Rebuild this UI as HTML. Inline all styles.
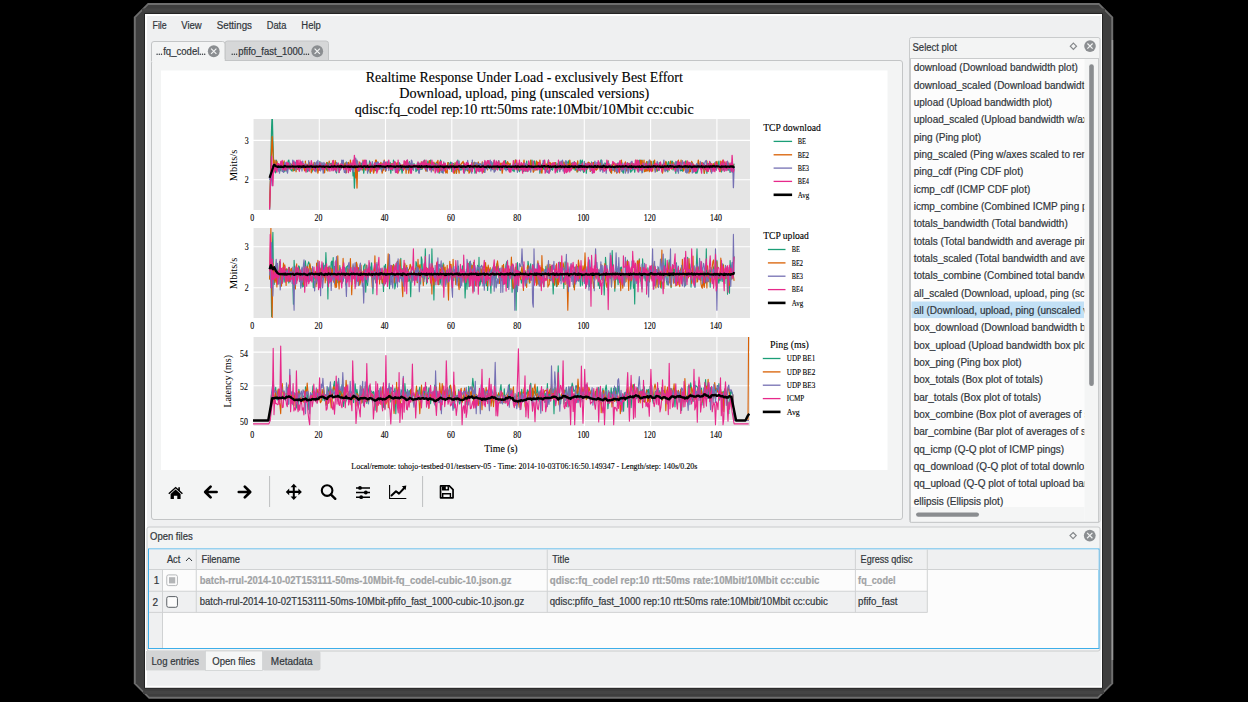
<!DOCTYPE html>
<html><head><meta charset="utf-8"><style>
html,body{margin:0;padding:0;background:#000;width:1248px;height:702px;overflow:hidden}

</style></head><body>
<svg width="1248" height="702" viewBox="0 0 1248 702" style="position:absolute;left:0;top:0" font-family="Liberation Sans">
<rect width="1248" height="702" fill="#000"/>
<path d="M133.8 16.9 L147.8 2.9 H1099.2 L1113.2 16.9 V683.8 L1098.2 698.8 H148.8 L133.8 683.8 Z" fill="#6e6e6e"/>
<rect x="1111.4" y="40" width="1.8" height="620" fill="#969696"/>
<path d="M135.8 17.4 L148.3 4.9 H1098.7 L1111.2 17.4 V683.3 L1097.7 696.8 H149.3 L135.8 683.3 Z" fill="#3e3e3e"/>
<rect x="142" y="8.5" width="963" height="3" fill="#444"/><rect x="143" y="691" width="961" height="3" fill="#444"/>
<rect x="144.3" y="13.3" width="958.4" height="675.2" fill="#1a1a1a"/>
<rect x="145" y="14" width="957" height="673.8" fill="#ffffff"/>
<rect x="147" y="16" width="954" height="669.8" fill="#eff0f1"/>
<text x="152.5" y="29" font-size="10" fill="#31363b" textLength="14.2" lengthAdjust="spacingAndGlyphs" stroke="#31363b" stroke-width="0.2" >File</text>
<text x="181.3" y="29" font-size="10" fill="#31363b" textLength="20.4" lengthAdjust="spacingAndGlyphs" stroke="#31363b" stroke-width="0.2" >View</text>
<text x="216.7" y="29" font-size="10" fill="#31363b" textLength="35.3" lengthAdjust="spacingAndGlyphs" stroke="#31363b" stroke-width="0.2" >Settings</text>
<text x="266.7" y="29" font-size="10" fill="#31363b" textLength="19.6" lengthAdjust="spacingAndGlyphs" stroke="#31363b" stroke-width="0.2" >Data</text>
<text x="301.3" y="29" font-size="10" fill="#31363b" textLength="19.5" lengthAdjust="spacingAndGlyphs" stroke="#31363b" stroke-width="0.2" >Help</text>
<rect x="151.5" y="60.5" width="751" height="459" rx="2.5" fill="#f3f4f4" stroke="#c3c5c6" stroke-width="1"/>
<path d="M225 60.5 V43.5 a2.5 2.5 0 0 1 2.5 -2.5 H326 a2.5 2.5 0 0 1 2.5 2.5 V60.5 Z" fill="#d6d7d8" stroke="#c3c5c6" stroke-width="1"/>
<path d="M151.5 61 V44 a2.5 2.5 0 0 1 2.5 -2.5 H222.5 a2.5 2.5 0 0 1 2.5 2.5 V61" fill="#f3f4f4" stroke="#c3c5c6" stroke-width="1"/>
<rect x="152" y="59" width="72.5" height="3" fill="#f3f4f4"/>
<circle cx="157.10" cy="54.3" r="0.72" fill="#31363b"/>
<circle cx="159.30" cy="54.3" r="0.72" fill="#31363b"/>
<circle cx="161.50" cy="54.3" r="0.72" fill="#31363b"/>
<text x="163.2" y="55" font-size="10" fill="#31363b" textLength="36.2" lengthAdjust="spacingAndGlyphs" stroke="#31363b" stroke-width="0.2" >fq_codel</text>
<circle cx="200.30" cy="54.3" r="0.72" fill="#31363b"/>
<circle cx="202.50" cy="54.3" r="0.72" fill="#31363b"/>
<circle cx="204.70" cy="54.3" r="0.72" fill="#31363b"/>
<circle cx="232.20" cy="54.3" r="0.72" fill="#31363b"/>
<circle cx="234.40" cy="54.3" r="0.72" fill="#31363b"/>
<circle cx="236.60" cy="54.3" r="0.72" fill="#31363b"/>
<text x="238.2" y="55" font-size="10" fill="#31363b" textLength="64.8" lengthAdjust="spacingAndGlyphs" stroke="#31363b" stroke-width="0.2" >pfifo_fast_1000</text>
<circle cx="304.10" cy="54.3" r="0.72" fill="#31363b"/>
<circle cx="306.30" cy="54.3" r="0.72" fill="#31363b"/>
<circle cx="308.50" cy="54.3" r="0.72" fill="#31363b"/>
<circle cx="213.75" cy="51.25" r="5.9" fill="#8b8e91"/>
<path d="M211.095 48.595 L216.405 53.905 M216.405 48.595 L211.095 53.905" stroke="#f3f4f4" stroke-width="1.15"/>
<circle cx="317.25" cy="51.25" r="5.9" fill="#8b8e91"/>
<path d="M314.595 48.595 L319.905 53.905 M319.905 48.595 L314.595 53.905" stroke="#f3f4f4" stroke-width="1.15"/>
<rect x="161" y="70.5" width="726.5" height="399.5" fill="#ffffff"/>
<text x="524.3" y="81.9" font-size="14" fill="#000" font-family="Liberation Serif" textLength="317" lengthAdjust="spacingAndGlyphs" text-anchor="middle" stroke="#000" stroke-width="0.12" >Realtime Response Under Load - exclusively Best Effort</text>
<text x="524.3" y="98" font-size="14" fill="#000" font-family="Liberation Serif" textLength="250" lengthAdjust="spacingAndGlyphs" text-anchor="middle" stroke="#000" stroke-width="0.12" >Download, upload, ping (unscaled versions)</text>
<text x="524.3" y="113.6" font-size="14" fill="#000" font-family="Liberation Serif" textLength="339" lengthAdjust="spacingAndGlyphs" text-anchor="middle" stroke="#000" stroke-width="0.12" >qdisc:fq_codel rep:10 rtt:50ms rate:10Mbit/10Mbit cc:cubic</text>
<rect x="253" y="119" width="497" height="91" fill="#e5e5e5"/>
<line x1="253.0" y1="119" x2="253.0" y2="210" stroke="#fff" stroke-width="1.1"/>
<line x1="319.3" y1="119" x2="319.3" y2="210" stroke="#fff" stroke-width="1.1"/>
<line x1="385.5" y1="119" x2="385.5" y2="210" stroke="#fff" stroke-width="1.1"/>
<line x1="451.8" y1="119" x2="451.8" y2="210" stroke="#fff" stroke-width="1.1"/>
<line x1="518.1" y1="119" x2="518.1" y2="210" stroke="#fff" stroke-width="1.1"/>
<line x1="584.3" y1="119" x2="584.3" y2="210" stroke="#fff" stroke-width="1.1"/>
<line x1="650.6" y1="119" x2="650.6" y2="210" stroke="#fff" stroke-width="1.1"/>
<line x1="716.9" y1="119" x2="716.9" y2="210" stroke="#fff" stroke-width="1.1"/>
<line x1="253" y1="140.4" x2="750" y2="140.4" stroke="#fff" stroke-width="1.1"/>
<line x1="253" y1="179.8" x2="750" y2="179.8" stroke="#fff" stroke-width="1.1"/>
<clipPath id="c1"><rect x="253" y="119" width="497" height="91"/></clipPath>
<g clip-path="url(#c1)">
<polyline points="269.6,209.4 270.2,187.7 270.9,156.2 271.6,128.6 272.2,112.8 272.9,140.4 273.5,160.1 274.2,166.0 274.9,165.5 275.5,172.8 276.2,160.1 276.9,163.5 277.5,169.0 278.2,163.8 278.8,168.1 279.5,166.8 280.2,164.1 280.8,170.6 281.5,164.8 282.2,162.2 282.8,162.4 283.5,167.5 284.1,163.8 284.8,171.7 285.5,167.1 286.1,165.2 286.8,170.8 287.5,166.9 288.1,161.2 288.8,160.1 289.4,164.2 290.1,164.0 290.8,169.6 291.4,170.4 292.1,171.1 292.8,164.9 293.4,164.2 294.1,168.7 294.7,170.5 295.4,165.8 296.1,165.6 296.7,167.0 297.4,162.6 298.1,166.9 298.7,166.8 299.4,170.1 300.0,166.2 300.7,162.4 301.4,166.4 302.0,166.4 302.7,165.2 303.4,165.7 304.0,164.9 304.7,164.9 305.4,164.7 306.0,169.1 306.7,165.7 307.3,171.7 308.0,165.8 308.7,170.6 309.3,166.8 310.0,165.1 310.7,167.9 311.3,166.3 312.0,171.8 312.6,169.3 313.3,164.4 314.0,170.2 314.6,164.6 315.3,171.0 316.0,169.5 316.6,170.1 317.3,166.6 317.9,164.9 318.6,170.0 319.3,167.2 319.9,161.5 320.6,167.6 321.3,169.2 321.9,165.4 322.6,167.3 323.2,168.8 323.9,172.3 324.6,164.0 325.2,168.4 325.9,166.6 326.6,170.0 327.2,162.5 327.9,164.2 328.5,163.5 329.2,166.9 329.9,165.1 330.5,163.8 331.2,163.4 331.9,165.6 332.5,166.8 333.2,167.7 333.8,169.0 334.5,169.6 335.2,165.5 335.8,167.4 336.5,172.9 337.2,167.1 337.8,163.2 338.5,167.5 339.1,172.4 339.8,167.0 340.5,164.1 341.1,166.0 341.8,168.0 342.5,160.8 343.1,160.6 343.8,166.9 344.4,164.0 345.1,165.4 345.8,164.1 346.4,162.0 347.1,164.0 347.8,166.3 348.4,168.7 349.1,169.2 349.7,166.7 350.4,163.0 351.1,165.7 351.7,166.4 352.4,165.8 353.1,175.9 353.7,164.9 354.4,188.1 355.1,172.8 355.7,171.9 356.4,170.2 357.0,161.5 357.7,167.1 358.4,167.4 359.0,171.4 359.7,165.7 360.4,168.6 361.0,163.1 361.7,163.9 362.3,169.0 363.0,165.3 363.7,173.1 364.3,168.7 365.0,162.7 365.7,164.1 366.3,166.0 367.0,166.7 367.6,171.1 368.3,170.9 369.0,165.9 369.6,161.0 370.3,173.1 371.0,164.6 371.6,164.7 372.3,163.6 372.9,169.3 373.6,168.3 374.3,166.5 374.9,169.8 375.6,170.5 376.3,169.4 376.9,166.8 377.6,165.4 378.2,166.7 378.9,166.4 379.6,168.8 380.2,168.9 380.9,163.1 381.6,166.8 382.2,166.9 382.9,163.7 383.5,162.7 384.2,162.6 384.9,165.3 385.5,166.8 386.2,165.7 386.9,166.0 387.5,162.2 388.2,165.7 388.8,164.6 389.5,166.7 390.2,162.3 390.8,173.1 391.5,165.4 392.2,164.2 392.8,170.3 393.5,160.1 394.1,167.1 394.8,167.1 395.5,170.0 396.1,163.8 396.8,165.9 397.5,168.5 398.1,165.9 398.8,164.4 399.4,162.8 400.1,165.9 400.8,169.6 401.4,168.4 402.1,173.1 402.8,168.9 403.4,164.3 404.1,165.1 404.8,166.9 405.4,167.7 406.1,161.6 406.7,165.7 407.4,163.7 408.1,165.4 408.7,168.7 409.4,161.7 410.1,170.5 410.7,170.4 411.4,168.0 412.0,168.9 412.7,168.4 413.4,168.5 414.0,163.5 414.7,166.4 415.4,165.5 416.0,171.6 416.7,169.3 417.3,163.2 418.0,170.4 418.7,162.9 419.3,169.8 420.0,165.7 420.7,169.3 421.3,166.0 422.0,169.4 422.6,167.4 423.3,161.3 424.0,167.8 424.6,160.2 425.3,168.0 426.0,170.3 426.6,166.4 427.3,167.9 427.9,161.1 428.6,163.9 429.3,162.9 429.9,164.6 430.6,160.1 431.3,164.1 431.9,164.9 432.6,169.2 433.2,169.5 433.9,166.0 434.6,163.5 435.2,163.1 435.9,169.6 436.6,164.9 437.2,166.0 437.9,170.1 438.5,165.0 439.2,173.1 439.9,165.8 440.5,160.1 441.2,169.8 441.9,166.5 442.5,172.6 443.2,169.0 443.8,164.2 444.5,169.9 445.2,166.7 445.8,167.7 446.5,167.8 447.2,166.0 447.8,165.1 448.5,162.7 449.1,164.0 449.8,168.4 450.5,162.1 451.1,162.7 451.8,171.5 452.5,164.5 453.1,164.0 453.8,163.6 454.5,164.9 455.1,170.7 455.8,167.4 456.4,173.1 457.1,167.1 457.8,160.2 458.4,164.5 459.1,164.0 459.8,168.2 460.4,169.8 461.1,170.0 461.7,166.2 462.4,169.1 463.1,168.6 463.7,163.0 464.4,171.8 465.1,170.7 465.7,168.2 466.4,166.9 467.0,167.0 467.7,171.0 468.4,166.0 469.0,167.0 469.7,165.5 470.4,170.0 471.0,165.8 471.7,165.9 472.3,168.7 473.0,167.3 473.7,168.4 474.3,162.3 475.0,173.1 475.7,171.2 476.3,172.0 477.0,167.8 477.6,168.7 478.3,167.9 479.0,164.3 479.6,171.7 480.3,169.3 481.0,167.3 481.6,170.4 482.3,165.4 482.9,165.6 483.6,168.8 484.3,172.2 484.9,161.6 485.6,165.1 486.3,165.3 486.9,166.4 487.6,166.6 488.2,164.0 488.9,166.7 489.6,168.6 490.2,164.4 490.9,166.4 491.6,169.0 492.2,169.5 492.9,162.9 493.5,164.6 494.2,160.4 494.9,168.3 495.5,168.9 496.2,165.3 496.9,162.3 497.5,164.7 498.2,165.2 498.8,160.7 499.5,168.9 500.2,170.5 500.8,168.9 501.5,167.6 502.2,165.4 502.8,163.4 503.5,165.3 504.2,161.8 504.8,169.2 505.5,160.6 506.1,169.2 506.8,162.9 507.5,169.6 508.1,165.5 508.8,166.4 509.5,165.0 510.1,164.2 510.8,167.3 511.4,166.8 512.1,165.8 512.8,170.7 513.4,168.9 514.1,171.7 514.8,166.6 515.4,160.1 516.1,164.3 516.7,169.3 517.4,168.8 518.1,163.5 518.7,168.1 519.4,171.7 520.1,169.8 520.7,169.9 521.4,169.8 522.0,164.5 522.7,166.4 523.4,171.3 524.0,168.3 524.7,170.2 525.4,170.4 526.0,171.4 526.7,161.1 527.3,167.6 528.0,164.8 528.7,163.9 529.3,167.8 530.0,164.9 530.7,164.9 531.3,165.9 532.0,160.1 532.6,165.7 533.3,167.3 534.0,164.6 534.6,161.0 535.3,163.5 536.0,168.1 536.6,169.3 537.3,169.5 537.9,168.7 538.6,165.4 539.3,163.9 539.9,173.1 540.6,166.7 541.3,170.1 541.9,164.4 542.6,163.7 543.2,169.1 543.9,168.0 544.6,169.6 545.2,165.4 545.9,171.7 546.6,170.1 547.2,168.8 547.9,162.7 548.5,160.1 549.2,166.5 549.9,170.5 550.5,166.4 551.2,169.3 551.9,165.2 552.5,170.1 553.2,167.8 553.9,166.6 554.5,165.0 555.2,166.8 555.8,162.6 556.5,166.2 557.2,172.3 557.8,163.7 558.5,167.5 559.2,168.7 559.8,161.8 560.5,169.7 561.1,166.4 561.8,168.8 562.5,162.3 563.1,167.7 563.8,165.9 564.5,171.0 565.1,162.1 565.8,170.0 566.4,163.7 567.1,163.1 567.8,162.7 568.4,160.9 569.1,170.3 569.8,165.3 570.4,166.2 571.1,165.3 571.7,163.1 572.4,166.3 573.1,169.2 573.7,166.9 574.4,161.7 575.1,170.3 575.7,166.3 576.4,169.7 577.0,163.1 577.7,171.8 578.4,167.7 579.0,167.0 579.7,166.2 580.4,160.1 581.0,161.7 581.7,169.8 582.3,160.1 583.0,170.4 583.7,172.5 584.3,171.3 585.0,166.0 585.7,164.9 586.3,173.1 587.0,165.2 587.6,167.4 588.3,164.4 589.0,167.8 589.6,163.8 590.3,164.8 591.0,170.3 591.6,162.0 592.3,165.9 592.9,164.3 593.6,162.6 594.3,169.7 594.9,166.9 595.6,169.2 596.3,169.6 596.9,165.8 597.6,165.5 598.2,162.4 598.9,162.2 599.6,166.7 600.2,169.2 600.9,160.1 601.6,160.1 602.2,166.9 602.9,169.5 603.6,167.9 604.2,165.7 604.9,163.0 605.5,163.5 606.2,165.2 606.9,167.4 607.5,166.1 608.2,167.6 608.9,166.4 609.5,166.9 610.2,164.9 610.8,172.5 611.5,167.7 612.2,167.5 612.8,170.2 613.5,167.1 614.2,169.9 614.8,168.7 615.5,167.5 616.1,167.4 616.8,168.4 617.5,163.1 618.1,166.0 618.8,165.6 619.5,165.9 620.1,168.7 620.8,169.4 621.4,164.0 622.1,167.7 622.8,172.2 623.4,173.1 624.1,165.9 624.8,168.9 625.4,166.8 626.1,168.3 626.7,167.9 627.4,167.1 628.1,170.5 628.7,166.7 629.4,163.5 630.1,164.4 630.7,172.1 631.4,170.8 632.0,170.8 632.7,167.4 633.4,163.9 634.0,165.6 634.7,172.1 635.4,166.4 636.0,164.1 636.7,168.0 637.3,160.6 638.0,168.7 638.7,162.9 639.3,160.1 640.0,170.6 640.7,167.6 641.3,164.8 642.0,160.1 642.6,172.2 643.3,164.8 644.0,165.7 644.6,167.9 645.3,169.2 646.0,168.3 646.6,167.6 647.3,170.6 647.9,161.6 648.6,170.1 649.3,167.9 649.9,168.7 650.6,167.9 651.3,166.3 651.9,169.0 652.6,167.3 653.3,161.2 653.9,163.3 654.6,167.5 655.2,163.7 655.9,169.0 656.6,165.9 657.2,171.1 657.9,170.2 658.6,169.3 659.2,162.7 659.9,165.9 660.5,164.9 661.2,166.1 661.9,165.4 662.5,165.3 663.2,164.2 663.9,166.1 664.5,169.5 665.2,169.1 665.8,162.8 666.5,162.2 667.2,164.8 667.8,171.8 668.5,161.6 669.2,165.6 669.8,166.8 670.5,166.5 671.1,167.8 671.8,161.1 672.5,161.3 673.1,170.0 673.8,167.2 674.5,165.6 675.1,162.6 675.8,173.1 676.4,163.7 677.1,161.3 677.8,167.7 678.4,166.8 679.1,162.7 679.8,165.4 680.4,170.8 681.1,170.3 681.7,169.9 682.4,171.1 683.1,166.7 683.7,168.3 684.4,166.5 685.1,164.4 685.7,161.0 686.4,166.0 687.0,172.5 687.7,162.3 688.4,167.0 689.0,163.0 689.7,168.1 690.4,165.7 691.0,167.1 691.7,166.7 692.3,162.6 693.0,168.7 693.7,166.1 694.3,166.0 695.0,167.9 695.7,173.1 696.3,165.6 697.0,173.1 697.6,171.4 698.3,168.1 699.0,165.3 699.6,163.9 700.3,164.0 701.0,164.8 701.6,167.8 702.3,162.8 703.0,167.5 703.6,163.1 704.3,173.1 704.9,169.7 705.6,168.5 706.3,166.7 706.9,173.1 707.6,164.1 708.3,163.5 708.9,164.2 709.6,168.3 710.2,162.1 710.9,168.4 711.6,163.8 712.2,166.8 712.9,166.7 713.6,167.1 714.2,166.7 714.9,163.1 715.5,162.1 716.2,162.1 716.9,163.8 717.5,164.5 718.2,165.2 718.9,161.1 719.5,168.0 720.2,168.6 720.8,166.5 721.5,171.9 722.2,167.4 722.8,166.8 723.5,169.9 724.2,168.5 724.8,164.5 725.5,167.4 726.1,166.4 726.8,163.4 727.5,168.6 728.1,170.3 728.8,166.8 729.5,165.3 730.1,172.4 730.8,164.6 731.4,167.6 732.1,168.0 732.8,169.4 733.4,167.2 734.1,163.6" fill="none" stroke="#1b9e77" stroke-width="1.25" stroke-linejoin="round" />
<polyline points="269.6,207.4 270.2,187.7 270.9,168.0 271.6,148.3 272.2,136.5 272.9,152.2 273.5,164.0 274.2,168.0 274.9,160.1 275.5,166.8 276.2,169.8 276.9,161.2 277.5,168.6 278.2,165.1 278.8,164.2 279.5,171.3 280.2,166.2 280.8,162.9 281.5,167.7 282.2,164.6 282.8,166.7 283.5,163.4 284.1,160.8 284.8,170.1 285.5,167.5 286.1,165.4 286.8,168.6 287.5,169.2 288.1,167.7 288.8,167.5 289.4,168.7 290.1,165.6 290.8,164.1 291.4,164.3 292.1,164.5 292.8,162.8 293.4,170.9 294.1,167.0 294.7,166.0 295.4,164.9 296.1,171.7 296.7,160.7 297.4,169.4 298.1,165.8 298.7,164.3 299.4,163.2 300.0,168.8 300.7,168.3 301.4,165.4 302.0,164.7 302.7,163.7 303.4,166.8 304.0,168.8 304.7,170.8 305.4,161.1 306.0,170.9 306.7,164.4 307.3,165.7 308.0,164.2 308.7,163.6 309.3,162.3 310.0,166.8 310.7,165.3 311.3,172.8 312.0,166.4 312.6,169.5 313.3,167.1 314.0,162.7 314.6,166.3 315.3,163.1 316.0,167.2 316.6,165.3 317.3,167.9 317.9,173.1 318.6,168.8 319.3,167.4 319.9,166.1 320.6,166.6 321.3,167.0 321.9,163.6 322.6,164.6 323.2,167.8 323.9,163.8 324.6,172.8 325.2,167.5 325.9,167.0 326.6,162.5 327.2,168.3 327.9,171.2 328.5,166.0 329.2,161.2 329.9,167.2 330.5,166.9 331.2,167.2 331.9,166.4 332.5,162.5 333.2,160.4 333.8,165.1 334.5,166.9 335.2,160.7 335.8,166.2 336.5,166.4 337.2,167.7 337.8,167.6 338.5,165.8 339.1,167.5 339.8,165.2 340.5,166.3 341.1,164.8 341.8,167.8 342.5,167.2 343.1,165.8 343.8,166.3 344.4,166.2 345.1,162.9 345.8,169.9 346.4,172.7 347.1,164.3 347.8,167.3 348.4,162.3 349.1,166.8 349.7,170.2 350.4,160.1 351.1,165.3 351.7,168.0 352.4,168.9 353.1,164.8 353.7,168.7 354.4,165.3 355.1,162.9 355.7,177.8 356.4,167.7 357.0,188.1 357.7,161.3 358.4,168.0 359.0,168.0 359.7,162.0 360.4,167.7 361.0,167.1 361.7,165.4 362.3,170.0 363.0,160.1 363.7,162.8 364.3,165.9 365.0,168.4 365.7,170.2 366.3,165.4 367.0,164.4 367.6,167.8 368.3,167.2 369.0,164.8 369.6,166.8 370.3,172.4 371.0,164.5 371.6,165.8 372.3,164.3 372.9,169.0 373.6,173.1 374.3,170.5 374.9,165.6 375.6,160.1 376.3,160.1 376.9,165.6 377.6,171.2 378.2,167.6 378.9,165.2 379.6,165.2 380.2,166.3 380.9,162.4 381.6,169.4 382.2,173.1 382.9,169.4 383.5,170.2 384.2,160.1 384.9,167.2 385.5,171.1 386.2,164.6 386.9,163.4 387.5,166.4 388.2,166.0 388.8,163.4 389.5,165.0 390.2,168.8 390.8,164.7 391.5,163.7 392.2,165.5 392.8,163.8 393.5,164.7 394.1,167.3 394.8,167.1 395.5,164.7 396.1,168.3 396.8,163.0 397.5,162.7 398.1,173.0 398.8,166.8 399.4,169.0 400.1,168.6 400.8,166.1 401.4,167.1 402.1,164.8 402.8,165.6 403.4,165.4 404.1,169.1 404.8,167.7 405.4,162.0 406.1,173.1 406.7,161.2 407.4,168.4 408.1,162.9 408.7,173.1 409.4,167.9 410.1,163.9 410.7,166.1 411.4,163.4 412.0,169.4 412.7,168.4 413.4,168.7 414.0,165.0 414.7,165.1 415.4,167.0 416.0,167.4 416.7,167.5 417.3,166.3 418.0,169.6 418.7,166.8 419.3,167.1 420.0,168.3 420.7,168.4 421.3,161.9 422.0,168.5 422.6,165.3 423.3,162.3 424.0,164.3 424.6,166.5 425.3,163.4 426.0,171.1 426.6,170.5 427.3,167.8 427.9,167.3 428.6,166.9 429.3,160.7 429.9,161.3 430.6,166.7 431.3,165.8 431.9,169.5 432.6,165.6 433.2,170.8 433.9,162.2 434.6,168.2 435.2,164.8 435.9,170.7 436.6,162.2 437.2,164.7 437.9,160.4 438.5,166.4 439.2,171.7 439.9,169.1 440.5,170.6 441.2,161.6 441.9,168.6 442.5,169.0 443.2,164.7 443.8,165.8 444.5,165.0 445.2,168.2 445.8,172.9 446.5,170.9 447.2,173.1 447.8,162.6 448.5,163.7 449.1,167.8 449.8,164.6 450.5,164.5 451.1,164.6 451.8,164.9 452.5,163.8 453.1,166.3 453.8,173.1 454.5,173.1 455.1,162.6 455.8,164.7 456.4,173.1 457.1,166.0 457.8,169.4 458.4,168.3 459.1,173.1 459.8,164.2 460.4,166.9 461.1,164.0 461.7,163.2 462.4,162.5 463.1,161.4 463.7,165.7 464.4,165.9 465.1,168.6 465.7,164.9 466.4,167.3 467.0,170.3 467.7,162.8 468.4,164.3 469.0,173.1 469.7,172.5 470.4,167.3 471.0,170.8 471.7,162.7 472.3,166.0 473.0,164.8 473.7,163.6 474.3,162.3 475.0,167.4 475.7,164.6 476.3,165.8 477.0,164.0 477.6,164.8 478.3,162.0 479.0,164.8 479.6,168.1 480.3,166.2 481.0,170.1 481.6,165.5 482.3,161.8 482.9,168.5 483.6,171.8 484.3,166.8 484.9,168.1 485.6,166.5 486.3,168.4 486.9,166.3 487.6,169.8 488.2,161.6 488.9,167.3 489.6,164.9 490.2,164.1 490.9,167.0 491.6,165.1 492.2,167.3 492.9,168.0 493.5,167.3 494.2,165.0 494.9,170.6 495.5,169.4 496.2,169.1 496.9,168.3 497.5,162.9 498.2,166.6 498.8,167.5 499.5,166.1 500.2,163.2 500.8,168.9 501.5,163.3 502.2,173.1 502.8,169.3 503.5,161.9 504.2,161.6 504.8,165.9 505.5,167.9 506.1,163.9 506.8,167.8 507.5,161.6 508.1,162.7 508.8,164.0 509.5,169.2 510.1,163.4 510.8,167.3 511.4,167.2 512.1,167.8 512.8,166.8 513.4,164.9 514.1,163.8 514.8,163.8 515.4,160.1 516.1,167.5 516.7,162.8 517.4,168.5 518.1,167.0 518.7,170.1 519.4,162.6 520.1,165.6 520.7,166.0 521.4,166.8 522.0,163.5 522.7,168.0 523.4,165.1 524.0,160.1 524.7,166.8 525.4,168.3 526.0,169.6 526.7,163.8 527.3,166.1 528.0,168.7 528.7,169.0 529.3,166.3 530.0,169.5 530.7,160.1 531.3,167.0 532.0,166.9 532.6,166.6 533.3,172.1 534.0,170.9 534.6,167.5 535.3,166.4 536.0,170.3 536.6,161.0 537.3,164.9 537.9,162.2 538.6,162.6 539.3,167.1 539.9,160.1 540.6,165.9 541.3,172.3 541.9,173.1 542.6,166.3 543.2,163.6 543.9,166.1 544.6,160.8 545.2,167.3 545.9,164.5 546.6,164.0 547.2,169.6 547.9,165.4 548.5,165.2 549.2,162.9 549.9,162.5 550.5,163.2 551.2,168.7 551.9,164.0 552.5,163.0 553.2,166.2 553.9,164.0 554.5,163.9 555.2,162.6 555.8,166.1 556.5,164.8 557.2,165.7 557.8,166.1 558.5,168.3 559.2,167.4 559.8,169.9 560.5,167.0 561.1,164.2 561.8,164.4 562.5,164.0 563.1,166.7 563.8,162.0 564.5,167.8 565.1,164.0 565.8,165.1 566.4,168.7 567.1,168.6 567.8,164.0 568.4,166.3 569.1,165.5 569.8,160.1 570.4,164.6 571.1,166.0 571.7,164.1 572.4,168.3 573.1,166.9 573.7,165.0 574.4,168.9 575.1,166.5 575.7,166.9 576.4,166.0 577.0,171.9 577.7,160.8 578.4,166.6 579.0,164.6 579.7,169.6 580.4,170.5 581.0,166.3 581.7,167.4 582.3,164.3 583.0,169.3 583.7,169.5 584.3,165.3 585.0,164.2 585.7,163.5 586.3,166.5 587.0,165.5 587.6,168.9 588.3,162.2 589.0,162.8 589.6,162.9 590.3,171.4 591.0,163.6 591.6,168.7 592.3,164.8 592.9,165.0 593.6,162.5 594.3,167.0 594.9,167.5 595.6,169.5 596.3,170.1 596.9,164.6 597.6,169.2 598.2,164.3 598.9,167.6 599.6,168.2 600.2,163.4 600.9,163.7 601.6,169.5 602.2,166.9 602.9,166.4 603.6,164.3 604.2,168.7 604.9,167.7 605.5,166.8 606.2,164.2 606.9,163.6 607.5,168.1 608.2,160.9 608.9,165.1 609.5,168.9 610.2,171.3 610.8,168.0 611.5,173.1 612.2,165.9 612.8,164.7 613.5,162.4 614.2,164.9 614.8,171.8 615.5,167.3 616.1,164.2 616.8,173.1 617.5,169.0 618.1,164.5 618.8,166.3 619.5,172.8 620.1,168.0 620.8,166.4 621.4,160.1 622.1,167.8 622.8,169.3 623.4,165.7 624.1,165.4 624.8,164.7 625.4,161.9 626.1,166.6 626.7,170.8 627.4,166.3 628.1,166.4 628.7,163.4 629.4,163.8 630.1,168.7 630.7,164.0 631.4,163.3 632.0,167.0 632.7,163.5 633.4,165.9 634.0,165.9 634.7,166.9 635.4,163.9 636.0,160.1 636.7,165.7 637.3,170.1 638.0,167.2 638.7,168.3 639.3,165.4 640.0,166.9 640.7,160.1 641.3,164.1 642.0,160.6 642.6,168.6 643.3,167.1 644.0,160.1 644.6,171.7 645.3,166.0 646.0,171.3 646.6,161.6 647.3,170.9 647.9,167.4 648.6,167.0 649.3,171.7 649.9,160.1 650.6,167.0 651.3,161.3 651.9,168.6 652.6,171.1 653.3,165.8 653.9,165.8 654.6,160.1 655.2,169.8 655.9,171.4 656.6,168.7 657.2,165.5 657.9,164.7 658.6,168.8 659.2,167.6 659.9,164.7 660.5,163.0 661.2,168.3 661.9,166.1 662.5,173.1 663.2,169.5 663.9,165.1 664.5,166.5 665.2,167.1 665.8,161.4 666.5,167.4 667.2,169.9 667.8,165.8 668.5,165.8 669.2,170.1 669.8,163.3 670.5,161.1 671.1,168.3 671.8,169.2 672.5,166.7 673.1,162.6 673.8,168.3 674.5,168.8 675.1,168.3 675.8,165.7 676.4,165.8 677.1,167.0 677.8,162.7 678.4,160.1 679.1,168.3 679.8,163.2 680.4,165.6 681.1,160.1 681.7,169.2 682.4,167.6 683.1,166.1 683.7,171.0 684.4,167.1 685.1,164.2 685.7,171.0 686.4,166.1 687.0,160.8 687.7,168.4 688.4,169.3 689.0,173.1 689.7,166.8 690.4,171.6 691.0,164.7 691.7,161.3 692.3,164.7 693.0,169.0 693.7,164.4 694.3,168.0 695.0,170.0 695.7,168.1 696.3,165.7 697.0,167.6 697.6,164.8 698.3,160.1 699.0,164.5 699.6,164.1 700.3,168.6 701.0,162.3 701.6,165.4 702.3,163.3 703.0,168.9 703.6,165.8 704.3,173.1 704.9,167.6 705.6,169.2 706.3,169.7 706.9,161.0 707.6,171.3 708.3,167.0 708.9,167.0 709.6,164.8 710.2,163.3 710.9,171.6 711.6,168.2 712.2,168.7 712.9,164.3 713.6,163.6 714.2,167.8 714.9,168.2 715.5,169.7 716.2,165.4 716.9,161.3 717.5,165.3 718.2,168.8 718.9,169.2 719.5,168.8 720.2,171.7 720.8,161.1 721.5,166.3 722.2,167.6 722.8,160.1 723.5,165.9 724.2,161.9 724.8,165.7 725.5,163.1 726.1,166.3 726.8,167.7 727.5,165.3 728.1,164.3 728.8,163.1 729.5,165.9 730.1,167.4 730.8,167.7 731.4,165.6 732.1,168.1 732.8,167.6 733.4,164.9 734.1,164.7" fill="none" stroke="#d95f02" stroke-width="1.25" stroke-linejoin="round" />
<polyline points="269.6,179.8 270.2,175.9 270.9,171.9 271.6,179.8 272.2,185.7 272.9,175.9 273.5,168.0 274.2,163.9 274.9,167.2 275.5,165.3 276.2,169.7 276.9,167.3 277.5,169.2 278.2,171.1 278.8,165.2 279.5,173.1 280.2,166.8 280.8,164.1 281.5,165.3 282.2,171.5 282.8,165.8 283.5,172.4 284.1,169.4 284.8,162.1 285.5,166.1 286.1,162.9 286.8,170.0 287.5,173.1 288.1,169.0 288.8,162.5 289.4,163.7 290.1,163.2 290.8,167.1 291.4,166.9 292.1,167.2 292.8,160.1 293.4,166.3 294.1,161.0 294.7,167.1 295.4,162.2 296.1,170.0 296.7,168.2 297.4,165.4 298.1,168.4 298.7,167.9 299.4,167.1 300.0,168.3 300.7,161.7 301.4,163.0 302.0,171.0 302.7,161.1 303.4,166.7 304.0,166.6 304.7,167.1 305.4,163.8 306.0,164.3 306.7,168.2 307.3,166.4 308.0,170.7 308.7,160.7 309.3,169.2 310.0,169.3 310.7,168.8 311.3,166.1 312.0,164.2 312.6,167.6 313.3,166.4 314.0,167.6 314.6,162.4 315.3,165.8 316.0,171.9 316.6,161.9 317.3,165.4 317.9,160.4 318.6,168.4 319.3,168.1 319.9,167.1 320.6,170.9 321.3,167.7 321.9,162.5 322.6,164.3 323.2,173.1 323.9,162.4 324.6,165.4 325.2,163.9 325.9,166.4 326.6,165.9 327.2,166.3 327.9,166.3 328.5,169.8 329.2,163.2 329.9,165.8 330.5,165.3 331.2,165.4 331.9,167.4 332.5,166.7 333.2,170.7 333.8,165.7 334.5,165.6 335.2,167.2 335.8,171.9 336.5,162.3 337.2,167.0 337.8,166.5 338.5,167.5 339.1,168.4 339.8,167.8 340.5,170.0 341.1,168.3 341.8,160.1 342.5,162.8 343.1,160.2 343.8,168.4 344.4,172.4 345.1,170.8 345.8,173.1 346.4,163.1 347.1,162.6 347.8,166.1 348.4,165.3 349.1,165.3 349.7,166.8 350.4,164.2 351.1,169.7 351.7,167.9 352.4,166.9 353.1,171.9 353.7,169.7 354.4,165.1 355.1,165.4 355.7,158.1 356.4,163.6 357.0,160.1 357.7,164.1 358.4,166.7 359.0,164.6 359.7,170.6 360.4,167.2 361.0,169.8 361.7,168.1 362.3,162.8 363.0,161.4 363.7,166.4 364.3,167.9 365.0,164.0 365.7,165.0 366.3,160.4 367.0,164.5 367.6,173.1 368.3,166.3 369.0,167.5 369.6,169.0 370.3,166.1 371.0,166.3 371.6,167.6 372.3,161.7 372.9,165.3 373.6,165.2 374.3,166.0 374.9,162.6 375.6,170.0 376.3,162.7 376.9,167.2 377.6,161.8 378.2,162.0 378.9,164.9 379.6,167.9 380.2,165.6 380.9,165.4 381.6,171.1 382.2,167.5 382.9,168.7 383.5,162.2 384.2,161.1 384.9,168.8 385.5,168.1 386.2,170.6 386.9,165.7 387.5,163.9 388.2,160.8 388.8,170.5 389.5,163.6 390.2,167.0 390.8,168.8 391.5,167.6 392.2,168.9 392.8,165.1 393.5,166.5 394.1,162.8 394.8,168.2 395.5,172.4 396.1,169.6 396.8,165.4 397.5,171.1 398.1,168.9 398.8,164.8 399.4,170.8 400.1,163.9 400.8,165.4 401.4,168.3 402.1,166.7 402.8,168.1 403.4,167.8 404.1,167.5 404.8,166.5 405.4,166.8 406.1,168.9 406.7,169.6 407.4,160.1 408.1,170.0 408.7,167.0 409.4,162.8 410.1,163.4 410.7,168.8 411.4,160.2 412.0,161.0 412.7,167.5 413.4,170.4 414.0,164.5 414.7,167.1 415.4,167.4 416.0,169.1 416.7,168.4 417.3,166.0 418.0,163.7 418.7,173.0 419.3,173.1 420.0,163.5 420.7,169.2 421.3,164.4 422.0,166.2 422.6,162.6 423.3,163.7 424.0,167.4 424.6,167.0 425.3,165.5 426.0,164.2 426.6,168.5 427.3,171.3 427.9,166.2 428.6,166.7 429.3,167.0 429.9,169.7 430.6,164.6 431.3,172.0 431.9,168.0 432.6,162.5 433.2,170.0 433.9,165.2 434.6,165.1 435.2,165.2 435.9,171.8 436.6,163.3 437.2,166.1 437.9,165.0 438.5,165.6 439.2,166.3 439.9,162.7 440.5,162.0 441.2,172.4 441.9,169.0 442.5,167.0 443.2,173.1 443.8,161.9 444.5,168.9 445.2,164.7 445.8,165.8 446.5,167.2 447.2,169.7 447.8,167.6 448.5,166.2 449.1,164.0 449.8,167.1 450.5,167.7 451.1,167.3 451.8,162.4 452.5,165.6 453.1,168.6 453.8,170.5 454.5,167.8 455.1,169.4 455.8,167.8 456.4,162.2 457.1,164.3 457.8,165.8 458.4,165.2 459.1,161.1 459.8,170.1 460.4,165.1 461.1,167.1 461.7,166.0 462.4,166.3 463.1,167.5 463.7,164.8 464.4,173.1 465.1,165.6 465.7,164.4 466.4,169.5 467.0,169.6 467.7,160.5 468.4,169.3 469.0,167.7 469.7,168.9 470.4,168.4 471.0,168.6 471.7,173.1 472.3,160.1 473.0,168.8 473.7,165.3 474.3,166.7 475.0,162.3 475.7,164.3 476.3,163.0 477.0,162.8 477.6,163.9 478.3,166.4 479.0,163.6 479.6,171.5 480.3,163.7 481.0,164.3 481.6,165.6 482.3,170.7 482.9,162.3 483.6,168.6 484.3,164.5 484.9,172.3 485.6,167.1 486.3,168.5 486.9,168.9 487.6,168.6 488.2,160.9 488.9,166.6 489.6,165.4 490.2,160.1 490.9,171.0 491.6,161.7 492.2,167.7 492.9,168.5 493.5,167.8 494.2,172.2 494.9,171.3 495.5,170.1 496.2,168.3 496.9,164.3 497.5,163.1 498.2,167.7 498.8,165.4 499.5,165.2 500.2,167.2 500.8,165.8 501.5,168.4 502.2,164.8 502.8,167.2 503.5,166.4 504.2,165.7 504.8,166.1 505.5,168.8 506.1,170.8 506.8,166.7 507.5,168.3 508.1,168.2 508.8,166.9 509.5,168.8 510.1,165.1 510.8,165.3 511.4,169.4 512.1,165.4 512.8,169.5 513.4,164.3 514.1,164.6 514.8,166.6 515.4,163.8 516.1,163.3 516.7,165.2 517.4,172.3 518.1,166.1 518.7,165.9 519.4,164.0 520.1,169.6 520.7,164.3 521.4,165.5 522.0,165.3 522.7,170.4 523.4,169.3 524.0,163.0 524.7,164.0 525.4,166.8 526.0,163.2 526.7,165.7 527.3,167.9 528.0,171.5 528.7,163.4 529.3,167.0 530.0,165.8 530.7,172.2 531.3,168.3 532.0,165.7 532.6,167.4 533.3,168.9 534.0,170.1 534.6,165.9 535.3,167.7 536.0,167.7 536.6,167.5 537.3,168.6 537.9,167.6 538.6,168.5 539.3,166.5 539.9,170.9 540.6,170.0 541.3,166.5 541.9,167.1 542.6,166.1 543.2,160.3 543.9,164.3 544.6,163.1 545.2,165.3 545.9,167.0 546.6,169.1 547.2,172.4 547.9,171.0 548.5,173.1 549.2,170.1 549.9,171.6 550.5,169.6 551.2,166.7 551.9,167.9 552.5,163.9 553.2,163.8 553.9,163.4 554.5,163.9 555.2,165.8 555.8,168.2 556.5,165.2 557.2,167.4 557.8,167.2 558.5,165.3 559.2,170.0 559.8,171.7 560.5,165.6 561.1,161.1 561.8,163.1 562.5,160.1 563.1,171.0 563.8,168.6 564.5,173.1 565.1,169.3 565.8,160.7 566.4,161.6 567.1,169.8 567.8,167.6 568.4,169.2 569.1,170.8 569.8,167.4 570.4,167.6 571.1,166.3 571.7,165.8 572.4,164.4 573.1,162.3 573.7,166.9 574.4,167.3 575.1,166.6 575.7,165.2 576.4,167.0 577.0,169.7 577.7,168.2 578.4,164.3 579.0,169.8 579.7,164.1 580.4,171.0 581.0,164.7 581.7,164.8 582.3,167.3 583.0,166.7 583.7,167.3 584.3,161.4 585.0,168.0 585.7,168.9 586.3,165.4 587.0,163.1 587.6,165.6 588.3,167.1 589.0,163.4 589.6,169.0 590.3,169.0 591.0,170.5 591.6,162.8 592.3,173.1 592.9,170.6 593.6,165.8 594.3,165.3 594.9,161.2 595.6,165.3 596.3,168.1 596.9,162.3 597.6,163.3 598.2,163.0 598.9,163.3 599.6,165.0 600.2,171.1 600.9,169.9 601.6,160.5 602.2,166.5 602.9,172.3 603.6,166.4 604.2,163.6 604.9,165.4 605.5,166.6 606.2,173.1 606.9,166.4 607.5,167.0 608.2,161.4 608.9,166.6 609.5,166.8 610.2,168.0 610.8,167.0 611.5,165.8 612.2,168.2 612.8,169.4 613.5,170.5 614.2,166.3 614.8,167.7 615.5,167.6 616.1,171.4 616.8,169.1 617.5,172.5 618.1,163.7 618.8,163.0 619.5,165.4 620.1,167.0 620.8,165.2 621.4,171.3 622.1,170.8 622.8,163.0 623.4,169.9 624.1,166.8 624.8,168.7 625.4,173.1 626.1,168.7 626.7,164.1 627.4,162.6 628.1,173.1 628.7,171.5 629.4,168.5 630.1,163.5 630.7,162.8 631.4,161.7 632.0,161.4 632.7,168.0 633.4,169.7 634.0,163.8 634.7,167.4 635.4,166.5 636.0,167.8 636.7,167.9 637.3,163.8 638.0,169.8 638.7,172.1 639.3,168.8 640.0,166.3 640.7,167.6 641.3,167.1 642.0,172.9 642.6,169.4 643.3,163.3 644.0,167.2 644.6,168.8 645.3,163.2 646.0,168.4 646.6,164.3 647.3,166.0 647.9,165.4 648.6,163.5 649.3,160.1 649.9,162.7 650.6,169.4 651.3,170.2 651.9,167.7 652.6,167.3 653.3,164.5 653.9,166.6 654.6,166.1 655.2,172.1 655.9,166.9 656.6,165.1 657.2,161.4 657.9,164.3 658.6,166.4 659.2,170.4 659.9,166.8 660.5,166.7 661.2,167.2 661.9,166.3 662.5,165.2 663.2,165.3 663.9,160.1 664.5,169.8 665.2,171.7 665.8,165.5 666.5,170.6 667.2,167.4 667.8,167.0 668.5,169.3 669.2,164.3 669.8,164.7 670.5,166.3 671.1,164.9 671.8,164.0 672.5,167.7 673.1,164.9 673.8,166.3 674.5,166.8 675.1,168.2 675.8,161.3 676.4,165.8 677.1,171.2 677.8,165.2 678.4,173.1 679.1,165.9 679.8,164.4 680.4,162.3 681.1,166.1 681.7,169.0 682.4,160.7 683.1,163.5 683.7,162.7 684.4,167.6 685.1,164.8 685.7,172.3 686.4,165.3 687.0,173.1 687.7,170.0 688.4,171.4 689.0,163.2 689.7,163.9 690.4,168.7 691.0,162.9 691.7,166.6 692.3,173.0 693.0,168.0 693.7,172.2 694.3,166.6 695.0,165.7 695.7,169.1 696.3,164.3 697.0,163.5 697.6,169.6 698.3,165.0 699.0,167.1 699.6,167.7 700.3,161.5 701.0,169.0 701.6,167.9 702.3,167.0 703.0,165.0 703.6,164.4 704.3,169.8 704.9,162.5 705.6,161.0 706.3,160.5 706.9,166.3 707.6,168.4 708.3,170.2 708.9,165.7 709.6,167.0 710.2,167.0 710.9,168.7 711.6,173.1 712.2,167.7 712.9,167.3 713.6,167.9 714.2,171.2 714.9,167.6 715.5,167.2 716.2,170.3 716.9,164.7 717.5,166.9 718.2,166.3 718.9,165.5 719.5,167.6 720.2,167.0 720.8,165.1 721.5,164.4 722.2,163.9 722.8,167.3 723.5,164.3 724.2,163.2 724.8,171.2 725.5,168.0 726.1,166.8 726.8,166.7 727.5,161.1 728.1,163.0 728.8,167.2 729.5,167.1 730.1,171.1 730.8,169.8 731.4,162.5 732.1,172.2 732.8,164.7 733.4,187.7 734.1,167.7" fill="none" stroke="#7570b3" stroke-width="1.25" stroke-linejoin="round" />
<polyline points="269.6,209.4 270.2,191.6 270.9,171.9 271.6,156.2 272.2,171.9 272.9,185.7 273.5,168.0 274.2,172.0 274.9,169.0 275.5,164.5 276.2,170.6 276.9,172.2 277.5,163.0 278.2,167.7 278.8,163.7 279.5,165.1 280.2,167.3 280.8,161.3 281.5,167.5 282.2,160.3 282.8,169.5 283.5,169.8 284.1,168.8 284.8,165.9 285.5,170.2 286.1,168.8 286.8,162.1 287.5,166.0 288.1,163.0 288.8,165.4 289.4,168.5 290.1,169.0 290.8,166.0 291.4,166.4 292.1,168.2 292.8,168.4 293.4,162.0 294.1,163.3 294.7,165.6 295.4,167.7 296.1,167.9 296.7,160.3 297.4,168.5 298.1,160.1 298.7,168.7 299.4,171.3 300.0,160.2 300.7,166.9 301.4,161.8 302.0,165.2 302.7,167.3 303.4,163.6 304.0,167.5 304.7,165.2 305.4,167.0 306.0,172.1 306.7,165.3 307.3,168.3 308.0,167.0 308.7,165.3 309.3,171.1 310.0,164.9 310.7,164.8 311.3,160.6 312.0,164.0 312.6,165.5 313.3,168.6 314.0,166.7 314.6,171.0 315.3,165.3 316.0,167.2 316.6,167.8 317.3,166.6 317.9,165.2 318.6,165.8 319.3,170.3 319.9,162.5 320.6,166.6 321.3,165.6 321.9,166.6 322.6,169.6 323.2,165.8 323.9,167.9 324.6,169.3 325.2,166.3 325.9,164.3 326.6,164.8 327.2,166.1 327.9,168.6 328.5,167.7 329.2,167.1 329.9,171.1 330.5,164.2 331.2,166.4 331.9,170.7 332.5,162.0 333.2,160.6 333.8,170.7 334.5,167.2 335.2,169.3 335.8,164.3 336.5,171.0 337.2,165.2 337.8,165.5 338.5,163.2 339.1,172.6 339.8,169.1 340.5,167.3 341.1,163.7 341.8,166.4 342.5,164.4 343.1,165.3 343.8,169.5 344.4,167.1 345.1,167.9 345.8,167.7 346.4,169.6 347.1,164.3 347.8,165.8 348.4,172.7 349.1,164.4 349.7,168.5 350.4,171.3 351.1,162.9 351.7,166.8 352.4,165.6 353.1,160.1 353.7,166.8 354.4,155.4 355.1,164.4 355.7,164.0 356.4,166.7 357.0,167.0 357.7,169.7 358.4,170.6 359.0,167.2 359.7,162.8 360.4,168.8 361.0,168.6 361.7,166.4 362.3,168.5 363.0,162.6 363.7,165.3 364.3,160.1 365.0,166.0 365.7,160.1 366.3,168.5 367.0,166.0 367.6,170.0 368.3,167.9 369.0,167.7 369.6,164.7 370.3,162.4 371.0,167.5 371.6,171.2 372.3,166.6 372.9,167.2 373.6,168.2 374.3,163.9 374.9,163.1 375.6,168.8 376.3,168.8 376.9,173.1 377.6,168.5 378.2,163.9 378.9,169.4 379.6,163.7 380.2,164.4 380.9,164.6 381.6,164.5 382.2,166.8 382.9,163.3 383.5,163.2 384.2,165.4 384.9,166.6 385.5,162.4 386.2,161.8 386.9,168.5 387.5,163.9 388.2,166.3 388.8,160.1 389.5,167.5 390.2,168.4 390.8,169.3 391.5,163.6 392.2,169.8 392.8,164.4 393.5,168.1 394.1,162.2 394.8,161.5 395.5,162.9 396.1,172.6 396.8,171.0 397.5,173.1 398.1,160.1 398.8,168.3 399.4,167.7 400.1,166.3 400.8,164.6 401.4,167.5 402.1,166.3 402.8,166.5 403.4,170.5 404.1,160.8 404.8,161.0 405.4,166.4 406.1,166.9 406.7,160.5 407.4,160.1 408.1,166.3 408.7,164.5 409.4,167.7 410.1,165.4 410.7,173.1 411.4,173.1 412.0,165.0 412.7,167.0 413.4,165.2 414.0,166.2 414.7,164.5 415.4,165.6 416.0,166.9 416.7,165.1 417.3,168.5 418.0,161.9 418.7,169.4 419.3,167.6 420.0,163.5 420.7,167.5 421.3,163.3 422.0,161.8 422.6,163.9 423.3,167.7 424.0,160.3 424.6,164.9 425.3,169.4 426.0,160.1 426.6,165.7 427.3,164.4 427.9,163.5 428.6,167.9 429.3,163.5 429.9,170.2 430.6,169.4 431.3,167.5 431.9,160.1 432.6,164.4 433.2,162.6 433.9,167.6 434.6,164.6 435.2,172.9 435.9,167.1 436.6,164.9 437.2,168.1 437.9,172.5 438.5,171.4 439.2,164.3 439.9,162.0 440.5,167.4 441.2,161.2 441.9,170.4 442.5,164.3 443.2,165.3 443.8,163.0 444.5,171.0 445.2,163.1 445.8,165.9 446.5,169.0 447.2,167.8 447.8,167.0 448.5,165.4 449.1,169.0 449.8,169.1 450.5,166.1 451.1,166.5 451.8,164.8 452.5,163.5 453.1,172.3 453.8,166.7 454.5,165.7 455.1,166.3 455.8,169.8 456.4,164.2 457.1,161.0 457.8,167.0 458.4,169.0 459.1,164.0 459.8,166.4 460.4,166.1 461.1,165.8 461.7,168.0 462.4,166.6 463.1,168.8 463.7,172.8 464.4,163.2 465.1,165.6 465.7,166.8 466.4,162.3 467.0,167.0 467.7,163.0 468.4,163.9 469.0,167.5 469.7,170.5 470.4,165.0 471.0,165.8 471.7,163.3 472.3,171.5 473.0,166.9 473.7,165.8 474.3,165.5 475.0,166.2 475.7,165.6 476.3,173.1 477.0,167.6 477.6,168.7 478.3,171.5 479.0,166.2 479.6,167.8 480.3,170.2 481.0,171.0 481.6,165.6 482.3,173.1 482.9,166.9 483.6,170.1 484.3,166.1 484.9,160.5 485.6,163.3 486.3,166.8 486.9,161.8 487.6,160.6 488.2,163.4 488.9,160.7 489.6,165.9 490.2,164.5 490.9,166.8 491.6,167.7 492.2,166.5 492.9,169.0 493.5,166.8 494.2,160.1 494.9,164.3 495.5,167.1 496.2,161.0 496.9,161.9 497.5,169.9 498.2,168.7 498.8,161.0 499.5,166.2 500.2,165.9 500.8,168.2 501.5,170.0 502.2,162.9 502.8,169.1 503.5,164.8 504.2,160.6 504.8,164.8 505.5,167.2 506.1,164.5 506.8,164.7 507.5,168.0 508.1,165.7 508.8,170.4 509.5,172.1 510.1,168.3 510.8,172.1 511.4,168.6 512.1,166.9 512.8,166.0 513.4,160.6 514.1,169.5 514.8,168.0 515.4,168.0 516.1,169.8 516.7,160.1 517.4,169.1 518.1,167.3 518.7,167.2 519.4,160.1 520.1,167.6 520.7,169.1 521.4,162.6 522.0,168.7 522.7,173.1 523.4,163.0 524.0,163.6 524.7,171.2 525.4,170.6 526.0,166.7 526.7,169.7 527.3,171.5 528.0,170.5 528.7,160.9 529.3,163.2 530.0,170.1 530.7,167.2 531.3,166.4 532.0,167.8 532.6,166.8 533.3,161.1 534.0,168.8 534.6,169.2 535.3,166.9 536.0,168.9 536.6,168.2 537.3,168.2 537.9,170.0 538.6,162.9 539.3,168.9 539.9,162.5 540.6,169.5 541.3,169.7 541.9,166.0 542.6,167.6 543.2,164.0 543.9,164.6 544.6,160.1 545.2,173.1 545.9,170.2 546.6,166.9 547.2,167.5 547.9,167.0 548.5,160.1 549.2,173.1 549.9,164.6 550.5,167.5 551.2,166.8 551.9,163.3 552.5,167.0 553.2,164.2 553.9,162.6 554.5,162.9 555.2,172.8 555.8,168.9 556.5,171.0 557.2,169.3 557.8,167.4 558.5,160.1 559.2,168.9 559.8,167.8 560.5,167.4 561.1,162.0 561.8,168.6 562.5,165.4 563.1,164.2 563.8,165.0 564.5,173.1 565.1,171.1 565.8,164.7 566.4,172.6 567.1,167.6 567.8,171.8 568.4,165.6 569.1,167.1 569.8,172.0 570.4,167.8 571.1,170.4 571.7,168.8 572.4,162.9 573.1,166.1 573.7,165.9 574.4,162.0 575.1,166.6 575.7,162.7 576.4,165.7 577.0,166.1 577.7,168.2 578.4,169.7 579.0,170.3 579.7,170.0 580.4,165.3 581.0,165.7 581.7,169.7 582.3,163.0 583.0,169.0 583.7,168.2 584.3,171.4 585.0,169.7 585.7,164.2 586.3,165.6 587.0,169.0 587.6,163.0 588.3,167.2 589.0,166.7 589.6,163.6 590.3,165.5 591.0,168.0 591.6,170.4 592.3,162.8 592.9,173.1 593.6,169.0 594.3,172.6 594.9,168.8 595.6,164.2 596.3,168.0 596.9,168.3 597.6,167.1 598.2,160.7 598.9,162.5 599.6,166.2 600.2,169.0 600.9,168.2 601.6,165.9 602.2,167.7 602.9,167.3 603.6,170.3 604.2,171.3 604.9,170.5 605.5,166.2 606.2,169.9 606.9,160.1 607.5,165.1 608.2,164.8 608.9,163.7 609.5,170.2 610.2,170.6 610.8,167.6 611.5,164.9 612.2,165.0 612.8,161.5 613.5,162.3 614.2,163.4 614.8,163.1 615.5,165.8 616.1,163.9 616.8,167.5 617.5,167.9 618.1,163.6 618.8,171.8 619.5,162.1 620.1,160.6 620.8,168.0 621.4,164.1 622.1,165.9 622.8,169.5 623.4,165.2 624.1,164.7 624.8,163.2 625.4,167.4 626.1,165.9 626.7,168.3 627.4,163.1 628.1,166.7 628.7,163.6 629.4,168.5 630.1,166.0 630.7,169.2 631.4,168.7 632.0,162.8 632.7,166.9 633.4,166.6 634.0,164.0 634.7,168.9 635.4,160.2 636.0,168.8 636.7,167.6 637.3,160.1 638.0,171.8 638.7,160.7 639.3,165.1 640.0,164.7 640.7,169.7 641.3,165.8 642.0,170.4 642.6,163.2 643.3,167.2 644.0,168.5 644.6,167.9 645.3,166.9 646.0,163.3 646.6,165.2 647.3,168.9 647.9,169.2 648.6,169.7 649.3,163.9 649.9,164.9 650.6,170.0 651.3,171.6 651.9,166.7 652.6,168.3 653.3,164.8 653.9,166.9 654.6,165.3 655.2,163.9 655.9,163.2 656.6,167.2 657.2,164.2 657.9,168.3 658.6,170.4 659.2,165.8 659.9,162.7 660.5,162.0 661.2,166.7 661.9,172.0 662.5,165.5 663.2,167.2 663.9,164.6 664.5,163.2 665.2,168.0 665.8,168.8 666.5,167.8 667.2,168.7 667.8,169.7 668.5,165.9 669.2,168.9 669.8,167.5 670.5,167.7 671.1,168.6 671.8,164.7 672.5,168.1 673.1,166.9 673.8,164.1 674.5,167.1 675.1,171.2 675.8,168.1 676.4,168.2 677.1,164.7 677.8,161.4 678.4,166.0 679.1,167.1 679.8,162.1 680.4,168.9 681.1,165.7 681.7,165.2 682.4,166.8 683.1,167.3 683.7,166.1 684.4,161.9 685.1,164.9 685.7,168.6 686.4,165.8 687.0,163.7 687.7,161.1 688.4,164.2 689.0,166.1 689.7,162.3 690.4,163.9 691.0,166.2 691.7,168.8 692.3,166.4 693.0,163.7 693.7,170.0 694.3,171.7 695.0,165.1 695.7,171.5 696.3,170.8 697.0,167.4 697.6,167.5 698.3,166.5 699.0,166.2 699.6,165.1 700.3,167.1 701.0,169.3 701.6,173.1 702.3,162.9 703.0,164.3 703.6,164.8 704.3,166.8 704.9,169.5 705.6,165.3 706.3,167.0 706.9,171.1 707.6,163.6 708.3,171.3 708.9,168.2 709.6,161.3 710.2,169.4 710.9,166.3 711.6,163.5 712.2,166.8 712.9,171.3 713.6,168.4 714.2,167.0 714.9,171.6 715.5,162.4 716.2,165.9 716.9,164.6 717.5,166.0 718.2,165.7 718.9,168.0 719.5,171.5 720.2,164.8 720.8,166.8 721.5,162.0 722.2,170.5 722.8,166.4 723.5,160.1 724.2,171.1 724.8,170.6 725.5,166.2 726.1,161.6 726.8,170.7 727.5,166.7 728.1,167.5 728.8,168.7 729.5,167.7 730.1,163.1 730.8,166.5 731.4,171.1 732.1,155.4 732.8,166.7 733.4,171.9 734.1,169.1" fill="none" stroke="#e7298a" stroke-width="1.25" stroke-linejoin="round" />
<polyline points="269.6,177.8 270.2,175.9 270.9,173.9 271.6,171.9 272.2,170.0 272.9,168.0 273.5,165.6 274.2,164.8 274.9,165.2 275.5,166.0 276.2,166.4 276.9,166.5 277.5,166.9 278.2,167.0 278.8,166.4 279.5,166.7 280.2,167.0 280.8,166.5 281.5,167.0 282.2,166.8 282.8,166.8 283.5,167.1 284.1,166.5 284.8,165.8 285.5,166.5 286.1,166.5 286.8,166.7 287.5,166.6 288.1,166.6 288.8,166.5 289.4,166.7 290.1,166.6 290.8,166.7 291.4,166.5 292.1,166.4 292.8,166.4 293.4,166.7 294.1,166.7 294.7,166.5 295.4,166.7 296.1,166.7 296.7,166.5 297.4,166.5 298.1,166.3 298.7,166.9 299.4,166.3 300.0,166.7 300.7,166.5 301.4,166.9 302.0,166.6 302.7,166.8 303.4,166.2 304.0,166.8 304.7,166.3 305.4,166.8 306.0,166.9 306.7,166.5 307.3,166.4 308.0,166.6 308.7,166.5 309.3,166.6 310.0,166.6 310.7,166.3 311.3,166.6 312.0,166.4 312.6,166.9 313.3,166.7 314.0,166.4 314.6,166.7 315.3,167.1 316.0,166.4 316.6,166.5 317.3,166.7 317.9,166.6 318.6,166.7 319.3,166.5 319.9,166.3 320.6,166.5 321.3,166.6 321.9,166.7 322.6,166.6 323.2,166.7 323.9,166.4 324.6,166.9 325.2,166.7 325.9,166.5 326.6,166.5 327.2,166.5 327.9,166.7 328.5,166.6 329.2,166.9 329.9,167.0 330.5,166.9 331.2,166.5 331.9,166.3 332.5,166.7 333.2,166.7 333.8,166.7 334.5,166.2 335.2,166.5 335.8,166.6 336.5,166.7 337.2,166.5 337.8,166.3 338.5,166.5 339.1,166.8 339.8,166.3 340.5,166.6 341.1,166.2 341.8,166.8 342.5,166.6 343.1,166.5 343.8,167.0 344.4,166.6 345.1,166.4 345.8,166.6 346.4,166.5 347.1,166.5 347.8,166.8 348.4,166.4 349.1,166.8 349.7,166.7 350.4,166.8 351.1,166.4 351.7,166.7 352.4,166.7 353.1,167.1 353.7,166.7 354.4,166.4 355.1,167.1 355.7,166.5 356.4,166.6 357.0,167.0 357.7,166.7 358.4,166.4 359.0,166.6 359.7,166.5 360.4,166.3 361.0,166.7 361.7,166.4 362.3,166.9 363.0,166.8 363.7,166.3 364.3,166.3 365.0,166.4 365.7,166.9 366.3,166.6 367.0,166.8 367.6,166.1 368.3,166.9 369.0,166.9 369.6,166.7 370.3,166.5 371.0,166.7 371.6,166.7 372.3,166.5 372.9,166.6 373.6,167.0 374.3,166.9 374.9,166.2 375.6,166.6 376.3,166.2 376.9,166.2 377.6,166.3 378.2,166.6 378.9,166.2 379.6,166.7 380.2,166.1 380.9,166.4 381.6,166.4 382.2,166.7 382.9,166.7 383.5,166.6 384.2,166.7 384.9,166.8 385.5,166.8 386.2,166.5 386.9,166.3 387.5,166.1 388.2,166.4 388.8,166.6 389.5,166.4 390.2,166.2 390.8,166.5 391.5,166.3 392.2,166.5 392.8,166.5 393.5,166.7 394.1,166.4 394.8,166.8 395.5,166.8 396.1,166.5 396.8,166.3 397.5,166.4 398.1,166.4 398.8,166.6 399.4,166.6 400.1,166.3 400.8,166.1 401.4,167.2 402.1,166.3 402.8,166.5 403.4,166.6 404.1,166.7 404.8,166.7 405.4,166.9 406.1,166.5 406.7,166.8 407.4,166.6 408.1,166.9 408.7,166.3 409.4,166.4 410.1,166.8 410.7,166.5 411.4,166.7 412.0,166.8 412.7,166.6 413.4,166.4 414.0,166.2 414.7,166.5 415.4,166.3 416.0,166.4 416.7,166.4 417.3,166.3 418.0,166.9 418.7,166.7 419.3,166.2 420.0,166.9 420.7,166.8 421.3,166.1 422.0,166.8 422.6,166.6 423.3,166.5 424.0,166.7 424.6,166.4 425.3,166.4 426.0,166.7 426.6,166.2 427.3,166.8 427.9,166.7 428.6,166.6 429.3,166.5 429.9,166.8 430.6,166.5 431.3,167.1 431.9,166.7 432.6,166.8 433.2,166.8 433.9,166.6 434.6,166.5 435.2,166.8 435.9,166.6 436.6,167.0 437.2,166.7 437.9,166.4 438.5,166.8 439.2,166.7 439.9,166.6 440.5,166.4 441.2,166.5 441.9,166.6 442.5,166.8 443.2,166.6 443.8,167.3 444.5,166.5 445.2,166.8 445.8,166.5 446.5,166.6 447.2,166.3 447.8,166.8 448.5,167.1 449.1,166.6 449.8,166.7 450.5,166.6 451.1,166.3 451.8,166.8 452.5,166.5 453.1,166.4 453.8,166.4 454.5,167.1 455.1,166.6 455.8,166.8 456.4,166.7 457.1,166.8 457.8,166.7 458.4,166.4 459.1,166.2 459.8,166.5 460.4,166.9 461.1,166.3 461.7,166.9 462.4,166.7 463.1,166.3 463.7,166.7 464.4,166.4 465.1,166.7 465.7,166.9 466.4,166.6 467.0,166.7 467.7,166.2 468.4,166.2 469.0,166.2 469.7,166.8 470.4,166.2 471.0,166.5 471.7,166.5 472.3,166.6 473.0,166.7 473.7,166.6 474.3,166.4 475.0,166.2 475.7,166.5 476.3,166.6 477.0,166.7 477.6,166.7 478.3,166.2 479.0,166.4 479.6,166.6 480.3,167.0 481.0,167.0 481.6,166.5 482.3,166.5 482.9,166.3 483.6,166.6 484.3,166.8 484.9,167.0 485.6,166.8 486.3,167.1 486.9,166.5 487.6,166.5 488.2,166.3 488.9,167.0 489.6,166.9 490.2,166.5 490.9,166.5 491.6,167.1 492.2,166.8 492.9,166.6 493.5,166.7 494.2,166.5 494.9,166.6 495.5,166.7 496.2,166.5 496.9,166.6 497.5,166.3 498.2,167.0 498.8,166.7 499.5,166.8 500.2,166.7 500.8,166.5 501.5,166.5 502.2,167.1 502.8,166.3 503.5,166.5 504.2,166.5 504.8,166.6 505.5,166.4 506.1,166.5 506.8,167.0 507.5,166.8 508.1,166.7 508.8,166.7 509.5,166.7 510.1,166.5 510.8,166.9 511.4,166.8 512.1,166.8 512.8,166.6 513.4,166.5 514.1,166.8 514.8,166.5 515.4,166.7 516.1,166.3 516.7,167.1 517.4,166.6 518.1,166.3 518.7,166.7 519.4,166.9 520.1,166.8 520.7,166.5 521.4,166.7 522.0,166.4 522.7,166.6 523.4,166.7 524.0,166.7 524.7,166.5 525.4,166.4 526.0,166.8 526.7,166.9 527.3,166.9 528.0,166.5 528.7,166.2 529.3,166.7 530.0,166.4 530.7,166.7 531.3,166.4 532.0,167.0 532.6,166.5 533.3,166.9 534.0,166.8 534.6,166.5 535.3,166.7 536.0,166.6 536.6,166.5 537.3,166.6 537.9,166.3 538.6,166.4 539.3,166.8 539.9,166.6 540.6,166.7 541.3,166.7 541.9,166.2 542.6,166.8 543.2,166.3 543.9,166.2 544.6,166.0 545.2,166.6 545.9,166.5 546.6,166.5 547.2,166.7 547.9,166.2 548.5,166.1 549.2,167.1 549.9,166.7 550.5,166.3 551.2,166.8 551.9,166.8 552.5,166.6 553.2,166.6 553.9,166.6 554.5,166.6 555.2,166.2 555.8,167.2 556.5,166.7 557.2,166.9 557.8,166.6 558.5,166.7 559.2,166.5 559.8,166.6 560.5,166.1 561.1,166.9 561.8,166.7 562.5,166.4 563.1,166.7 563.8,166.6 564.5,167.0 565.1,166.4 565.8,166.6 566.4,166.5 567.1,166.8 567.8,166.7 568.4,166.8 569.1,166.2 569.8,167.0 570.4,166.5 571.1,166.5 571.7,166.3 572.4,166.5 573.1,166.9 573.7,166.5 574.4,167.0 575.1,166.4 575.7,166.6 576.4,166.8 577.0,166.7 577.7,166.5 578.4,167.0 579.0,166.2 579.7,166.8 580.4,166.2 581.0,166.6 581.7,166.2 582.3,166.9 583.0,166.4 583.7,166.6 584.3,166.8 585.0,166.4 585.7,166.7 586.3,166.8 587.0,166.7 587.6,166.8 588.3,166.7 589.0,166.6 589.6,166.4 590.3,166.6 591.0,166.8 591.6,166.4 592.3,166.7 592.9,166.8 593.6,166.9 594.3,166.2 594.9,166.6 595.6,166.2 596.3,166.9 596.9,166.9 597.6,166.2 598.2,166.7 598.9,166.7 599.6,166.7 600.2,166.9 600.9,166.4 601.6,166.9 602.2,166.4 602.9,166.9 603.6,166.0 604.2,166.4 604.9,166.3 605.5,167.0 606.2,166.5 606.9,166.8 607.5,166.8 608.2,166.8 608.9,166.4 609.5,166.6 610.2,166.7 610.8,166.8 611.5,166.8 612.2,166.7 612.8,166.7 613.5,166.9 614.2,166.8 614.8,167.2 615.5,166.6 616.1,166.5 616.8,166.7 617.5,166.3 618.1,166.8 618.8,166.6 619.5,166.3 620.1,166.6 620.8,166.8 621.4,166.5 622.1,166.7 622.8,166.3 623.4,166.4 624.1,166.7 624.8,166.5 625.4,166.2 626.1,166.3 626.7,166.4 627.4,166.7 628.1,166.8 628.7,166.8 629.4,166.4 630.1,166.9 630.7,166.5 631.4,166.2 632.0,167.0 632.7,166.5 633.4,166.9 634.0,166.6 634.7,166.5 635.4,166.8 636.0,166.9 636.7,166.7 637.3,166.6 638.0,166.7 638.7,166.8 639.3,166.4 640.0,166.9 640.7,167.0 641.3,166.6 642.0,166.1 642.6,166.7 643.3,166.6 644.0,166.9 644.6,166.8 645.3,166.9 646.0,166.5 646.6,166.8 647.3,166.8 647.9,166.4 648.6,167.0 649.3,166.4 649.9,166.7 650.6,166.8 651.3,166.6 651.9,166.7 652.6,166.5 653.3,166.7 653.9,166.2 654.6,166.4 655.2,166.3 655.9,166.9 656.6,166.7 657.2,166.3 657.9,166.5 658.6,166.6 659.2,166.6 659.9,166.4 660.5,167.1 661.2,166.8 661.9,166.9 662.5,166.3 663.2,166.9 663.9,166.7 664.5,166.3 665.2,166.7 665.8,166.5 666.5,166.6 667.2,166.4 667.8,166.1 668.5,166.9 669.2,166.6 669.8,166.2 670.5,166.0 671.1,166.7 671.8,166.3 672.5,166.4 673.1,166.5 673.8,166.9 674.5,167.0 675.1,166.6 675.8,166.6 676.4,166.6 677.1,166.9 677.8,166.3 678.4,166.7 679.1,166.0 679.8,166.7 680.4,166.5 681.1,166.4 681.7,166.7 682.4,166.8 683.1,166.7 683.7,166.6 684.4,166.7 685.1,166.1 685.7,166.7 686.4,166.4 687.0,166.4 687.7,166.6 688.4,166.9 689.0,166.5 689.7,166.4 690.4,166.6 691.0,166.6 691.7,167.1 692.3,166.9 693.0,166.6 693.7,166.6 694.3,166.4 695.0,166.7 695.7,166.6 696.3,166.8 697.0,166.5 697.6,166.4 698.3,166.6 699.0,166.4 699.6,166.7 700.3,166.7 701.0,166.7 701.6,166.1 702.3,167.0 703.0,166.6 703.6,166.7 704.3,166.6 704.9,167.0 705.6,166.4 706.3,166.4 706.9,166.7 707.6,166.7 708.3,166.6 708.9,166.4 709.6,167.0 710.2,166.3 710.9,166.7 711.6,166.4 712.2,166.8 712.9,166.1 713.6,166.5 714.2,166.2 714.9,166.7 715.5,166.7 716.2,166.3 716.9,166.4 717.5,166.5 718.2,166.3 718.9,166.5 719.5,166.7 720.2,167.0 720.8,167.1 721.5,166.4 722.2,166.5 722.8,166.8 723.5,166.5 724.2,166.6 724.8,166.6 725.5,166.4 726.1,167.0 726.8,166.5 727.5,166.5 728.1,166.6 728.8,166.5 729.5,166.9 730.1,166.6 730.8,166.4 731.4,166.4 732.1,166.8 732.8,166.4 733.4,166.5 734.1,168.0" fill="none" stroke="#000" stroke-width="2.2" stroke-linejoin="round" />
</g>
<rect x="253" y="228" width="497" height="90" fill="#e5e5e5"/>
<line x1="253.0" y1="228" x2="253.0" y2="318" stroke="#fff" stroke-width="1.1"/>
<line x1="319.3" y1="228" x2="319.3" y2="318" stroke="#fff" stroke-width="1.1"/>
<line x1="385.5" y1="228" x2="385.5" y2="318" stroke="#fff" stroke-width="1.1"/>
<line x1="451.8" y1="228" x2="451.8" y2="318" stroke="#fff" stroke-width="1.1"/>
<line x1="518.1" y1="228" x2="518.1" y2="318" stroke="#fff" stroke-width="1.1"/>
<line x1="584.3" y1="228" x2="584.3" y2="318" stroke="#fff" stroke-width="1.1"/>
<line x1="650.6" y1="228" x2="650.6" y2="318" stroke="#fff" stroke-width="1.1"/>
<line x1="716.9" y1="228" x2="716.9" y2="318" stroke="#fff" stroke-width="1.1"/>
<line x1="253" y1="246.7" x2="750" y2="246.7" stroke="#fff" stroke-width="1.1"/>
<line x1="253" y1="287.8" x2="750" y2="287.8" stroke="#fff" stroke-width="1.1"/>
<clipPath id="c2"><rect x="253" y="228" width="497" height="90"/></clipPath>
<g clip-path="url(#c2)">
<polyline points="269.6,275.4 270.2,279.5 270.9,263.1 271.6,316.5 272.2,250.8 272.9,232.3 273.5,279.5 274.2,284.4 274.9,270.6 275.5,265.3 276.2,268.6 276.9,268.4 277.5,279.6 278.2,271.8 278.8,283.6 279.5,261.4 280.2,263.0 280.8,281.2 281.5,276.7 282.2,282.6 282.8,272.3 283.5,277.0 284.1,282.2 284.8,277.2 285.5,269.4 286.1,275.9 286.8,268.9 287.5,275.1 288.1,273.2 288.8,282.9 289.4,267.4 290.1,282.0 290.8,276.5 291.4,269.9 292.1,270.4 292.8,281.4 293.4,304.2 294.1,260.3 294.7,271.5 295.4,288.2 296.1,267.0 296.7,272.7 297.4,269.6 298.1,271.0 298.7,265.7 299.4,266.7 300.0,274.3 300.7,282.6 301.4,274.5 302.0,268.4 302.7,287.0 303.4,272.8 304.0,286.6 304.7,265.9 305.4,260.7 306.0,267.6 306.7,276.8 307.3,268.2 308.0,264.3 308.7,261.9 309.3,263.7 310.0,266.0 310.7,280.7 311.3,274.5 312.0,270.4 312.6,273.4 313.3,287.6 314.0,275.0 314.6,278.8 315.3,272.3 316.0,271.3 316.6,283.9 317.3,279.1 317.9,272.7 318.6,281.2 319.3,274.1 319.9,279.8 320.6,278.8 321.3,267.6 321.9,274.8 322.6,277.8 323.2,263.0 323.9,276.1 324.6,274.1 325.2,273.8 325.9,252.5 326.6,269.4 327.2,267.8 327.9,299.0 328.5,267.9 329.2,265.9 329.9,282.2 330.5,270.8 331.2,262.2 331.9,261.0 332.5,272.1 333.2,257.5 333.8,278.6 334.5,266.4 335.2,270.0 335.8,281.2 336.5,266.6 337.2,282.8 337.8,273.3 338.5,274.4 339.1,282.2 339.8,265.5 340.5,276.9 341.1,282.5 341.8,271.9 342.5,273.8 343.1,281.4 343.8,277.6 344.4,267.4 345.1,267.9 345.8,284.9 346.4,266.8 347.1,266.8 347.8,265.6 348.4,277.0 349.1,279.1 349.7,274.3 350.4,275.9 351.1,275.4 351.7,277.9 352.4,275.7 353.1,277.1 353.7,273.4 354.4,272.5 355.1,275.5 355.7,277.5 356.4,262.3 357.0,267.1 357.7,270.2 358.4,279.8 359.0,269.2 359.7,274.8 360.4,269.4 361.0,272.0 361.7,279.6 362.3,273.5 363.0,280.8 363.7,266.0 364.3,265.5 365.0,263.9 365.7,292.1 366.3,280.3 367.0,279.5 367.6,285.4 368.3,272.9 369.0,269.2 369.6,266.2 370.3,267.4 371.0,273.7 371.6,262.9 372.3,272.1 372.9,293.8 373.6,276.2 374.3,279.3 374.9,271.6 375.6,277.1 376.3,276.4 376.9,264.4 377.6,279.5 378.2,270.6 378.9,272.5 379.6,269.7 380.2,275.1 380.9,274.3 381.6,278.5 382.2,283.7 382.9,279.7 383.5,291.4 384.2,265.7 384.9,276.2 385.5,264.4 386.2,275.4 386.9,280.9 387.5,273.1 388.2,273.0 388.8,265.0 389.5,288.8 390.2,277.4 390.8,271.6 391.5,281.9 392.2,273.6 392.8,276.5 393.5,264.3 394.1,265.5 394.8,289.0 395.5,285.3 396.1,280.0 396.8,274.9 397.5,275.5 398.1,278.0 398.8,270.1 399.4,268.2 400.1,273.7 400.8,258.2 401.4,274.1 402.1,280.2 402.8,268.5 403.4,268.4 404.1,280.9 404.8,264.0 405.4,274.7 406.1,268.5 406.7,274.3 407.4,275.6 408.1,269.3 408.7,281.2 409.4,276.1 410.1,282.8 410.7,296.8 411.4,275.9 412.0,276.6 412.7,278.0 413.4,269.7 414.0,272.4 414.7,275.9 415.4,277.6 416.0,261.6 416.7,263.7 417.3,282.2 418.0,265.7 418.7,270.5 419.3,272.1 420.0,271.2 420.7,283.9 421.3,256.8 422.0,259.7 422.6,273.9 423.3,274.1 424.0,273.2 424.6,279.0 425.3,248.8 426.0,274.5 426.6,283.9 427.3,277.8 427.9,278.9 428.6,278.6 429.3,276.8 429.9,269.9 430.6,277.4 431.3,285.9 431.9,248.8 432.6,278.6 433.2,268.5 433.9,300.0 434.6,270.6 435.2,280.4 435.9,273.8 436.6,277.1 437.2,274.9 437.9,271.1 438.5,277.2 439.2,268.6 439.9,284.4 440.5,282.0 441.2,271.4 441.9,270.7 442.5,266.9 443.2,263.0 443.8,271.2 444.5,269.0 445.2,272.6 445.8,273.3 446.5,275.0 447.2,273.5 447.8,278.2 448.5,275.4 449.1,268.7 449.8,270.8 450.5,266.2 451.1,277.6 451.8,276.8 452.5,271.2 453.1,280.3 453.8,280.6 454.5,269.9 455.1,276.4 455.8,268.2 456.4,273.7 457.1,277.4 457.8,281.7 458.4,266.0 459.1,275.0 459.8,280.7 460.4,285.0 461.1,283.3 461.7,277.4 462.4,265.9 463.1,281.0 463.7,273.8 464.4,273.1 465.1,298.0 465.7,283.7 466.4,269.0 467.0,289.2 467.7,266.9 468.4,274.7 469.0,286.7 469.7,261.7 470.4,275.8 471.0,263.7 471.7,273.4 472.3,280.2 473.0,267.0 473.7,262.2 474.3,265.9 475.0,283.3 475.7,270.5 476.3,283.2 477.0,279.1 477.6,265.4 478.3,285.0 479.0,257.3 479.6,285.9 480.3,284.1 481.0,269.6 481.6,281.7 482.3,276.0 482.9,281.6 483.6,269.8 484.3,273.4 484.9,275.6 485.6,280.7 486.3,285.6 486.9,275.1 487.6,290.5 488.2,279.6 488.9,270.5 489.6,270.1 490.2,277.9 490.9,293.3 491.6,271.1 492.2,268.7 492.9,274.6 493.5,265.9 494.2,274.3 494.9,286.9 495.5,276.6 496.2,278.4 496.9,263.8 497.5,267.3 498.2,274.1 498.8,270.9 499.5,268.7 500.2,280.0 500.8,276.2 501.5,275.6 502.2,277.9 502.8,277.3 503.5,273.3 504.2,284.1 504.8,283.1 505.5,269.4 506.1,264.1 506.8,261.6 507.5,287.5 508.1,272.3 508.8,280.9 509.5,278.8 510.1,276.6 510.8,272.2 511.4,271.0 512.1,292.2 512.8,279.3 513.4,267.3 514.1,274.1 514.8,274.3 515.4,282.0 516.1,310.3 516.7,267.9 517.4,262.6 518.1,282.9 518.7,271.4 519.4,277.1 520.1,271.0 520.7,276.8 521.4,283.1 522.0,279.7 522.7,279.8 523.4,264.8 524.0,280.5 524.7,271.2 525.4,281.2 526.0,279.9 526.7,273.6 527.3,279.2 528.0,261.2 528.7,265.8 529.3,283.2 530.0,271.5 530.7,263.7 531.3,279.6 532.0,274.8 532.6,264.7 533.3,281.1 534.0,264.1 534.6,275.8 535.3,273.9 536.0,282.6 536.6,275.7 537.3,278.3 537.9,262.7 538.6,270.6 539.3,274.4 539.9,275.3 540.6,270.3 541.3,286.6 541.9,282.4 542.6,281.8 543.2,280.9 543.9,286.9 544.6,271.6 545.2,275.2 545.9,266.3 546.6,276.1 547.2,277.9 547.9,272.1 548.5,272.2 549.2,277.3 549.9,271.2 550.5,266.3 551.2,278.5 551.9,266.1 552.5,276.6 553.2,294.0 553.9,275.6 554.5,278.0 555.2,273.1 555.8,283.2 556.5,286.6 557.2,275.6 557.8,277.0 558.5,283.2 559.2,262.4 559.8,272.4 560.5,280.4 561.1,271.6 561.8,271.4 562.5,280.0 563.1,277.0 563.8,288.4 564.5,273.7 565.1,261.9 565.8,267.1 566.4,267.9 567.1,279.4 567.8,271.4 568.4,269.0 569.1,273.2 569.8,276.7 570.4,277.5 571.1,268.6 571.7,270.8 572.4,278.6 573.1,276.1 573.7,287.1 574.4,283.6 575.1,271.2 575.7,278.5 576.4,281.4 577.0,273.3 577.7,266.3 578.4,281.2 579.0,277.6 579.7,277.1 580.4,286.1 581.0,268.0 581.7,273.4 582.3,285.3 583.0,269.9 583.7,271.2 584.3,276.6 585.0,280.6 585.7,278.4 586.3,286.9 587.0,278.0 587.6,278.5 588.3,281.7 589.0,277.6 589.6,286.4 590.3,267.3 591.0,276.4 591.6,283.6 592.3,269.9 592.9,271.4 593.6,278.8 594.3,277.4 594.9,275.8 595.6,272.0 596.3,270.8 596.9,268.8 597.6,269.3 598.2,285.7 598.9,274.5 599.6,288.5 600.2,268.5 600.9,272.5 601.6,268.6 602.2,275.1 602.9,275.4 603.6,279.2 604.2,294.9 604.9,276.8 605.5,257.2 606.2,266.3 606.9,276.9 607.5,273.0 608.2,290.3 608.9,279.4 609.5,275.3 610.2,272.9 610.8,278.8 611.5,272.1 612.2,250.6 612.8,269.4 613.5,273.3 614.2,276.4 614.8,291.3 615.5,279.0 616.1,279.7 616.8,266.3 617.5,277.8 618.1,284.7 618.8,269.2 619.5,270.1 620.1,267.3 620.8,275.9 621.4,267.1 622.1,276.1 622.8,282.2 623.4,276.4 624.1,273.3 624.8,282.7 625.4,276.4 626.1,273.3 626.7,278.0 627.4,260.0 628.1,275.3 628.7,280.7 629.4,272.7 630.1,271.0 630.7,289.1 631.4,279.7 632.0,269.3 632.7,271.8 633.4,288.2 634.0,273.3 634.7,304.0 635.4,268.8 636.0,269.5 636.7,275.6 637.3,274.3 638.0,282.8 638.7,274.7 639.3,258.7 640.0,274.9 640.7,281.2 641.3,271.1 642.0,289.0 642.6,258.8 643.3,270.4 644.0,271.0 644.6,277.2 645.3,281.0 646.0,273.8 646.6,274.4 647.3,285.5 647.9,267.7 648.6,277.1 649.3,282.2 649.9,268.1 650.6,269.4 651.3,278.6 651.9,279.1 652.6,266.9 653.3,277.3 653.9,273.1 654.6,265.0 655.2,283.0 655.9,285.0 656.6,280.4 657.2,278.5 657.9,274.3 658.6,267.6 659.2,277.4 659.9,279.3 660.5,272.9 661.2,288.2 661.9,274.6 662.5,269.4 663.2,266.7 663.9,279.3 664.5,275.1 665.2,258.8 665.8,273.3 666.5,280.8 667.2,284.9 667.8,277.4 668.5,271.7 669.2,259.7 669.8,264.8 670.5,279.5 671.1,287.6 671.8,269.7 672.5,274.0 673.1,275.9 673.8,265.3 674.5,278.4 675.1,269.3 675.8,277.9 676.4,262.8 677.1,274.2 677.8,274.0 678.4,270.0 679.1,274.7 679.8,271.3 680.4,275.8 681.1,269.8 681.7,273.7 682.4,277.9 683.1,270.2 683.7,270.8 684.4,281.6 685.1,276.2 685.7,285.8 686.4,273.4 687.0,268.3 687.7,257.2 688.4,272.1 689.0,266.8 689.7,263.8 690.4,269.0 691.0,287.1 691.7,277.3 692.3,271.7 693.0,272.0 693.7,273.2 694.3,280.4 695.0,287.1 695.7,271.5 696.3,266.0 697.0,248.8 697.6,270.2 698.3,277.8 699.0,275.1 699.6,278.1 700.3,268.3 701.0,280.5 701.6,273.1 702.3,267.8 703.0,274.2 703.6,282.6 704.3,271.4 704.9,275.3 705.6,283.0 706.3,248.8 706.9,276.1 707.6,269.8 708.3,277.5 708.9,273.4 709.6,269.9 710.2,287.3 710.9,267.3 711.6,274.0 712.2,281.0 712.9,273.2 713.6,266.9 714.2,278.9 714.9,278.0 715.5,264.7 716.2,263.3 716.9,260.4 717.5,273.8 718.2,280.7 718.9,283.3 719.5,276.4 720.2,281.0 720.8,271.1 721.5,265.4 722.2,281.5 722.8,263.9 723.5,280.4 724.2,278.9 724.8,283.7 725.5,269.1 726.1,274.7 726.8,273.9 727.5,294.2 728.1,278.2 728.8,272.0 729.5,293.2 730.1,260.5 730.8,271.9 731.4,266.5 732.1,276.2 732.8,267.7 733.4,265.2 734.1,256.2" fill="none" stroke="#1b9e77" stroke-width="1.1" stroke-linejoin="round" />
<polyline points="269.6,279.5 270.2,254.9 270.9,228.2 271.6,287.8 272.2,318.5 272.9,263.1 273.5,275.4 274.2,266.6 274.9,282.5 275.5,280.6 276.2,274.9 276.9,287.0 277.5,265.0 278.2,275.3 278.8,276.6 279.5,271.3 280.2,283.6 280.8,275.1 281.5,286.1 282.2,275.4 282.8,273.4 283.5,263.1 284.1,274.2 284.8,264.8 285.5,274.3 286.1,285.4 286.8,268.9 287.5,273.7 288.1,278.2 288.8,267.7 289.4,281.5 290.1,276.9 290.8,269.3 291.4,268.3 292.1,278.8 292.8,272.1 293.4,273.7 294.1,269.9 294.7,275.8 295.4,289.0 296.1,268.7 296.7,263.7 297.4,280.1 298.1,275.7 298.7,268.5 299.4,275.8 300.0,281.8 300.7,274.4 301.4,275.6 302.0,280.3 302.7,275.3 303.4,283.9 304.0,285.1 304.7,282.1 305.4,275.5 306.0,274.2 306.7,278.4 307.3,266.7 308.0,270.1 308.7,273.9 309.3,266.3 310.0,263.8 310.7,269.3 311.3,278.1 312.0,268.2 312.6,275.1 313.3,271.2 314.0,274.9 314.6,272.2 315.3,271.7 316.0,286.8 316.6,263.1 317.3,273.7 317.9,260.2 318.6,273.6 319.3,279.7 319.9,268.3 320.6,273.4 321.3,267.9 321.9,277.1 322.6,277.2 323.2,278.8 323.9,276.5 324.6,271.1 325.2,282.9 325.9,272.8 326.6,266.5 327.2,280.8 327.9,267.6 328.5,279.6 329.2,276.8 329.9,273.2 330.5,269.4 331.2,268.1 331.9,278.9 332.5,269.5 333.2,278.5 333.8,282.3 334.5,281.0 335.2,287.8 335.8,274.0 336.5,287.1 337.2,273.0 337.8,255.8 338.5,280.8 339.1,288.9 339.8,271.8 340.5,281.6 341.1,274.6 341.8,274.4 342.5,272.8 343.1,258.4 343.8,272.1 344.4,272.5 345.1,274.9 345.8,279.3 346.4,278.6 347.1,281.6 347.8,268.2 348.4,275.2 349.1,269.5 349.7,271.8 350.4,258.5 351.1,274.7 351.7,294.8 352.4,278.2 353.1,265.9 353.7,275.3 354.4,273.6 355.1,283.4 355.7,270.0 356.4,262.2 357.0,264.4 357.7,281.3 358.4,267.6 359.0,270.5 359.7,285.2 360.4,282.4 361.0,265.0 361.7,275.9 362.3,282.2 363.0,271.2 363.7,271.4 364.3,275.9 365.0,270.3 365.7,276.3 366.3,265.1 367.0,268.3 367.6,274.2 368.3,271.2 369.0,267.5 369.6,274.5 370.3,270.1 371.0,274.6 371.6,276.1 372.3,287.2 372.9,282.6 373.6,281.0 374.3,273.6 374.9,255.7 375.6,280.7 376.3,277.2 376.9,283.1 377.6,276.9 378.2,275.8 378.9,269.4 379.6,283.9 380.2,270.7 380.9,272.5 381.6,276.3 382.2,283.0 382.9,281.7 383.5,275.7 384.2,270.3 384.9,275.0 385.5,279.6 386.2,272.3 386.9,281.6 387.5,268.8 388.2,253.7 388.8,278.3 389.5,267.0 390.2,281.0 390.8,273.6 391.5,270.5 392.2,265.7 392.8,273.9 393.5,264.7 394.1,283.0 394.8,275.6 395.5,274.2 396.1,273.5 396.8,275.0 397.5,261.1 398.1,276.8 398.8,267.0 399.4,269.6 400.1,259.6 400.8,275.6 401.4,269.0 402.1,287.2 402.8,296.6 403.4,271.1 404.1,266.6 404.8,263.1 405.4,281.3 406.1,275.2 406.7,265.2 407.4,281.7 408.1,279.4 408.7,269.6 409.4,268.9 410.1,264.3 410.7,265.8 411.4,272.2 412.0,281.1 412.7,278.2 413.4,273.7 414.0,271.0 414.7,273.3 415.4,268.0 416.0,278.9 416.7,276.6 417.3,282.7 418.0,259.4 418.7,274.7 419.3,266.7 420.0,264.6 420.7,271.0 421.3,274.8 422.0,277.0 422.6,275.3 423.3,285.7 424.0,277.2 424.6,268.1 425.3,271.4 426.0,267.6 426.6,267.8 427.3,268.5 427.9,272.6 428.6,272.1 429.3,267.0 429.9,276.0 430.6,283.0 431.3,267.6 431.9,293.9 432.6,265.9 433.2,278.1 433.9,285.2 434.6,274.7 435.2,278.0 435.9,280.3 436.6,262.7 437.2,271.6 437.9,281.8 438.5,284.8 439.2,277.2 439.9,269.5 440.5,271.6 441.2,265.4 441.9,271.3 442.5,270.2 443.2,286.9 443.8,264.5 444.5,277.4 445.2,267.0 445.8,284.4 446.5,279.9 447.2,265.2 447.8,282.2 448.5,300.1 449.1,276.3 449.8,261.3 450.5,270.8 451.1,264.4 451.8,273.7 452.5,285.4 453.1,259.2 453.8,277.5 454.5,273.1 455.1,273.7 455.8,284.6 456.4,268.5 457.1,276.2 457.8,270.3 458.4,284.0 459.1,289.6 459.8,279.1 460.4,275.1 461.1,280.4 461.7,278.3 462.4,276.3 463.1,270.2 463.7,273.9 464.4,275.0 465.1,279.6 465.7,282.2 466.4,280.3 467.0,271.3 467.7,277.3 468.4,263.6 469.0,268.2 469.7,283.5 470.4,270.8 471.0,265.2 471.7,278.5 472.3,265.3 473.0,291.2 473.7,262.8 474.3,270.1 475.0,275.6 475.7,285.7 476.3,274.8 477.0,279.3 477.6,271.4 478.3,280.2 479.0,270.6 479.6,277.4 480.3,269.9 481.0,268.2 481.6,272.7 482.3,270.5 482.9,266.2 483.6,280.7 484.3,269.7 484.9,272.2 485.6,262.6 486.3,275.2 486.9,267.0 487.6,285.9 488.2,265.1 488.9,270.9 489.6,271.2 490.2,267.6 490.9,282.8 491.6,275.5 492.2,273.3 492.9,276.1 493.5,277.6 494.2,267.2 494.9,273.7 495.5,275.6 496.2,273.6 496.9,264.6 497.5,260.8 498.2,266.3 498.8,270.4 499.5,283.4 500.2,277.9 500.8,280.5 501.5,280.6 502.2,265.5 502.8,278.2 503.5,264.3 504.2,273.2 504.8,274.9 505.5,275.4 506.1,284.0 506.8,276.8 507.5,268.0 508.1,269.1 508.8,272.8 509.5,269.1 510.1,272.8 510.8,271.1 511.4,257.0 512.1,272.9 512.8,286.1 513.4,288.8 514.1,279.1 514.8,272.4 515.4,267.0 516.1,274.1 516.7,273.0 517.4,273.8 518.1,280.8 518.7,274.2 519.4,271.6 520.1,276.7 520.7,279.8 521.4,270.2 522.0,266.2 522.7,273.4 523.4,290.4 524.0,279.5 524.7,276.9 525.4,270.9 526.0,277.3 526.7,287.4 527.3,267.2 528.0,265.2 528.7,273.5 529.3,281.8 530.0,282.7 530.7,269.6 531.3,279.6 532.0,274.4 532.6,275.5 533.3,273.2 534.0,271.9 534.6,281.5 535.3,278.8 536.0,273.0 536.6,285.4 537.3,283.8 537.9,260.8 538.6,284.1 539.3,267.0 539.9,285.7 540.6,267.5 541.3,286.8 541.9,255.6 542.6,273.1 543.2,268.8 543.9,279.6 544.6,272.5 545.2,272.7 545.9,273.2 546.6,278.3 547.2,264.9 547.9,287.1 548.5,285.2 549.2,284.7 549.9,264.4 550.5,280.6 551.2,279.5 551.9,279.5 552.5,276.6 553.2,276.2 553.9,277.8 554.5,285.1 555.2,271.5 555.8,274.4 556.5,263.8 557.2,286.3 557.8,274.9 558.5,284.5 559.2,273.8 559.8,270.2 560.5,262.6 561.1,271.6 561.8,268.7 562.5,270.1 563.1,262.9 563.8,266.3 564.5,273.9 565.1,284.5 565.8,262.8 566.4,273.7 567.1,279.9 567.8,310.3 568.4,286.8 569.1,272.5 569.8,275.5 570.4,272.1 571.1,265.7 571.7,278.6 572.4,272.3 573.1,278.1 573.7,280.4 574.4,290.0 575.1,279.8 575.7,266.7 576.4,278.0 577.0,272.2 577.7,273.5 578.4,260.0 579.0,263.9 579.7,278.8 580.4,277.3 581.0,266.2 581.7,272.5 582.3,273.4 583.0,265.9 583.7,270.1 584.3,273.0 585.0,252.7 585.7,271.2 586.3,283.5 587.0,271.7 587.6,272.1 588.3,262.1 589.0,271.7 589.6,278.5 590.3,271.4 591.0,282.7 591.6,276.6 592.3,271.5 592.9,280.1 593.6,288.3 594.3,281.5 594.9,279.9 595.6,270.2 596.3,277.5 596.9,274.8 597.6,269.5 598.2,273.8 598.9,278.8 599.6,270.4 600.2,272.7 600.9,264.2 601.6,270.3 602.2,276.7 602.9,280.6 603.6,273.0 604.2,269.4 604.9,263.6 605.5,278.4 606.2,283.8 606.9,287.5 607.5,281.7 608.2,276.0 608.9,276.6 609.5,276.9 610.2,275.1 610.8,272.4 611.5,286.6 612.2,274.5 612.8,276.0 613.5,276.1 614.2,277.9 614.8,288.1 615.5,271.6 616.1,278.3 616.8,275.8 617.5,272.8 618.1,274.7 618.8,272.1 619.5,272.0 620.1,281.5 620.8,290.6 621.4,269.2 622.1,280.4 622.8,288.3 623.4,282.7 624.1,273.8 624.8,275.5 625.4,273.1 626.1,281.6 626.7,272.7 627.4,261.1 628.1,278.9 628.7,290.5 629.4,270.6 630.1,272.1 630.7,270.4 631.4,280.7 632.0,272.2 632.7,268.9 633.4,278.4 634.0,274.7 634.7,271.5 635.4,269.8 636.0,276.7 636.7,273.7 637.3,261.1 638.0,260.9 638.7,282.4 639.3,259.8 640.0,277.7 640.7,267.6 641.3,283.7 642.0,276.4 642.6,279.6 643.3,269.4 644.0,273.7 644.6,272.1 645.3,272.4 646.0,273.7 646.6,268.7 647.3,274.3 647.9,275.8 648.6,279.6 649.3,281.5 649.9,278.9 650.6,272.6 651.3,268.1 651.9,276.1 652.6,261.3 653.3,266.5 653.9,274.9 654.6,272.8 655.2,275.4 655.9,288.0 656.6,269.5 657.2,273.7 657.9,286.9 658.6,269.1 659.2,279.1 659.9,276.9 660.5,287.2 661.2,275.5 661.9,250.0 662.5,278.2 663.2,275.3 663.9,288.5 664.5,271.6 665.2,275.7 665.8,275.6 666.5,270.7 667.2,268.1 667.8,275.9 668.5,269.0 669.2,262.6 669.8,283.0 670.5,274.7 671.1,286.7 671.8,273.0 672.5,265.8 673.1,276.4 673.8,283.4 674.5,279.2 675.1,272.6 675.8,285.9 676.4,285.3 677.1,272.2 677.8,284.9 678.4,274.9 679.1,282.9 679.8,286.6 680.4,269.8 681.1,267.6 681.7,280.9 682.4,259.3 683.1,274.3 683.7,271.6 684.4,274.0 685.1,282.9 685.7,268.0 686.4,274.2 687.0,271.6 687.7,274.1 688.4,277.9 689.0,258.6 689.7,272.0 690.4,276.7 691.0,270.4 691.7,283.5 692.3,272.5 693.0,256.0 693.7,279.8 694.3,271.6 695.0,283.3 695.7,274.8 696.3,267.2 697.0,282.1 697.6,281.6 698.3,266.8 699.0,273.1 699.6,270.3 700.3,271.3 701.0,284.1 701.6,287.0 702.3,288.3 703.0,271.5 703.6,285.0 704.3,287.5 704.9,279.0 705.6,276.1 706.3,275.5 706.9,287.9 707.6,265.8 708.3,281.7 708.9,274.1 709.6,275.4 710.2,282.1 710.9,272.3 711.6,272.7 712.2,267.1 712.9,261.5 713.6,259.9 714.2,268.3 714.9,270.2 715.5,277.5 716.2,285.6 716.9,261.5 717.5,279.0 718.2,276.8 718.9,278.3 719.5,272.0 720.2,277.8 720.8,258.1 721.5,268.7 722.2,278.5 722.8,272.3 723.5,264.9 724.2,283.3 724.8,273.3 725.5,278.6 726.1,274.4 726.8,278.3 727.5,273.5 728.1,271.6 728.8,270.4 729.5,285.3 730.1,269.8 730.8,274.6 731.4,279.3 732.1,275.2 732.8,263.3 733.4,275.8 734.1,280.9" fill="none" stroke="#d95f02" stroke-width="1.1" stroke-linejoin="round" />
<polyline points="269.6,275.4 270.2,267.2 270.9,287.8 271.6,242.6 272.2,271.3 272.9,296.0 273.5,275.4 274.2,278.1 274.9,273.8 275.5,269.1 276.2,259.2 276.9,274.7 277.5,263.3 278.2,284.1 278.8,273.2 279.5,272.3 280.2,290.0 280.8,281.4 281.5,279.5 282.2,270.9 282.8,277.9 283.5,277.4 284.1,279.2 284.8,271.2 285.5,274.8 286.1,270.9 286.8,276.0 287.5,269.6 288.1,279.3 288.8,274.5 289.4,274.2 290.1,271.6 290.8,274.5 291.4,271.8 292.1,283.5 292.8,267.1 293.4,289.0 294.1,310.3 294.7,267.9 295.4,284.9 296.1,274.8 296.7,272.8 297.4,268.1 298.1,274.5 298.7,272.9 299.4,281.4 300.0,271.0 300.7,288.3 301.4,285.3 302.0,267.0 302.7,282.1 303.4,264.8 304.0,259.9 304.7,270.0 305.4,277.3 306.0,277.0 306.7,282.1 307.3,268.5 308.0,281.4 308.7,272.3 309.3,281.2 310.0,269.8 310.7,276.5 311.3,274.4 312.0,278.6 312.6,266.5 313.3,276.4 314.0,274.7 314.6,290.9 315.3,281.4 316.0,282.3 316.6,274.1 317.3,280.8 317.9,262.0 318.6,272.7 319.3,272.0 319.9,276.1 320.6,295.8 321.3,264.9 321.9,274.6 322.6,288.0 323.2,281.4 323.9,274.0 324.6,265.2 325.2,271.5 325.9,271.3 326.6,271.6 327.2,280.1 327.9,278.5 328.5,273.8 329.2,283.3 329.9,273.6 330.5,269.2 331.2,290.4 331.9,275.5 332.5,275.8 333.2,280.8 333.8,261.7 334.5,283.6 335.2,273.1 335.8,269.2 336.5,256.6 337.2,276.5 337.8,271.4 338.5,274.8 339.1,270.4 339.8,280.2 340.5,279.4 341.1,275.1 341.8,269.5 342.5,283.1 343.1,276.3 343.8,278.4 344.4,271.9 345.1,268.2 345.8,284.5 346.4,296.5 347.1,276.5 347.8,281.2 348.4,264.1 349.1,262.2 349.7,268.8 350.4,270.5 351.1,281.8 351.7,280.9 352.4,271.1 353.1,263.7 353.7,276.6 354.4,272.1 355.1,262.8 355.7,286.6 356.4,281.2 357.0,272.2 357.7,268.9 358.4,285.8 359.0,277.5 359.7,265.7 360.4,263.1 361.0,270.6 361.7,277.0 362.3,286.3 363.0,283.1 363.7,303.1 364.3,283.7 365.0,270.4 365.7,272.5 366.3,271.0 367.0,265.4 367.6,282.5 368.3,278.0 369.0,273.6 369.6,262.8 370.3,272.5 371.0,275.5 371.6,272.4 372.3,280.9 372.9,288.4 373.6,271.2 374.3,277.6 374.9,271.4 375.6,282.9 376.3,280.9 376.9,262.6 377.6,273.1 378.2,267.9 378.9,279.3 379.6,274.1 380.2,269.7 380.9,268.2 381.6,274.9 382.2,272.5 382.9,275.2 383.5,275.6 384.2,275.0 384.9,271.4 385.5,284.0 386.2,274.9 386.9,281.8 387.5,274.6 388.2,276.5 388.8,273.5 389.5,254.6 390.2,275.9 390.8,284.6 391.5,265.2 392.2,284.5 392.8,288.2 393.5,272.6 394.1,270.9 394.8,275.7 395.5,277.4 396.1,283.1 396.8,262.1 397.5,287.1 398.1,258.8 398.8,268.3 399.4,282.3 400.1,276.8 400.8,278.2 401.4,271.7 402.1,281.1 402.8,277.5 403.4,286.2 404.1,266.8 404.8,277.2 405.4,280.4 406.1,274.9 406.7,268.6 407.4,267.6 408.1,279.9 408.7,273.8 409.4,272.5 410.1,271.9 410.7,276.9 411.4,270.0 412.0,282.5 412.7,273.8 413.4,280.4 414.0,274.2 414.7,278.7 415.4,269.8 416.0,277.4 416.7,266.2 417.3,281.1 418.0,267.3 418.7,272.6 419.3,291.8 420.0,281.5 420.7,268.4 421.3,273.1 422.0,271.1 422.6,277.2 423.3,272.1 424.0,281.5 424.6,262.4 425.3,263.3 426.0,271.2 426.6,268.6 427.3,282.1 427.9,270.0 428.6,271.8 429.3,254.5 429.9,269.1 430.6,268.1 431.3,270.2 431.9,271.3 432.6,275.0 433.2,274.0 433.9,276.1 434.6,278.2 435.2,265.4 435.9,284.8 436.6,273.1 437.2,267.9 437.9,257.9 438.5,276.3 439.2,264.3 439.9,264.9 440.5,267.2 441.2,260.8 441.9,285.3 442.5,266.8 443.2,274.3 443.8,270.5 444.5,274.5 445.2,279.4 445.8,286.5 446.5,270.6 447.2,275.2 447.8,282.8 448.5,274.4 449.1,281.3 449.8,279.7 450.5,272.4 451.1,268.2 451.8,287.3 452.5,297.3 453.1,269.6 453.8,266.3 454.5,276.1 455.1,271.7 455.8,267.4 456.4,282.0 457.1,285.4 457.8,260.6 458.4,277.6 459.1,274.3 459.8,273.8 460.4,287.7 461.1,269.1 461.7,285.8 462.4,271.7 463.1,270.7 463.7,271.2 464.4,272.1 465.1,271.7 465.7,279.7 466.4,280.0 467.0,259.3 467.7,263.1 468.4,264.7 469.0,268.4 469.7,285.3 470.4,261.0 471.0,275.7 471.7,274.4 472.3,268.8 473.0,278.9 473.7,265.0 474.3,291.2 475.0,265.6 475.7,270.6 476.3,280.2 477.0,268.3 477.6,266.0 478.3,268.6 479.0,267.6 479.6,276.0 480.3,266.8 481.0,266.8 481.6,265.2 482.3,268.3 482.9,286.0 483.6,270.6 484.3,290.2 484.9,279.8 485.6,275.3 486.3,273.3 486.9,276.6 487.6,272.3 488.2,271.0 488.9,273.4 489.6,274.1 490.2,272.2 490.9,269.9 491.6,281.3 492.2,285.3 492.9,267.4 493.5,274.0 494.2,291.2 494.9,267.1 495.5,266.9 496.2,287.9 496.9,283.4 497.5,278.7 498.2,283.6 498.8,279.5 499.5,275.5 500.2,268.1 500.8,292.5 501.5,274.4 502.2,267.3 502.8,292.2 503.5,272.7 504.2,275.4 504.8,279.0 505.5,269.5 506.1,265.5 506.8,267.1 507.5,260.3 508.1,279.9 508.8,289.4 509.5,278.6 510.1,273.6 510.8,266.5 511.4,270.9 512.1,279.0 512.8,265.0 513.4,265.0 514.1,273.0 514.8,310.3 515.4,271.8 516.1,270.6 516.7,274.4 517.4,291.6 518.1,280.9 518.7,271.5 519.4,263.5 520.1,266.2 520.7,266.7 521.4,262.2 522.0,248.8 522.7,265.0 523.4,267.2 524.0,272.7 524.7,280.7 525.4,285.9 526.0,271.2 526.7,283.1 527.3,275.0 528.0,269.1 528.7,279.3 529.3,267.8 530.0,266.1 530.7,280.5 531.3,270.0 532.0,269.0 532.6,303.0 533.3,307.2 534.0,248.8 534.6,273.3 535.3,272.0 536.0,271.2 536.6,273.3 537.3,263.7 537.9,278.6 538.6,282.1 539.3,286.2 539.9,279.5 540.6,281.9 541.3,285.8 541.9,273.3 542.6,271.6 543.2,280.9 543.9,273.5 544.6,269.6 545.2,271.3 545.9,272.5 546.6,269.0 547.2,278.5 547.9,267.5 548.5,260.5 549.2,278.4 549.9,278.3 550.5,279.0 551.2,280.9 551.9,272.2 552.5,265.1 553.2,269.6 553.9,261.4 554.5,270.4 555.2,273.0 555.8,278.0 556.5,270.8 557.2,278.1 557.8,277.4 558.5,275.5 559.2,262.1 559.8,267.4 560.5,273.4 561.1,283.7 561.8,270.1 562.5,275.5 563.1,267.4 563.8,269.7 564.5,269.8 565.1,280.3 565.8,266.8 566.4,254.4 567.1,283.6 567.8,270.4 568.4,291.5 569.1,266.7 569.8,271.9 570.4,273.0 571.1,263.2 571.7,281.4 572.4,270.2 573.1,284.7 573.7,271.6 574.4,267.1 575.1,276.7 575.7,284.2 576.4,280.2 577.0,271.3 577.7,267.2 578.4,278.6 579.0,280.1 579.7,280.8 580.4,278.6 581.0,269.5 581.7,273.0 582.3,271.8 583.0,273.6 583.7,273.0 584.3,283.6 585.0,281.9 585.7,271.9 586.3,271.5 587.0,266.7 587.6,274.9 588.3,280.5 589.0,290.3 589.6,259.9 590.3,266.5 591.0,275.5 591.6,270.6 592.3,270.3 592.9,270.3 593.6,269.9 594.3,290.8 594.9,265.9 595.6,248.8 596.3,267.8 596.9,262.3 597.6,270.5 598.2,277.3 598.9,269.5 599.6,273.6 600.2,274.2 600.9,261.9 601.6,279.5 602.2,265.2 602.9,277.1 603.6,285.4 604.2,266.1 604.9,272.3 605.5,271.5 606.2,271.1 606.9,265.2 607.5,270.2 608.2,274.5 608.9,273.3 609.5,269.4 610.2,253.1 610.8,269.8 611.5,286.9 612.2,273.4 612.8,272.7 613.5,267.6 614.2,280.2 614.8,274.0 615.5,269.4 616.1,252.7 616.8,271.2 617.5,268.2 618.1,276.3 618.8,257.5 619.5,274.1 620.1,274.2 620.8,271.5 621.4,281.7 622.1,279.7 622.8,275.2 623.4,278.4 624.1,286.3 624.8,282.1 625.4,257.3 626.1,271.0 626.7,278.0 627.4,271.8 628.1,268.1 628.7,272.9 629.4,272.5 630.1,274.6 630.7,278.5 631.4,273.8 632.0,261.1 632.7,276.0 633.4,273.7 634.0,283.9 634.7,277.8 635.4,271.1 636.0,275.8 636.7,283.4 637.3,266.7 638.0,276.6 638.7,274.2 639.3,277.8 640.0,271.0 640.7,275.6 641.3,286.2 642.0,264.0 642.6,273.4 643.3,272.4 644.0,278.4 644.6,263.3 645.3,274.3 646.0,272.3 646.6,287.5 647.3,276.8 647.9,274.0 648.6,297.0 649.3,268.9 649.9,275.1 650.6,266.6 651.3,274.6 651.9,274.9 652.6,248.8 653.3,285.4 653.9,289.1 654.6,261.2 655.2,285.9 655.9,278.1 656.6,269.9 657.2,278.6 657.9,266.3 658.6,287.6 659.2,273.1 659.9,269.8 660.5,259.0 661.2,263.9 661.9,279.1 662.5,266.4 663.2,254.0 663.9,282.5 664.5,277.7 665.2,266.9 665.8,276.2 666.5,280.8 667.2,278.5 667.8,282.9 668.5,285.1 669.2,271.7 669.8,271.1 670.5,248.8 671.1,285.0 671.8,282.1 672.5,271.5 673.1,273.4 673.8,275.6 674.5,282.6 675.1,276.6 675.8,284.2 676.4,263.9 677.1,269.7 677.8,281.3 678.4,266.0 679.1,275.3 679.8,270.6 680.4,273.4 681.1,277.3 681.7,265.3 682.4,286.0 683.1,276.9 683.7,276.9 684.4,286.9 685.1,285.0 685.7,273.8 686.4,272.9 687.0,281.5 687.7,270.8 688.4,271.4 689.0,269.3 689.7,276.3 690.4,275.3 691.0,270.4 691.7,278.5 692.3,280.3 693.0,282.9 693.7,271.1 694.3,265.9 695.0,287.2 695.7,276.3 696.3,269.4 697.0,264.1 697.6,272.4 698.3,279.7 699.0,269.2 699.6,258.2 700.3,271.3 701.0,269.0 701.6,261.9 702.3,283.8 703.0,268.1 703.6,263.4 704.3,266.7 704.9,272.1 705.6,275.8 706.3,277.1 706.9,282.2 707.6,276.8 708.3,281.4 708.9,274.0 709.6,274.9 710.2,277.4 710.9,276.2 711.6,273.0 712.2,281.8 712.9,269.2 713.6,272.2 714.2,269.5 714.9,275.7 715.5,248.8 716.2,272.5 716.9,310.3 717.5,276.0 718.2,275.6 718.9,276.9 719.5,275.9 720.2,278.4 720.8,278.8 721.5,280.1 722.2,264.2 722.8,277.9 723.5,280.6 724.2,280.0 724.8,272.4 725.5,265.2 726.1,278.2 726.8,272.3 727.5,273.8 728.1,267.6 728.8,283.2 729.5,274.0 730.1,274.9 730.8,286.4 731.4,266.7 732.1,262.3 732.8,278.9 733.4,234.4 734.1,273.2" fill="none" stroke="#7570b3" stroke-width="1.1" stroke-linejoin="round" />
<polyline points="269.6,271.3 270.2,234.4 270.9,263.1 271.6,287.8 272.2,259.0 272.9,279.5 273.5,279.7 274.2,271.7 274.9,279.2 275.5,272.4 276.2,277.3 276.9,272.0 277.5,284.2 278.2,270.9 278.8,277.8 279.5,269.5 280.2,259.5 280.8,275.0 281.5,268.2 282.2,283.5 282.8,267.6 283.5,270.7 284.1,276.0 284.8,266.3 285.5,282.3 286.1,276.0 286.8,272.1 287.5,281.2 288.1,281.1 288.8,267.3 289.4,276.7 290.1,281.5 290.8,277.6 291.4,278.3 292.1,279.6 292.8,271.9 293.4,281.7 294.1,284.6 294.7,274.0 295.4,274.9 296.1,265.8 296.7,283.5 297.4,278.4 298.1,267.3 298.7,272.0 299.4,278.4 300.0,280.2 300.7,269.7 301.4,274.8 302.0,280.3 302.7,277.6 303.4,277.3 304.0,268.0 304.7,292.3 305.4,278.6 306.0,266.2 306.7,286.3 307.3,276.6 308.0,268.9 308.7,283.8 309.3,281.3 310.0,280.8 310.7,273.6 311.3,279.3 312.0,282.1 312.6,274.2 313.3,273.3 314.0,267.0 314.6,277.5 315.3,275.9 316.0,278.8 316.6,266.7 317.3,266.5 317.9,280.4 318.6,289.6 319.3,261.4 319.9,287.7 320.6,286.9 321.3,278.6 321.9,261.7 322.6,267.1 323.2,276.6 323.9,270.0 324.6,276.0 325.2,267.1 325.9,277.9 326.6,263.8 327.2,270.8 327.9,278.8 328.5,286.8 329.2,266.9 329.9,271.2 330.5,281.6 331.2,281.2 331.9,278.3 332.5,277.3 333.2,276.2 333.8,275.1 334.5,275.0 335.2,278.9 335.8,260.8 336.5,276.9 337.2,279.5 337.8,271.2 338.5,281.0 339.1,271.9 339.8,274.0 340.5,267.8 341.1,281.6 341.8,288.0 342.5,266.8 343.1,276.2 343.8,262.9 344.4,269.9 345.1,278.1 345.8,272.5 346.4,283.0 347.1,281.6 347.8,274.8 348.4,274.0 349.1,286.7 349.7,269.5 350.4,271.2 351.1,267.5 351.7,284.8 352.4,270.7 353.1,279.0 353.7,278.0 354.4,267.5 355.1,288.8 355.7,270.7 356.4,268.5 357.0,266.8 357.7,280.9 358.4,281.1 359.0,272.1 359.7,270.7 360.4,279.4 361.0,271.7 361.7,280.3 362.3,276.2 363.0,282.5 363.7,272.7 364.3,269.6 365.0,276.3 365.7,272.9 366.3,279.6 367.0,268.8 367.6,269.9 368.3,277.3 369.0,260.5 369.6,273.9 370.3,275.2 371.0,276.1 371.6,270.6 372.3,272.1 372.9,277.4 373.6,269.8 374.3,265.9 374.9,263.0 375.6,269.1 376.3,274.8 376.9,294.8 377.6,268.9 378.2,264.0 378.9,257.4 379.6,274.5 380.2,279.7 380.9,279.0 381.6,270.1 382.2,268.0 382.9,277.4 383.5,280.5 384.2,285.6 384.9,267.8 385.5,283.3 386.2,269.1 386.9,274.3 387.5,286.5 388.2,281.1 388.8,266.7 389.5,273.4 390.2,275.0 390.8,265.2 391.5,273.8 392.2,272.8 392.8,272.8 393.5,273.0 394.1,266.2 394.8,277.2 395.5,266.1 396.1,263.2 396.8,277.0 397.5,270.3 398.1,281.4 398.8,273.0 399.4,265.2 400.1,267.2 400.8,276.3 401.4,269.7 402.1,270.2 402.8,272.8 403.4,272.5 404.1,260.3 404.8,291.3 405.4,277.6 406.1,267.6 406.7,293.7 407.4,271.3 408.1,271.6 408.7,275.2 409.4,273.5 410.1,278.7 410.7,273.7 411.4,268.5 412.0,266.8 412.7,270.1 413.4,248.8 414.0,276.3 414.7,285.2 415.4,275.0 416.0,280.2 416.7,278.4 417.3,276.1 418.0,273.3 418.7,272.8 419.3,273.7 420.0,281.4 420.7,276.9 421.3,269.2 422.0,274.5 422.6,271.1 423.3,273.4 424.0,263.7 424.6,275.4 425.3,256.4 426.0,276.1 426.6,268.2 427.3,282.3 427.9,268.7 428.6,270.4 429.3,276.1 429.9,263.7 430.6,272.4 431.3,283.9 431.9,263.4 432.6,272.8 433.2,268.0 433.9,277.8 434.6,278.5 435.2,281.6 435.9,280.7 436.6,268.6 437.2,261.5 437.9,284.5 438.5,273.5 439.2,273.3 439.9,278.7 440.5,271.7 441.2,279.0 441.9,267.2 442.5,275.7 443.2,272.7 443.8,297.3 444.5,277.3 445.2,274.1 445.8,278.6 446.5,275.9 447.2,271.2 447.8,268.7 448.5,281.5 449.1,276.7 449.8,265.0 450.5,266.9 451.1,274.9 451.8,283.3 452.5,287.6 453.1,272.0 453.8,273.3 454.5,276.8 455.1,276.8 455.8,260.6 456.4,268.8 457.1,274.6 457.8,276.1 458.4,277.0 459.1,272.4 459.8,276.4 460.4,264.4 461.1,277.6 461.7,269.5 462.4,272.9 463.1,282.2 463.7,255.0 464.4,272.6 465.1,277.6 465.7,282.7 466.4,273.9 467.0,278.6 467.7,263.0 468.4,270.9 469.0,278.5 469.7,286.4 470.4,269.0 471.0,285.7 471.7,271.1 472.3,273.6 473.0,293.0 473.7,276.2 474.3,260.1 475.0,280.5 475.7,272.3 476.3,286.1 477.0,275.1 477.6,271.0 478.3,294.2 479.0,272.7 479.6,281.0 480.3,277.5 481.0,276.1 481.6,275.6 482.3,283.1 482.9,270.2 483.6,267.1 484.3,260.4 484.9,273.5 485.6,283.1 486.3,273.1 486.9,280.0 487.6,280.6 488.2,269.0 488.9,278.5 489.6,277.7 490.2,285.7 490.9,274.3 491.6,275.7 492.2,272.2 492.9,272.8 493.5,266.0 494.2,259.8 494.9,270.3 495.5,267.1 496.2,272.7 496.9,270.7 497.5,271.0 498.2,266.4 498.8,277.2 499.5,271.7 500.2,271.8 500.8,274.5 501.5,278.0 502.2,268.3 502.8,276.4 503.5,284.4 504.2,268.9 504.8,283.6 505.5,268.4 506.1,291.1 506.8,273.7 507.5,261.4 508.1,275.1 508.8,265.7 509.5,276.4 510.1,278.9 510.8,275.6 511.4,267.1 512.1,264.8 512.8,263.9 513.4,267.5 514.1,273.8 514.8,287.5 515.4,278.9 516.1,263.3 516.7,284.8 517.4,270.4 518.1,270.8 518.7,285.4 519.4,271.5 520.1,276.6 520.7,272.5 521.4,274.6 522.0,275.4 522.7,280.3 523.4,287.8 524.0,261.7 524.7,279.9 525.4,275.8 526.0,276.6 526.7,276.0 527.3,279.2 528.0,270.1 528.7,274.0 529.3,277.3 530.0,278.1 530.7,270.4 531.3,280.3 532.0,270.2 532.6,264.7 533.3,266.5 534.0,269.9 534.6,285.3 535.3,268.7 536.0,271.8 536.6,269.0 537.3,271.5 537.9,276.8 538.6,263.5 539.3,279.1 539.9,265.5 540.6,271.1 541.3,290.6 541.9,276.7 542.6,276.8 543.2,282.9 543.9,286.8 544.6,273.2 545.2,280.8 545.9,278.4 546.6,280.3 547.2,275.4 547.9,270.3 548.5,268.1 549.2,270.2 549.9,276.3 550.5,274.9 551.2,269.7 551.9,265.1 552.5,274.4 553.2,282.7 553.9,275.5 554.5,269.4 555.2,277.0 555.8,265.5 556.5,277.1 557.2,273.7 557.8,271.2 558.5,262.6 559.2,282.0 559.8,270.0 560.5,268.3 561.1,274.6 561.8,255.9 562.5,278.3 563.1,281.9 563.8,282.5 564.5,278.6 565.1,281.3 565.8,270.3 566.4,273.7 567.1,283.9 567.8,262.8 568.4,272.1 569.1,285.4 569.8,286.8 570.4,273.4 571.1,264.3 571.7,276.0 572.4,267.1 573.1,262.4 573.7,268.7 574.4,276.1 575.1,283.0 575.7,278.4 576.4,264.5 577.0,273.6 577.7,280.8 578.4,276.7 579.0,275.2 579.7,265.9 580.4,277.9 581.0,260.6 581.7,272.2 582.3,271.3 583.0,281.6 583.7,270.9 584.3,271.9 585.0,268.7 585.7,288.5 586.3,272.3 587.0,284.6 587.6,280.9 588.3,257.4 589.0,277.1 589.6,279.3 590.3,267.6 591.0,306.2 591.6,255.4 592.3,273.4 592.9,268.9 593.6,275.8 594.3,265.8 594.9,273.6 595.6,254.6 596.3,279.0 596.9,270.7 597.6,268.8 598.2,282.0 598.9,277.7 599.6,279.5 600.2,285.9 600.9,280.0 601.6,294.4 602.2,283.3 602.9,282.2 603.6,272.2 604.2,275.2 604.9,266.8 605.5,265.6 606.2,273.0 606.9,281.0 607.5,269.1 608.2,309.6 608.9,276.5 609.5,273.9 610.2,278.0 610.8,255.2 611.5,265.3 612.2,277.3 612.8,267.3 613.5,264.9 614.2,280.0 614.8,272.8 615.5,278.6 616.1,278.2 616.8,273.2 617.5,272.8 618.1,279.3 618.8,273.7 619.5,282.6 620.1,275.0 620.8,272.8 621.4,277.1 622.1,284.7 622.8,279.3 623.4,255.7 624.1,267.1 624.8,267.2 625.4,266.7 626.1,261.6 626.7,276.9 627.4,265.8 628.1,279.6 628.7,261.6 629.4,267.0 630.1,281.0 630.7,269.0 631.4,266.9 632.0,279.6 632.7,251.4 633.4,267.8 634.0,260.9 634.7,277.8 635.4,263.0 636.0,281.0 636.7,279.7 637.3,264.4 638.0,291.7 638.7,279.2 639.3,263.1 640.0,270.3 640.7,272.5 641.3,275.8 642.0,292.0 642.6,273.8 643.3,267.2 644.0,274.2 644.6,268.8 645.3,274.6 646.0,264.2 646.6,294.3 647.3,270.5 647.9,280.4 648.6,272.5 649.3,269.3 649.9,265.8 650.6,269.1 651.3,265.5 651.9,281.0 652.6,273.0 653.3,289.3 653.9,271.6 654.6,285.6 655.2,266.5 655.9,272.6 656.6,276.0 657.2,278.6 657.9,272.8 658.6,278.3 659.2,284.1 659.9,271.3 660.5,280.2 661.2,270.8 661.9,280.9 662.5,282.7 663.2,293.6 663.9,269.9 664.5,265.7 665.2,276.0 665.8,274.5 666.5,274.3 667.2,260.4 667.8,269.5 668.5,270.0 669.2,274.5 669.8,273.7 670.5,266.8 671.1,273.9 671.8,273.7 672.5,264.5 673.1,267.2 673.8,268.4 674.5,260.2 675.1,253.9 675.8,281.9 676.4,285.4 677.1,274.5 677.8,272.3 678.4,267.1 679.1,284.4 679.8,283.4 680.4,275.6 681.1,276.1 681.7,284.0 682.4,275.4 683.1,269.2 683.7,275.9 684.4,257.8 685.1,269.1 685.7,251.3 686.4,270.7 687.0,284.4 687.7,259.1 688.4,276.3 689.0,276.5 689.7,269.2 690.4,276.7 691.0,279.1 691.7,248.8 692.3,267.3 693.0,267.3 693.7,284.2 694.3,286.0 695.0,271.4 695.7,276.8 696.3,277.8 697.0,267.1 697.6,271.4 698.3,278.1 699.0,270.2 699.6,279.8 700.3,278.1 701.0,261.3 701.6,276.2 702.3,270.6 703.0,276.3 703.6,276.7 704.3,282.3 704.9,282.5 705.6,265.5 706.3,258.8 706.9,269.5 707.6,270.2 708.3,278.2 708.9,274.7 709.6,263.6 710.2,255.8 710.9,269.2 711.6,271.3 712.2,283.8 712.9,273.1 713.6,288.1 714.2,280.4 714.9,276.1 715.5,254.2 716.2,290.9 716.9,286.9 717.5,268.5 718.2,267.3 718.9,268.4 719.5,275.8 720.2,278.9 720.8,274.5 721.5,260.4 722.2,277.6 722.8,266.4 723.5,279.0 724.2,290.8 724.8,269.3 725.5,267.8 726.1,275.4 726.8,266.8 727.5,265.7 728.1,292.3 728.8,271.2 729.5,265.0 730.1,269.2 730.8,272.3 731.4,268.1 732.1,276.0 732.8,278.3 733.4,272.1 734.1,256.8" fill="none" stroke="#e7298a" stroke-width="1.1" stroke-linejoin="round" />
<polyline points="269.6,269.3 270.2,267.2 270.9,265.2 271.6,266.4 272.2,268.5 272.9,269.3 273.5,268.0 274.2,267.2 274.9,268.5 275.5,270.1 276.2,271.3 276.9,272.2 277.5,273.0 278.2,273.4 278.8,273.8 279.5,274.2 280.2,274.0 280.8,274.3 281.5,274.1 282.2,273.9 282.8,274.4 283.5,274.1 284.1,273.8 284.8,274.6 285.5,273.8 286.1,274.2 286.8,274.6 287.5,274.1 288.1,274.0 288.8,274.2 289.4,274.1 290.1,274.0 290.8,274.1 291.4,274.1 292.1,273.9 292.8,273.9 293.4,274.2 294.1,274.8 294.7,274.6 295.4,274.3 296.1,273.8 296.7,274.0 297.4,273.6 298.1,274.0 298.7,274.0 299.4,274.3 300.0,273.8 300.7,274.6 301.4,274.1 302.0,274.2 302.7,274.3 303.4,273.9 304.0,273.9 304.7,274.0 305.4,274.3 306.0,274.6 306.7,274.6 307.3,275.0 308.0,274.6 308.7,274.1 309.3,273.7 310.0,274.5 310.7,273.8 311.3,273.5 312.0,273.8 312.6,273.6 313.3,274.2 314.0,274.3 314.6,274.1 315.3,273.8 316.0,274.0 316.6,274.1 317.3,273.9 317.9,274.4 318.6,273.9 319.3,274.8 319.9,273.7 320.6,273.7 321.3,273.4 321.9,274.4 322.6,274.3 323.2,274.5 323.9,274.6 324.6,274.9 325.2,273.9 325.9,274.2 326.6,274.2 327.2,274.7 327.9,274.1 328.5,273.5 329.2,274.1 329.9,273.9 330.5,274.5 331.2,273.8 331.9,274.2 332.5,274.1 333.2,274.0 333.8,274.2 334.5,273.9 335.2,274.2 335.8,274.3 336.5,274.5 337.2,274.5 337.8,273.9 338.5,273.8 339.1,274.2 339.8,274.2 340.5,274.3 341.1,274.1 341.8,273.7 342.5,274.1 343.1,274.3 343.8,273.8 344.4,273.9 345.1,274.7 345.8,274.3 346.4,273.7 347.1,274.0 347.8,274.2 348.4,274.0 349.1,274.5 349.7,274.5 350.4,274.2 351.1,274.1 351.7,273.6 352.4,274.2 353.1,274.0 353.7,273.6 354.4,274.3 355.1,274.2 355.7,274.1 356.4,274.0 357.0,274.1 357.7,273.9 358.4,274.5 359.0,274.6 359.7,274.2 360.4,274.7 361.0,273.6 361.7,274.4 362.3,274.3 363.0,274.0 363.7,274.0 364.3,274.0 365.0,274.2 365.7,274.6 366.3,274.2 367.0,274.4 367.6,274.7 368.3,274.3 369.0,273.8 369.6,274.5 370.3,274.4 371.0,274.4 371.6,273.9 372.3,274.8 372.9,274.0 373.6,274.1 374.3,274.2 374.9,274.5 375.6,274.3 376.3,273.5 376.9,274.1 377.6,274.3 378.2,273.9 378.9,274.6 379.6,273.8 380.2,274.2 380.9,273.3 381.6,273.4 382.2,274.0 382.9,274.0 383.5,274.3 384.2,274.0 384.9,273.9 385.5,274.6 386.2,274.7 386.9,274.0 387.5,274.4 388.2,274.1 388.8,274.1 389.5,274.1 390.2,274.3 390.8,274.0 391.5,273.7 392.2,273.6 392.8,274.3 393.5,274.1 394.1,274.2 394.8,274.7 395.5,274.7 396.1,274.2 396.8,274.0 397.5,273.9 398.1,274.4 398.8,274.0 399.4,274.2 400.1,274.3 400.8,273.9 401.4,274.7 402.1,275.0 402.8,273.6 403.4,274.2 404.1,273.9 404.8,274.2 405.4,274.4 406.1,274.6 406.7,274.8 407.4,274.1 408.1,274.5 408.7,274.2 409.4,274.1 410.1,274.2 410.7,274.2 411.4,273.7 412.0,274.1 412.7,274.1 413.4,274.2 414.0,273.7 414.7,273.8 415.4,274.4 416.0,274.1 416.7,274.2 417.3,274.3 418.0,274.5 418.7,273.6 419.3,274.0 420.0,274.9 420.7,273.8 421.3,273.6 422.0,274.1 422.6,274.2 423.3,274.1 424.0,273.9 424.6,274.4 425.3,274.1 426.0,274.7 426.6,273.8 427.3,274.6 427.9,274.3 428.6,274.1 429.3,273.9 429.9,274.4 430.6,274.4 431.3,273.7 431.9,274.4 432.6,274.5 433.2,274.4 433.9,274.0 434.6,274.0 435.2,273.9 435.9,274.1 436.6,274.3 437.2,274.0 437.9,273.9 438.5,274.6 439.2,274.4 439.9,274.2 440.5,273.7 441.2,274.3 441.9,274.2 442.5,274.2 443.2,274.1 443.8,274.0 444.5,274.5 445.2,275.1 445.8,273.9 446.5,274.9 447.2,274.1 447.8,274.1 448.5,274.0 449.1,274.5 449.8,274.1 450.5,274.0 451.1,274.0 451.8,273.8 452.5,274.5 453.1,274.4 453.8,274.3 454.5,274.2 455.1,273.9 455.8,273.9 456.4,274.2 457.1,273.6 457.8,274.0 458.4,274.6 459.1,273.8 459.8,274.6 460.4,274.6 461.1,274.3 461.7,274.3 462.4,274.2 463.1,274.2 463.7,274.5 464.4,274.4 465.1,274.0 465.7,274.1 466.4,274.3 467.0,274.5 467.7,274.2 468.4,274.5 469.0,274.6 469.7,273.9 470.4,274.0 471.0,274.3 471.7,273.7 472.3,274.2 473.0,274.0 473.7,274.0 474.3,274.1 475.0,274.1 475.7,273.7 476.3,273.9 477.0,274.8 477.6,274.0 478.3,274.9 479.0,274.5 479.6,274.0 480.3,274.5 481.0,273.8 481.6,274.3 482.3,274.0 482.9,274.1 483.6,273.9 484.3,273.7 484.9,274.7 485.6,274.2 486.3,274.1 486.9,273.8 487.6,274.0 488.2,274.3 488.9,274.6 489.6,274.7 490.2,274.5 490.9,274.1 491.6,274.1 492.2,273.7 492.9,274.1 493.5,273.9 494.2,274.6 494.9,274.1 495.5,274.3 496.2,274.4 496.9,273.8 497.5,274.2 498.2,274.2 498.8,274.2 499.5,274.6 500.2,274.7 500.8,273.6 501.5,274.2 502.2,274.2 502.8,274.1 503.5,274.3 504.2,274.3 504.8,274.5 505.5,274.1 506.1,274.2 506.8,273.8 507.5,273.7 508.1,274.5 508.8,274.0 509.5,274.3 510.1,273.5 510.8,274.1 511.4,273.9 512.1,274.3 512.8,273.8 513.4,274.4 514.1,274.6 514.8,275.0 515.4,274.2 516.1,274.3 516.7,274.1 517.4,274.5 518.1,274.2 518.7,274.2 519.4,274.5 520.1,273.6 520.7,273.5 521.4,274.1 522.0,274.0 522.7,274.0 523.4,273.9 524.0,274.4 524.7,274.1 525.4,273.6 526.0,274.2 526.7,274.3 527.3,274.5 528.0,274.3 528.7,274.9 529.3,274.2 530.0,273.8 530.7,274.1 531.3,274.1 532.0,274.2 532.6,274.2 533.3,274.5 534.0,274.8 534.6,273.6 535.3,274.0 536.0,274.9 536.6,273.6 537.3,274.3 537.9,273.8 538.6,274.2 539.3,274.4 539.9,273.9 540.6,274.3 541.3,275.0 541.9,274.0 542.6,274.2 543.2,274.2 543.9,274.3 544.6,274.0 545.2,273.7 545.9,273.8 546.6,274.1 547.2,274.1 547.9,274.4 548.5,273.6 549.2,274.8 549.9,274.5 550.5,274.2 551.2,274.1 551.9,274.1 552.5,274.3 553.2,273.5 553.9,273.8 554.5,274.8 555.2,274.5 555.8,274.6 556.5,273.7 557.2,274.3 557.8,274.7 558.5,274.3 559.2,274.6 559.8,274.2 560.5,273.9 561.1,274.5 561.8,274.1 562.5,274.1 563.1,274.4 563.8,274.0 564.5,274.4 565.1,273.9 565.8,274.2 566.4,274.3 567.1,273.7 567.8,273.8 568.4,274.3 569.1,275.2 569.8,274.1 570.4,274.3 571.1,274.0 571.7,274.2 572.4,274.3 573.1,274.3 573.7,273.7 574.4,273.7 575.1,273.7 575.7,274.6 576.4,274.3 577.0,274.1 577.7,274.8 578.4,273.8 579.0,274.6 579.7,273.9 580.4,274.4 581.0,274.1 581.7,274.8 582.3,275.0 583.0,274.5 583.7,274.7 584.3,274.6 585.0,274.4 585.7,274.1 586.3,273.9 587.0,274.5 587.6,274.7 588.3,274.3 589.0,274.6 589.6,274.6 590.3,274.4 591.0,273.9 591.6,274.1 592.3,274.9 592.9,273.6 593.6,274.7 594.3,274.2 594.9,274.5 595.6,273.9 596.3,274.1 596.9,273.8 597.6,274.2 598.2,274.3 598.9,273.8 599.6,274.9 600.2,274.7 600.9,274.7 601.6,274.3 602.2,274.4 602.9,274.5 603.6,274.0 604.2,274.1 604.9,274.4 605.5,274.7 606.2,273.5 606.9,274.1 607.5,274.4 608.2,274.2 608.9,274.1 609.5,274.4 610.2,274.0 610.8,274.2 611.5,274.4 612.2,273.8 612.8,274.4 613.5,273.8 614.2,274.2 614.8,274.3 615.5,273.8 616.1,274.3 616.8,274.0 617.5,273.7 618.1,274.3 618.8,274.4 619.5,273.9 620.1,273.9 620.8,274.9 621.4,274.0 622.1,273.8 622.8,274.4 623.4,273.9 624.1,274.3 624.8,274.4 625.4,274.3 626.1,273.9 626.7,274.3 627.4,274.4 628.1,274.2 628.7,273.9 629.4,274.9 630.1,273.8 630.7,273.7 631.4,274.5 632.0,274.2 632.7,274.0 633.4,274.2 634.0,273.6 634.7,274.1 635.4,274.4 636.0,274.3 636.7,274.1 637.3,274.4 638.0,274.4 638.7,274.4 639.3,273.6 640.0,274.0 640.7,274.6 641.3,274.0 642.0,275.1 642.6,274.2 643.3,274.0 644.0,274.1 644.6,274.0 645.3,274.1 646.0,274.4 646.6,274.3 647.3,274.3 647.9,274.7 648.6,274.2 649.3,274.5 649.9,274.0 650.6,273.4 651.3,273.5 651.9,273.3 652.6,274.3 653.3,274.3 653.9,273.9 654.6,274.5 655.2,274.0 655.9,274.4 656.6,274.1 657.2,274.3 657.9,273.6 658.6,273.8 659.2,273.9 659.9,274.6 660.5,273.8 661.2,274.3 661.9,274.6 662.5,274.1 663.2,273.8 663.9,274.7 664.5,273.9 665.2,274.2 665.8,274.2 666.5,274.0 667.2,274.3 667.8,274.4 668.5,273.8 669.2,275.0 669.8,273.8 670.5,274.6 671.1,273.7 671.8,274.5 672.5,273.7 673.1,274.7 673.8,273.5 674.5,274.1 675.1,274.2 675.8,274.3 676.4,273.8 677.1,274.2 677.8,273.9 678.4,274.1 679.1,274.5 679.8,273.6 680.4,274.2 681.1,274.0 681.7,274.1 682.4,274.1 683.1,273.6 683.7,274.0 684.4,274.2 685.1,274.1 685.7,274.2 686.4,274.5 687.0,273.8 687.7,274.5 688.4,273.7 689.0,274.1 689.7,273.9 690.4,274.1 691.0,274.2 691.7,273.4 692.3,274.3 693.0,274.5 693.7,274.0 694.3,273.7 695.0,274.6 695.7,274.3 696.3,273.9 697.0,273.8 697.6,274.0 698.3,274.3 699.0,274.1 699.6,274.4 700.3,274.0 701.0,274.1 701.6,274.0 702.3,274.2 703.0,273.9 703.6,274.1 704.3,274.4 704.9,273.7 705.6,274.1 706.3,274.2 706.9,274.2 707.6,273.7 708.3,274.1 708.9,274.0 709.6,274.4 710.2,274.3 710.9,274.3 711.6,274.4 712.2,274.5 712.9,274.3 713.6,274.6 714.2,274.0 714.9,273.9 715.5,274.5 716.2,274.0 716.9,274.4 717.5,274.1 718.2,274.0 718.9,274.7 719.5,275.0 720.2,274.0 720.8,274.0 721.5,274.2 722.2,274.4 722.8,274.4 723.5,275.0 724.2,273.7 724.8,274.9 725.5,274.1 726.1,274.3 726.8,274.1 727.5,274.6 728.1,274.5 728.8,274.1 729.5,274.6 730.1,274.2 730.8,274.7 731.4,274.2 732.1,274.1 732.8,274.2 733.4,274.0 734.1,272.2" fill="none" stroke="#000" stroke-width="2.3" stroke-linejoin="round" />
</g>
<rect x="253" y="337" width="497" height="89" fill="#e5e5e5"/>
<line x1="253.0" y1="337" x2="253.0" y2="426" stroke="#fff" stroke-width="1.1"/>
<line x1="319.3" y1="337" x2="319.3" y2="426" stroke="#fff" stroke-width="1.1"/>
<line x1="385.5" y1="337" x2="385.5" y2="426" stroke="#fff" stroke-width="1.1"/>
<line x1="451.8" y1="337" x2="451.8" y2="426" stroke="#fff" stroke-width="1.1"/>
<line x1="518.1" y1="337" x2="518.1" y2="426" stroke="#fff" stroke-width="1.1"/>
<line x1="584.3" y1="337" x2="584.3" y2="426" stroke="#fff" stroke-width="1.1"/>
<line x1="650.6" y1="337" x2="650.6" y2="426" stroke="#fff" stroke-width="1.1"/>
<line x1="716.9" y1="337" x2="716.9" y2="426" stroke="#fff" stroke-width="1.1"/>
<line x1="253" y1="352.1" x2="750" y2="352.1" stroke="#fff" stroke-width="1.1"/>
<line x1="253" y1="385.8" x2="750" y2="385.8" stroke="#fff" stroke-width="1.1"/>
<line x1="253" y1="420.5" x2="750" y2="420.5" stroke="#fff" stroke-width="1.1"/>
<clipPath id="c3"><rect x="253" y="337" width="497" height="89"/></clipPath>
<g clip-path="url(#c3)">
<polyline points="253.0,420.5 268.9,420.5 269.6,420.5 271.6,393.5 272.4,396.8 273.2,390.0 274.0,399.2 274.9,399.0 275.7,387.4 276.5,399.2 277.4,400.0 278.2,390.0 279.0,394.0 279.8,394.8 280.7,397.6 281.5,393.7 282.3,397.3 283.2,396.9 284.0,390.7 284.8,398.3 285.6,397.8 286.5,398.1 287.3,387.4 288.1,404.5 288.9,391.3 289.8,388.2 290.6,391.1 291.4,395.4 292.3,397.7 293.1,404.9 293.9,395.2 294.7,397.2 295.6,393.7 296.4,408.0 297.2,393.7 298.1,409.6 298.9,389.2 299.7,396.0 300.5,402.8 301.4,402.3 302.2,398.1 303.0,396.1 303.9,396.1 304.7,401.2 305.5,386.9 306.3,389.6 307.2,400.3 308.0,393.8 308.8,409.6 309.7,401.4 310.5,394.1 311.3,396.0 312.1,394.8 313.0,385.9 313.8,400.6 314.6,397.2 315.5,398.3 316.3,394.6 317.1,402.7 317.9,391.4 318.8,395.8 319.6,397.3 320.4,396.2 321.3,395.3 322.1,394.3 322.9,400.5 323.7,390.5 324.6,400.7 325.4,394.9 326.2,405.5 327.1,395.4 327.9,387.3 328.7,391.6 329.5,390.9 330.4,385.8 331.2,391.1 332.0,390.7 332.9,394.1 333.7,385.1 334.5,381.4 335.3,396.2 336.2,390.8 337.0,381.7 337.8,401.0 338.6,386.3 339.5,395.8 340.3,391.8 341.1,399.6 342.0,384.7 342.8,391.1 343.6,406.5 344.4,388.9 345.3,403.8 346.1,400.5 346.9,399.4 347.8,398.1 348.6,392.5 349.4,396.1 350.2,390.4 351.1,393.5 351.9,391.8 352.7,396.2 353.6,402.6 354.4,393.0 355.2,383.8 356.0,397.1 356.9,389.4 357.7,394.0 358.5,397.1 359.4,396.2 360.2,395.1 361.0,400.7 361.8,389.6 362.7,402.3 363.5,398.4 364.3,391.6 365.2,395.9 366.0,396.5 366.8,403.4 367.6,397.8 368.5,390.4 369.3,385.4 370.1,388.4 371.0,391.5 371.8,391.7 372.6,393.2 373.4,391.6 374.3,396.3 375.1,410.3 375.9,391.8 376.8,402.0 377.6,391.2 378.4,390.5 379.2,403.3 380.1,388.2 380.9,399.7 381.7,396.8 382.6,398.7 383.4,407.4 384.2,398.4 385.0,408.7 385.9,393.4 386.7,394.6 387.5,393.4 388.3,395.1 389.2,392.3 390.0,387.5 390.8,402.0 391.7,394.8 392.5,391.1 393.3,391.4 394.1,391.9 395.0,388.0 395.8,413.7 396.6,394.5 397.5,391.0 398.3,389.9 399.1,394.0 399.9,394.2 400.8,396.2 401.6,390.5 402.4,389.3 403.3,395.7 404.1,397.2 404.9,383.5 405.7,393.4 406.6,392.1 407.4,395.9 408.2,397.0 409.1,390.4 409.9,392.0 410.7,398.6 411.5,388.5 412.4,397.6 413.2,394.0 414.0,394.8 414.9,399.4 415.7,397.8 416.5,392.5 417.3,390.3 418.2,395.2 419.0,390.5 419.8,387.1 420.7,396.1 421.5,393.8 422.3,398.4 423.1,394.5 424.0,388.1 424.8,396.6 425.6,386.7 426.5,386.9 427.3,395.2 428.1,395.3 428.9,387.9 429.8,393.0 430.6,403.6 431.4,395.3 432.3,396.9 433.1,399.7 433.9,391.7 434.7,385.0 435.6,396.4 436.4,397.4 437.2,393.0 438.0,397.9 438.9,397.4 439.7,398.4 440.5,392.6 441.4,392.1 442.2,398.2 443.0,395.2 443.8,390.1 444.7,393.8 445.5,389.6 446.3,398.5 447.2,390.3 448.0,401.8 448.8,392.8 449.6,385.7 450.5,388.9 451.3,398.8 452.1,399.9 453.0,391.8 453.8,408.8 454.6,404.5 455.4,391.8 456.3,400.3 457.1,395.6 457.9,397.0 458.8,389.6 459.6,404.0 460.4,401.6 461.2,396.4 462.1,398.6 462.9,399.1 463.7,396.0 464.6,397.2 465.4,392.8 466.2,396.7 467.0,404.7 467.9,398.7 468.7,386.3 469.5,392.3 470.4,397.3 471.2,394.9 472.0,388.4 472.8,378.3 473.7,386.8 474.5,389.6 475.3,396.3 476.2,398.5 477.0,403.2 477.8,397.2 478.6,400.9 479.5,403.6 480.3,397.2 481.1,396.8 482.0,402.7 482.8,401.5 483.6,388.6 484.4,391.5 485.3,401.9 486.1,401.4 486.9,397.6 487.7,393.5 488.6,396.9 489.4,398.9 490.2,393.4 491.1,397.2 491.9,399.9 492.7,399.7 493.5,403.3 494.4,395.1 495.2,390.2 496.0,397.5 496.9,396.6 497.7,394.8 498.5,397.2 499.3,399.5 500.2,389.2 501.0,384.6 501.8,395.7 502.7,397.0 503.5,400.6 504.3,388.7 505.1,403.1 506.0,399.7 506.8,398.8 507.6,402.1 508.5,394.3 509.3,384.2 510.1,397.0 510.9,397.1 511.8,398.3 512.6,391.8 513.4,396.8 514.3,396.7 515.1,399.6 515.9,396.7 516.7,396.2 517.6,396.6 518.4,392.2 519.2,400.1 520.1,404.7 520.9,401.9 521.7,389.4 522.5,396.6 523.4,396.7 524.2,400.8 525.0,394.8 525.9,392.7 526.7,394.2 527.5,389.7 528.3,395.2 529.2,390.6 530.0,386.9 530.8,383.2 531.7,400.2 532.5,391.0 533.3,397.7 534.1,390.9 535.0,392.9 535.8,395.2 536.6,391.9 537.4,386.7 538.3,400.9 539.1,392.6 539.9,399.9 540.8,390.9 541.6,398.1 542.4,393.0 543.2,399.4 544.1,391.6 544.9,402.5 545.7,393.3 546.6,395.8 547.4,383.6 548.2,399.1 549.0,392.5 549.9,396.6 550.7,388.2 551.5,392.5 552.4,390.0 553.2,389.0 554.0,413.7 554.8,387.3 555.7,390.8 556.5,399.9 557.3,391.4 558.2,365.8 559.0,389.0 559.8,397.9 560.6,403.9 561.5,394.8 562.3,395.4 563.1,387.6 564.0,404.0 564.8,390.2 565.6,392.2 566.4,387.5 567.3,394.0 568.1,407.0 568.9,387.2 569.8,394.2 570.6,396.7 571.4,388.2 572.2,383.1 573.1,387.2 573.9,391.6 574.7,390.4 575.6,389.5 576.4,385.7 577.2,387.2 578.0,402.3 578.9,391.4 579.7,400.7 580.5,396.5 581.4,399.7 582.2,393.3 583.0,390.1 583.8,390.0 584.7,388.7 585.5,392.3 586.3,398.9 587.1,392.2 588.0,394.2 588.8,395.1 589.6,395.5 590.5,393.6 591.3,390.0 592.1,398.8 592.9,400.0 593.8,400.6 594.6,403.7 595.4,391.3 596.3,397.5 597.1,389.2 597.9,398.5 598.7,387.3 599.6,393.0 600.4,395.7 601.2,402.4 602.1,395.0 602.9,388.5 603.7,401.9 604.5,399.7 605.4,389.1 606.2,385.1 607.0,392.6 607.9,408.8 608.7,400.9 609.5,397.6 610.3,398.7 611.2,387.8 612.0,398.3 612.8,403.5 613.7,388.3 614.5,389.7 615.3,387.6 616.1,397.3 617.0,388.1 617.8,394.1 618.6,386.1 619.5,393.4 620.3,400.2 621.1,396.3 621.9,396.9 622.8,397.6 623.6,411.3 624.4,392.7 625.3,397.2 626.1,394.6 626.9,389.7 627.7,407.3 628.6,394.0 629.4,393.5 630.2,392.1 631.1,407.8 631.9,398.8 632.7,398.7 633.5,384.5 634.4,392.2 635.2,395.7 636.0,395.4 636.8,398.7 637.7,387.6 638.5,393.7 639.3,401.3 640.2,396.8 641.0,389.9 641.8,396.9 642.6,389.4 643.5,401.4 644.3,386.7 645.1,397.7 646.0,395.5 646.8,389.5 647.6,392.5 648.4,389.3 649.3,401.3 650.1,386.2 650.9,391.4 651.8,392.6 652.6,400.2 653.4,403.5 654.2,398.4 655.1,391.9 655.9,391.0 656.7,395.6 657.6,397.5 658.4,394.0 659.2,390.5 660.0,395.9 660.9,395.5 661.7,390.8 662.5,391.6 663.4,390.8 664.2,390.6 665.0,394.2 665.8,401.8 666.7,396.4 667.5,397.8 668.3,393.9 669.2,399.7 670.0,393.9 670.8,392.6 671.6,398.5 672.5,394.2 673.3,388.2 674.1,394.7 675.0,406.9 675.8,391.3 676.6,398.7 677.4,397.1 678.3,390.7 679.1,402.1 679.9,396.0 680.8,396.4 681.6,410.5 682.4,395.8 683.2,394.2 684.1,402.0 684.9,391.3 685.7,397.0 686.5,397.1 687.4,402.0 688.2,386.4 689.0,385.6 689.9,391.8 690.7,382.8 691.5,388.3 692.3,400.4 693.2,401.3 694.0,387.6 694.8,394.9 695.7,385.4 696.5,386.5 697.3,386.7 698.1,392.7 699.0,387.4 699.8,386.7 700.6,398.5 701.5,388.0 702.3,398.0 703.1,405.3 703.9,388.0 704.8,387.2 705.6,379.5 706.4,395.7 707.3,389.8 708.1,384.3 708.9,398.1 709.7,395.5 710.6,387.6 711.4,398.5 712.2,393.4 713.1,393.0 713.9,393.5 714.7,394.7 715.5,388.5 716.4,391.1 717.2,388.4 718.0,392.5 718.9,383.5 719.7,400.1 720.5,394.0 721.3,395.2 722.2,391.7 723.0,394.9 723.8,391.2 724.7,395.9 725.5,388.4 726.3,396.9 727.1,397.4 728.0,408.5 728.8,413.7 729.6,390.0 730.5,395.0 731.3,391.2 732.8,394.9 734.1,420.5 746.7,420.5 748.0,420.5 748.7,420.5" fill="none" stroke="#1b9e77" stroke-width="1.1" stroke-linejoin="round" />
<polyline points="253.0,420.5 268.9,420.5 269.6,420.5 271.6,392.7 272.4,396.0 273.2,393.6 274.0,403.5 274.9,398.5 275.7,390.6 276.5,398.5 277.4,394.7 278.2,389.0 279.0,403.3 279.8,403.6 280.7,413.7 281.5,394.2 282.3,383.5 283.2,396.1 284.0,392.8 284.8,394.2 285.6,394.0 286.5,394.0 287.3,393.0 288.1,392.9 288.9,384.8 289.8,394.2 290.6,393.8 291.4,395.5 292.3,392.0 293.1,399.7 293.9,406.3 294.7,393.3 295.6,400.2 296.4,395.2 297.2,399.7 298.1,396.0 298.9,391.0 299.7,397.3 300.5,398.2 301.4,404.0 302.2,393.3 303.0,401.4 303.9,402.2 304.7,398.1 305.5,389.7 306.3,394.3 307.2,383.1 308.0,392.9 308.8,399.2 309.7,403.0 310.5,395.6 311.3,400.5 312.1,400.6 313.0,391.0 313.8,391.8 314.6,392.1 315.5,398.5 316.3,393.9 317.1,394.2 317.9,389.2 318.8,399.6 319.6,398.3 320.4,402.8 321.3,401.4 322.1,389.4 322.9,396.7 323.7,387.0 324.6,398.1 325.4,398.1 326.2,404.4 327.1,396.5 327.9,391.0 328.7,403.2 329.5,390.1 330.4,399.3 331.2,407.9 332.0,403.6 332.9,388.8 333.7,386.4 334.5,388.3 335.3,390.7 336.2,390.0 337.0,388.7 337.8,393.6 338.6,394.1 339.5,390.0 340.3,390.4 341.1,393.0 342.0,398.0 342.8,394.5 343.6,393.2 344.4,391.1 345.3,394.5 346.1,380.2 346.9,392.9 347.8,395.1 348.6,398.8 349.4,391.7 350.2,391.7 351.1,404.6 351.9,395.0 352.7,397.8 353.6,398.8 354.4,399.2 355.2,395.8 356.0,406.2 356.9,393.4 357.7,395.0 358.5,395.7 359.4,401.9 360.2,391.1 361.0,386.6 361.8,403.3 362.7,394.4 363.5,393.9 364.3,402.5 365.2,386.4 366.0,398.4 366.8,399.9 367.6,401.0 368.5,402.5 369.3,398.4 370.1,398.7 371.0,393.0 371.8,393.7 372.6,394.8 373.4,399.0 374.3,394.8 375.1,398.6 375.9,397.3 376.8,411.3 377.6,399.2 378.4,393.3 379.2,398.8 380.1,393.1 380.9,404.5 381.7,393.8 382.6,386.8 383.4,399.7 384.2,394.6 385.0,398.8 385.9,404.3 386.7,402.0 387.5,390.1 388.3,407.8 389.2,393.2 390.0,400.0 390.8,394.3 391.7,391.8 392.5,394.5 393.3,404.0 394.1,413.4 395.0,397.7 395.8,403.7 396.6,382.3 397.5,403.5 398.3,387.4 399.1,394.8 399.9,408.1 400.8,401.0 401.6,398.3 402.4,394.1 403.3,390.3 404.1,398.4 404.9,394.8 405.7,392.7 406.6,398.5 407.4,397.2 408.2,397.8 409.1,397.3 409.9,395.9 410.7,389.6 411.5,393.7 412.4,399.0 413.2,402.0 414.0,400.0 414.9,398.3 415.7,394.1 416.5,386.1 417.3,396.5 418.2,394.5 419.0,399.3 419.8,413.7 420.7,398.0 421.5,385.0 422.3,395.9 423.1,398.2 424.0,395.2 424.8,393.6 425.6,394.4 426.5,393.8 427.3,403.8 428.1,393.3 428.9,408.5 429.8,393.5 430.6,394.3 431.4,398.5 432.3,393.0 433.1,395.2 433.9,398.4 434.7,398.1 435.6,406.0 436.4,387.1 437.2,398.0 438.0,397.5 438.9,398.5 439.7,383.0 440.5,392.4 441.4,394.1 442.2,383.5 443.0,391.9 443.8,395.3 444.7,391.6 445.5,398.4 446.3,394.7 447.2,387.5 448.0,390.3 448.8,395.6 449.6,397.7 450.5,385.1 451.3,389.0 452.1,402.9 453.0,397.9 453.8,398.5 454.6,385.1 455.4,394.4 456.3,397.6 457.1,401.0 457.9,400.8 458.8,394.8 459.6,398.5 460.4,391.2 461.2,388.2 462.1,402.6 462.9,400.0 463.7,393.4 464.6,388.0 465.4,394.1 466.2,392.4 467.0,401.3 467.9,392.1 468.7,398.1 469.5,390.6 470.4,392.4 471.2,397.0 472.0,387.0 472.8,389.6 473.7,402.8 474.5,395.1 475.3,394.1 476.2,394.6 477.0,395.1 477.8,398.8 478.6,405.5 479.5,393.3 480.3,395.2 481.1,393.2 482.0,409.8 482.8,390.6 483.6,393.6 484.4,399.8 485.3,395.4 486.1,387.2 486.9,394.5 487.7,394.0 488.6,392.2 489.4,397.6 490.2,393.3 491.1,406.2 491.9,397.8 492.7,397.3 493.5,406.8 494.4,394.1 495.2,396.2 496.0,392.2 496.9,400.3 497.7,404.0 498.5,392.7 499.3,398.1 500.2,403.0 501.0,395.6 501.8,393.4 502.7,392.9 503.5,402.5 504.3,398.6 505.1,395.2 506.0,397.5 506.8,397.7 507.6,395.8 508.5,392.0 509.3,393.2 510.1,396.2 510.9,388.5 511.8,396.1 512.6,392.6 513.4,386.8 514.3,403.4 515.1,396.3 515.9,405.5 516.7,394.9 517.6,404.1 518.4,401.7 519.2,407.4 520.1,391.7 520.9,397.0 521.7,402.1 522.5,392.8 523.4,393.6 524.2,387.5 525.0,406.0 525.9,410.0 526.7,400.6 527.5,396.3 528.3,391.7 529.2,397.6 530.0,393.5 530.8,397.8 531.7,400.4 532.5,388.0 533.3,399.3 534.1,388.5 535.0,384.0 535.8,393.6 536.6,397.8 537.4,393.8 538.3,398.6 539.1,392.9 539.9,398.3 540.8,392.8 541.6,398.6 542.4,403.1 543.2,394.3 544.1,392.9 544.9,390.5 545.7,390.3 546.6,391.8 547.4,389.7 548.2,393.7 549.0,393.1 549.9,389.3 550.7,397.2 551.5,383.5 552.4,398.5 553.2,391.5 554.0,398.9 554.8,394.8 555.7,387.9 556.5,393.0 557.3,391.1 558.2,398.4 559.0,405.0 559.8,399.8 560.6,399.8 561.5,393.8 562.3,397.9 563.1,394.4 564.0,389.8 564.8,395.8 565.6,399.8 566.4,398.9 567.3,393.9 568.1,395.5 568.9,403.0 569.8,389.0 570.6,393.0 571.4,389.2 572.2,394.9 573.1,396.2 573.9,394.3 574.7,398.2 575.6,388.8 576.4,393.2 577.2,393.4 578.0,379.1 578.9,392.2 579.7,392.9 580.5,390.9 581.4,392.7 582.2,391.0 583.0,387.4 583.8,395.5 584.7,394.3 585.5,396.2 586.3,399.6 587.1,389.3 588.0,398.6 588.8,387.3 589.6,389.6 590.5,393.0 591.3,393.4 592.1,393.4 592.9,394.6 593.8,400.7 594.6,399.7 595.4,399.3 596.3,389.1 597.1,393.5 597.9,394.7 598.7,401.6 599.6,396.5 600.4,390.5 601.2,412.7 602.1,397.1 602.9,392.0 603.7,390.4 604.5,395.6 605.4,401.7 606.2,391.8 607.0,397.2 607.9,401.4 608.7,397.8 609.5,392.1 610.3,394.4 611.2,394.1 612.0,406.9 612.8,393.2 613.7,397.6 614.5,401.5 615.3,391.6 616.1,401.2 617.0,395.9 617.8,397.3 618.6,400.4 619.5,394.2 620.3,413.7 621.1,405.1 621.9,402.3 622.8,397.1 623.6,400.2 624.4,399.2 625.3,400.1 626.1,392.3 626.9,395.8 627.7,387.1 628.6,396.6 629.4,399.0 630.2,386.7 631.1,390.7 631.9,384.3 632.7,387.7 633.5,395.3 634.4,389.2 635.2,396.8 636.0,391.1 636.8,389.0 637.7,388.7 638.5,394.2 639.3,391.3 640.2,403.0 641.0,391.8 641.8,396.0 642.6,397.2 643.5,396.8 644.3,402.1 645.1,401.5 646.0,395.6 646.8,390.4 647.6,402.1 648.4,397.4 649.3,402.5 650.1,401.6 650.9,390.6 651.8,392.1 652.6,394.7 653.4,396.8 654.2,387.8 655.1,384.0 655.9,389.1 656.7,392.4 657.6,395.6 658.4,392.7 659.2,394.0 660.0,392.1 660.9,395.5 661.7,387.5 662.5,400.2 663.4,397.3 664.2,397.7 665.0,386.0 665.8,410.8 666.7,395.0 667.5,387.1 668.3,401.2 669.2,391.0 670.0,395.6 670.8,390.1 671.6,388.8 672.5,392.8 673.3,392.3 674.1,383.9 675.0,397.2 675.8,393.3 676.6,395.1 677.4,394.0 678.3,390.4 679.1,394.7 679.9,397.6 680.8,389.0 681.6,398.8 682.4,394.9 683.2,392.5 684.1,399.6 684.9,378.5 685.7,394.7 686.5,400.6 687.4,395.6 688.2,397.0 689.0,391.5 689.9,393.4 690.7,395.6 691.5,387.3 692.3,389.4 693.2,395.6 694.0,387.4 694.8,396.6 695.7,399.3 696.5,394.9 697.3,389.6 698.1,388.7 699.0,389.8 699.8,392.8 700.6,397.7 701.5,390.1 702.3,395.6 703.1,402.5 703.9,391.9 704.8,398.1 705.6,389.8 706.4,386.1 707.3,389.9 708.1,379.2 708.9,391.3 709.7,391.8 710.6,398.5 711.4,391.4 712.2,394.3 713.1,394.4 713.9,398.2 714.7,382.6 715.5,389.0 716.4,388.4 717.2,391.8 718.0,390.2 718.9,395.1 719.7,390.5 720.5,388.9 721.3,392.8 722.2,394.6 723.0,392.2 723.8,411.5 724.7,393.8 725.5,390.7 726.3,396.2 727.1,393.6 728.0,387.7 728.8,389.9 729.6,396.2 730.5,396.2 731.3,406.7 732.8,394.9 734.1,420.5 746.7,420.5 748.0,420.5 748.7,317.9" fill="none" stroke="#d95f02" stroke-width="1.1" stroke-linejoin="round" />
<polyline points="253.0,420.5 268.9,420.5 269.6,420.5 271.6,392.0 272.4,386.4 273.2,381.0 274.0,388.7 274.9,392.6 275.7,390.9 276.5,391.8 277.4,397.1 278.2,400.2 279.0,394.6 279.8,392.7 280.7,396.6 281.5,385.8 282.3,391.0 283.2,391.2 284.0,391.9 284.8,397.5 285.6,400.8 286.5,382.9 287.3,389.4 288.1,403.1 288.9,403.8 289.8,369.2 290.6,391.3 291.4,394.4 292.3,391.3 293.1,403.9 293.9,392.3 294.7,394.0 295.6,395.6 296.4,403.9 297.2,392.5 298.1,404.3 298.9,393.0 299.7,397.5 300.5,393.6 301.4,391.0 302.2,399.5 303.0,389.8 303.9,391.9 304.7,398.3 305.5,413.7 306.3,391.8 307.2,394.1 308.0,391.2 308.8,397.5 309.7,413.7 310.5,392.6 311.3,396.1 312.1,394.2 313.0,393.0 313.8,399.2 314.6,392.5 315.5,395.6 316.3,387.9 317.1,395.3 317.9,393.2 318.8,397.2 319.6,392.3 320.4,397.5 321.3,384.1 322.1,387.7 322.9,378.3 323.7,390.8 324.6,397.1 325.4,401.4 326.2,400.0 327.1,386.3 327.9,396.0 328.7,393.4 329.5,391.3 330.4,381.9 331.2,396.3 332.0,389.6 332.9,392.9 333.7,393.9 334.5,391.8 335.3,397.4 336.2,394.0 337.0,392.9 337.8,387.3 338.6,378.4 339.5,389.6 340.3,390.5 341.1,386.6 342.0,391.9 342.8,372.6 343.6,390.2 344.4,392.5 345.3,398.4 346.1,393.7 346.9,397.5 347.8,397.9 348.6,391.9 349.4,400.5 350.2,381.4 351.1,396.5 351.9,395.4 352.7,388.2 353.6,380.9 354.4,390.2 355.2,399.6 356.0,394.2 356.9,401.8 357.7,395.5 358.5,405.7 359.4,403.2 360.2,385.3 361.0,396.7 361.8,390.5 362.7,381.3 363.5,405.7 364.3,404.6 365.2,381.9 366.0,395.8 366.8,395.2 367.6,394.2 368.5,403.9 369.3,388.1 370.1,387.3 371.0,393.6 371.8,398.3 372.6,402.1 373.4,397.0 374.3,397.3 375.1,391.8 375.9,400.5 376.8,392.7 377.6,391.5 378.4,392.4 379.2,400.2 380.1,389.0 380.9,386.9 381.7,399.7 382.6,398.7 383.4,397.6 384.2,396.2 385.0,396.1 385.9,381.6 386.7,393.0 387.5,388.6 388.3,391.1 389.2,383.3 390.0,394.3 390.8,387.4 391.7,388.2 392.5,395.4 393.3,400.9 394.1,393.9 395.0,390.5 395.8,392.8 396.6,399.8 397.5,397.1 398.3,391.0 399.1,393.0 399.9,389.2 400.8,396.6 401.6,398.3 402.4,387.8 403.3,376.2 404.1,397.6 404.9,391.5 405.7,399.3 406.6,396.3 407.4,389.3 408.2,399.2 409.1,391.6 409.9,395.4 410.7,396.3 411.5,396.1 412.4,393.4 413.2,401.6 414.0,407.3 414.9,398.0 415.7,400.0 416.5,398.2 417.3,392.4 418.2,393.6 419.0,390.2 419.8,394.5 420.7,396.7 421.5,403.2 422.3,394.3 423.1,391.9 424.0,396.1 424.8,399.5 425.6,393.4 426.5,394.0 427.3,392.5 428.1,392.4 428.9,400.1 429.8,388.1 430.6,393.5 431.4,392.3 432.3,394.9 433.1,391.1 433.9,392.9 434.7,404.9 435.6,370.9 436.4,397.2 437.2,391.4 438.0,395.9 438.9,402.8 439.7,402.4 440.5,393.5 441.4,413.7 442.2,395.5 443.0,391.9 443.8,397.4 444.7,397.6 445.5,394.8 446.3,398.9 447.2,388.2 448.0,391.6 448.8,394.8 449.6,388.8 450.5,389.3 451.3,398.5 452.1,401.7 453.0,410.4 453.8,394.1 454.6,402.7 455.4,396.7 456.3,395.7 457.1,395.7 457.9,402.9 458.8,398.7 459.6,401.3 460.4,396.0 461.2,391.9 462.1,392.6 462.9,395.1 463.7,391.1 464.6,391.8 465.4,395.7 466.2,387.4 467.0,394.0 467.9,393.5 468.7,405.0 469.5,389.2 470.4,386.8 471.2,390.5 472.0,386.8 472.8,396.6 473.7,390.1 474.5,394.0 475.3,381.2 476.2,413.7 477.0,395.5 477.8,396.1 478.6,399.4 479.5,393.7 480.3,413.7 481.1,384.9 482.0,397.0 482.8,399.0 483.6,390.4 484.4,393.8 485.3,401.6 486.1,391.5 486.9,392.7 487.7,390.0 488.6,400.0 489.4,410.7 490.2,390.9 491.1,397.1 491.9,389.6 492.7,393.2 493.5,399.4 494.4,390.5 495.2,362.4 496.0,394.1 496.9,399.9 497.7,403.9 498.5,395.9 499.3,396.2 500.2,400.4 501.0,403.4 501.8,401.3 502.7,404.0 503.5,395.3 504.3,400.2 505.1,396.5 506.0,395.5 506.8,393.8 507.6,391.6 508.5,385.2 509.3,407.2 510.1,390.3 510.9,397.9 511.8,389.7 512.6,393.0 513.4,402.4 514.3,403.7 515.1,393.5 515.9,400.6 516.7,408.8 517.6,403.2 518.4,398.1 519.2,396.7 520.1,409.8 520.9,394.9 521.7,402.8 522.5,393.1 523.4,401.1 524.2,393.4 525.0,402.5 525.9,393.2 526.7,401.0 527.5,399.8 528.3,399.3 529.2,396.4 530.0,397.1 530.8,390.2 531.7,398.8 532.5,406.1 533.3,399.8 534.1,395.4 535.0,400.1 535.8,398.7 536.6,401.6 537.4,395.9 538.3,395.1 539.1,391.0 539.9,396.9 540.8,413.3 541.6,395.3 542.4,393.8 543.2,395.2 544.1,396.6 544.9,401.0 545.7,402.2 546.6,391.2 547.4,406.6 548.2,396.8 549.0,404.4 549.9,395.7 550.7,401.2 551.5,365.8 552.4,392.7 553.2,391.8 554.0,392.7 554.8,371.8 555.7,385.9 556.5,398.6 557.3,395.8 558.2,387.5 559.0,395.1 559.8,411.2 560.6,395.9 561.5,397.5 562.3,396.6 563.1,393.5 564.0,393.2 564.8,393.5 565.6,400.4 566.4,387.4 567.3,403.7 568.1,394.8 568.9,386.4 569.8,403.3 570.6,386.9 571.4,396.6 572.2,393.1 573.1,398.6 573.9,395.0 574.7,407.5 575.6,385.9 576.4,397.6 577.2,399.8 578.0,402.7 578.9,396.3 579.7,387.2 580.5,394.0 581.4,388.4 582.2,401.9 583.0,392.3 583.8,397.4 584.7,383.8 585.5,388.8 586.3,384.2 587.1,388.4 588.0,395.1 588.8,398.3 589.6,398.7 590.5,400.3 591.3,394.6 592.1,387.6 592.9,405.1 593.8,392.1 594.6,394.7 595.4,398.5 596.3,396.3 597.1,393.5 597.9,388.6 598.7,395.6 599.6,398.8 600.4,395.1 601.2,402.2 602.1,391.7 602.9,401.4 603.7,397.5 604.5,394.9 605.4,391.9 606.2,391.0 607.0,398.7 607.9,399.9 608.7,390.6 609.5,398.8 610.3,392.6 611.2,395.4 612.0,398.1 612.8,391.9 613.7,397.5 614.5,386.0 615.3,397.9 616.1,394.2 617.0,402.7 617.8,380.2 618.6,378.7 619.5,390.1 620.3,403.8 621.1,390.2 621.9,411.6 622.8,394.2 623.6,395.5 624.4,397.6 625.3,392.1 626.1,392.8 626.9,393.2 627.7,394.9 628.6,394.6 629.4,404.6 630.2,392.1 631.1,383.5 631.9,390.3 632.7,391.0 633.5,399.3 634.4,390.1 635.2,401.9 636.0,397.2 636.8,395.5 637.7,397.0 638.5,384.7 639.3,376.5 640.2,392.3 641.0,394.1 641.8,396.7 642.6,401.7 643.5,400.3 644.3,389.4 645.1,393.6 646.0,394.5 646.8,393.5 647.6,392.4 648.4,396.6 649.3,398.0 650.1,396.2 650.9,396.8 651.8,385.3 652.6,394.0 653.4,397.0 654.2,397.8 655.1,396.0 655.9,394.2 656.7,389.9 657.6,391.6 658.4,388.3 659.2,394.7 660.0,395.5 660.9,395.9 661.7,388.6 662.5,389.3 663.4,394.4 664.2,393.1 665.0,396.7 665.8,400.0 666.7,395.6 667.5,403.9 668.3,397.2 669.2,401.9 670.0,389.6 670.8,388.3 671.6,396.4 672.5,393.8 673.3,390.1 674.1,396.9 675.0,398.2 675.8,390.5 676.6,391.0 677.4,392.6 678.3,398.9 679.1,391.5 679.9,399.7 680.8,405.1 681.6,387.7 682.4,388.9 683.2,392.3 684.1,392.4 684.9,400.3 685.7,395.8 686.5,400.9 687.4,402.0 688.2,410.4 689.0,388.6 689.9,404.8 690.7,395.4 691.5,399.1 692.3,397.6 693.2,392.9 694.0,396.6 694.8,381.0 695.7,396.2 696.5,391.3 697.3,393.7 698.1,388.1 699.0,400.4 699.8,385.0 700.6,400.5 701.5,395.0 702.3,394.1 703.1,391.9 703.9,390.8 704.8,385.2 705.6,398.3 706.4,389.9 707.3,398.7 708.1,382.8 708.9,384.0 709.7,395.5 710.6,409.7 711.4,391.9 712.2,387.0 713.1,403.1 713.9,384.3 714.7,391.2 715.5,402.8 716.4,391.9 717.2,385.5 718.0,385.6 718.9,394.5 719.7,387.5 720.5,395.2 721.3,395.2 722.2,403.4 723.0,393.3 723.8,396.4 724.7,388.9 725.5,389.2 726.3,405.4 727.1,397.7 728.0,386.9 728.8,385.0 729.6,391.8 730.5,389.9 731.3,389.9 732.8,394.9 734.1,420.5 746.7,420.5 748.0,420.5 748.7,420.5" fill="none" stroke="#7570b3" stroke-width="1.1" stroke-linejoin="round" />
<polyline points="253.0,423.9 268.9,423.9 270.2,420.5 271.6,408.8 272.4,402.7 273.2,348.2 274.0,414.6 274.9,397.2 275.7,403.7 276.5,403.6 277.4,404.6 278.2,404.5 279.0,389.1 279.8,404.7 280.7,346.1 281.5,396.4 282.3,407.6 283.2,407.3 284.0,391.7 284.8,398.6 285.6,396.7 286.5,404.6 287.3,406.7 288.1,388.1 288.9,398.4 289.8,375.3 290.6,411.7 291.4,398.0 292.3,403.9 293.1,383.5 293.9,411.0 294.7,407.9 295.6,409.9 296.4,370.9 297.2,400.6 298.1,411.7 298.9,404.9 299.7,410.3 300.5,401.0 301.4,398.8 302.2,410.2 303.0,407.8 303.9,415.0 304.7,391.4 305.5,401.8 306.3,402.4 307.2,400.8 308.0,412.6 308.8,419.5 309.7,424.8 310.5,396.0 311.3,395.3 312.1,406.8 313.0,402.2 313.8,384.0 314.6,396.9 315.5,401.8 316.3,389.7 317.1,403.4 317.9,400.3 318.8,395.6 319.6,377.8 320.4,397.6 321.3,398.2 322.1,395.5 322.9,393.4 323.7,398.1 324.6,397.4 325.4,394.8 326.2,410.2 327.1,409.0 327.9,399.6 328.7,402.9 329.5,399.1 330.4,390.7 331.2,397.8 332.0,407.0 332.9,409.7 333.7,401.8 334.5,414.2 335.3,401.5 336.2,376.0 337.0,404.1 337.8,384.1 338.6,403.7 339.5,405.4 340.3,395.9 341.1,405.1 342.0,407.8 342.8,398.0 343.6,401.0 344.4,387.2 345.3,407.8 346.1,386.2 346.9,392.3 347.8,384.9 348.6,405.0 349.4,401.9 350.2,393.5 351.1,401.2 351.9,410.8 352.7,360.7 353.6,392.5 354.4,395.9 355.2,396.6 356.0,423.5 356.9,410.8 357.7,396.4 358.5,406.7 359.4,410.6 360.2,417.0 361.0,396.3 361.8,398.4 362.7,394.7 363.5,388.9 364.3,407.1 365.2,397.4 366.0,402.0 366.8,363.6 367.6,395.5 368.5,398.9 369.3,392.8 370.1,383.7 371.0,396.3 371.8,394.7 372.6,394.2 373.4,418.9 374.3,407.7 375.1,402.7 375.9,381.6 376.8,412.1 377.6,383.8 378.4,405.3 379.2,402.1 380.1,403.1 380.9,390.7 381.7,404.1 382.6,411.0 383.4,382.8 384.2,400.7 385.0,409.8 385.9,355.5 386.7,402.4 387.5,397.2 388.3,388.9 389.2,406.8 390.0,410.2 390.8,424.0 391.7,405.6 392.5,385.1 393.3,397.4 394.1,410.7 395.0,392.9 395.8,397.3 396.6,389.0 397.5,407.3 398.3,412.9 399.1,372.6 399.9,422.4 400.8,403.7 401.6,403.5 402.4,418.9 403.3,378.0 404.1,412.1 404.9,398.0 405.7,394.7 406.6,409.2 407.4,409.8 408.2,398.6 409.1,407.1 409.9,398.0 410.7,402.3 411.5,399.8 412.4,364.1 413.2,395.8 414.0,392.8 414.9,396.4 415.7,418.0 416.5,402.2 417.3,392.0 418.2,400.4 419.0,395.9 419.8,396.6 420.7,399.2 421.5,408.0 422.3,394.0 423.1,390.6 424.0,387.4 424.8,390.8 425.6,382.4 426.5,407.1 427.3,395.5 428.1,404.1 428.9,407.8 429.8,390.8 430.6,385.4 431.4,397.4 432.3,398.1 433.1,391.3 433.9,402.9 434.7,386.3 435.6,403.9 436.4,415.4 437.2,400.1 438.0,391.4 438.9,399.9 439.7,390.3 440.5,409.9 441.4,402.9 442.2,404.7 443.0,391.6 443.8,385.7 444.7,406.7 445.5,399.6 446.3,360.7 447.2,389.8 448.0,404.3 448.8,401.0 449.6,397.8 450.5,406.0 451.3,404.9 452.1,402.7 453.0,402.0 453.8,372.1 454.6,407.4 455.4,404.0 456.3,415.5 457.1,407.9 457.9,401.9 458.8,391.2 459.6,399.2 460.4,390.2 461.2,394.4 462.1,424.8 462.9,407.7 463.7,405.7 464.6,413.2 465.4,391.8 466.2,417.5 467.0,412.0 467.9,398.2 468.7,401.1 469.5,395.7 470.4,408.8 471.2,408.4 472.0,404.1 472.8,401.1 473.7,408.1 474.5,398.0 475.3,408.0 476.2,398.8 477.0,406.0 477.8,401.9 478.6,395.3 479.5,388.3 480.3,400.2 481.1,401.2 482.0,369.2 482.8,405.1 483.6,388.4 484.4,404.4 485.3,406.7 486.1,395.6 486.9,395.4 487.7,403.6 488.6,389.4 489.4,378.4 490.2,403.0 491.1,384.2 491.9,397.9 492.7,395.7 493.5,400.3 494.4,386.1 495.2,388.6 496.0,415.7 496.9,398.1 497.7,416.0 498.5,402.7 499.3,403.0 500.2,401.4 501.0,390.8 501.8,393.0 502.7,397.6 503.5,398.7 504.3,401.7 505.1,402.3 506.0,403.0 506.8,396.4 507.6,405.7 508.5,403.8 509.3,397.4 510.1,400.2 510.9,393.9 511.8,396.3 512.6,391.0 513.4,404.4 514.3,407.7 515.1,399.2 515.9,404.1 516.7,403.8 517.6,375.3 518.4,348.7 519.2,390.8 520.1,396.6 520.9,409.5 521.7,401.8 522.5,401.9 523.4,398.5 524.2,396.8 525.0,375.9 525.9,416.8 526.7,401.5 527.5,403.5 528.3,418.0 529.2,394.3 530.0,384.9 530.8,398.2 531.7,398.0 532.5,411.3 533.3,403.4 534.1,401.9 535.0,421.7 535.8,403.1 536.6,399.1 537.4,408.2 538.3,409.8 539.1,402.8 539.9,396.7 540.8,392.2 541.6,386.5 542.4,410.8 543.2,389.4 544.1,400.3 544.9,395.9 545.7,411.8 546.6,406.1 547.4,388.5 548.2,399.2 549.0,396.8 549.9,396.9 550.7,401.0 551.5,395.3 552.4,394.2 553.2,394.0 554.0,399.9 554.8,390.6 555.7,405.7 556.5,400.3 557.3,393.1 558.2,372.6 559.0,392.9 559.8,392.5 560.6,385.2 561.5,388.7 562.3,394.0 563.1,360.8 564.0,406.9 564.8,408.8 565.6,402.0 566.4,406.7 567.3,395.4 568.1,397.9 568.9,406.2 569.8,400.2 570.6,424.8 571.4,396.3 572.2,386.3 573.1,411.5 573.9,393.4 574.7,424.8 575.6,399.2 576.4,402.8 577.2,396.5 578.0,399.7 578.9,398.9 579.7,400.7 580.5,407.1 581.4,366.1 582.2,400.9 583.0,423.2 583.8,400.9 584.7,369.2 585.5,395.0 586.3,395.8 587.1,382.8 588.0,391.8 588.8,396.4 589.6,391.9 590.5,404.0 591.3,402.5 592.1,402.4 592.9,396.6 593.8,388.5 594.6,404.5 595.4,409.3 596.3,400.3 597.1,387.4 597.9,397.2 598.7,421.9 599.6,396.9 600.4,386.4 601.2,403.9 602.1,408.5 602.9,413.0 603.7,394.5 604.5,424.8 605.4,402.7 606.2,399.4 607.0,398.9 607.9,403.7 608.7,393.1 609.5,403.1 610.3,398.1 611.2,402.3 612.0,399.9 612.8,394.4 613.7,424.8 614.5,407.4 615.3,407.4 616.1,409.0 617.0,411.1 617.8,395.9 618.6,408.4 619.5,400.9 620.3,404.3 621.1,402.6 621.9,410.2 622.8,393.6 623.6,401.7 624.4,399.6 625.3,395.6 626.1,396.6 626.9,387.5 627.7,372.6 628.6,398.9 629.4,421.2 630.2,399.8 631.1,375.4 631.9,394.8 632.7,392.8 633.5,418.8 634.4,384.0 635.2,417.3 636.0,386.8 636.8,390.0 637.7,396.3 638.5,402.6 639.3,396.5 640.2,393.6 641.0,391.1 641.8,391.3 642.6,407.7 643.5,380.2 644.3,399.1 645.1,393.5 646.0,406.4 646.8,402.4 647.6,406.9 648.4,402.7 649.3,416.3 650.1,394.6 650.9,369.2 651.8,394.2 652.6,397.5 653.4,400.7 654.2,406.6 655.1,401.8 655.9,391.8 656.7,404.2 657.6,382.6 658.4,404.9 659.2,393.9 660.0,412.0 660.9,407.5 661.7,399.3 662.5,379.9 663.4,397.3 664.2,395.7 665.0,393.7 665.8,403.8 666.7,390.1 667.5,393.5 668.3,414.6 669.2,363.3 670.0,408.7 670.8,390.2 671.6,393.1 672.5,407.3 673.3,406.1 674.1,395.0 675.0,395.4 675.8,383.8 676.6,403.1 677.4,409.1 678.3,395.1 679.1,396.4 679.9,396.0 680.8,413.5 681.6,401.2 682.4,391.8 683.2,407.0 684.1,381.4 684.9,406.8 685.7,398.2 686.5,398.2 687.4,402.3 688.2,399.3 689.0,384.0 689.9,399.8 690.7,394.6 691.5,403.9 692.3,400.9 693.2,400.5 694.0,369.2 694.8,409.9 695.7,406.9 696.5,394.1 697.3,422.3 698.1,391.0 699.0,377.0 699.8,383.9 700.6,412.1 701.5,403.9 702.3,393.6 703.1,394.1 703.9,407.6 704.8,382.6 705.6,398.8 706.4,406.2 707.3,387.7 708.1,388.8 708.9,382.4 709.7,401.6 710.6,398.6 711.4,386.3 712.2,411.8 713.1,406.0 713.9,402.4 714.7,405.2 715.5,424.8 716.4,401.7 717.2,403.5 718.0,409.7 718.9,391.3 719.7,398.5 720.5,377.8 721.3,415.7 722.2,393.2 723.0,424.8 723.8,419.4 724.7,393.6 725.5,381.8 726.3,394.6 727.1,403.7 728.0,421.2 728.8,402.1 729.6,409.2 730.5,397.4 731.3,403.7 732.1,411.9 734.1,423.9 748.0,423.9 748.7,423.9" fill="none" stroke="#e7298a" stroke-width="1.1" stroke-linejoin="round" />
<polyline points="253.0,420.5 268.2,420.5 272.2,398.3 272.4,398.3 273.2,398.3 274.0,398.3 274.9,397.9 275.7,397.8 276.5,397.6 277.4,397.6 278.2,398.5 279.0,398.1 279.8,397.7 280.7,398.2 281.5,398.0 282.3,397.4 283.2,397.7 284.0,398.3 284.8,398.4 285.6,397.9 286.5,396.8 287.3,397.1 288.1,396.8 288.9,396.4 289.8,396.8 290.6,397.0 291.4,398.0 292.3,398.5 293.1,398.8 293.9,399.7 294.7,400.1 295.6,399.8 296.4,399.8 297.2,399.6 298.1,400.2 298.9,399.5 299.7,399.5 300.5,400.5 301.4,400.7 302.2,399.9 303.0,399.2 303.9,399.5 304.7,399.4 305.5,398.5 306.3,398.9 307.2,400.3 308.0,400.3 308.8,400.0 309.7,399.7 310.5,400.0 311.3,399.8 312.1,399.0 313.0,399.1 313.8,399.2 314.6,399.3 315.5,399.6 316.3,398.7 317.1,399.2 317.9,399.0 318.8,398.4 319.6,397.3 320.4,397.1 321.3,396.8 322.1,396.6 322.9,396.6 323.7,397.2 324.6,398.1 325.4,398.2 326.2,398.5 327.1,398.9 327.9,397.3 328.7,397.0 329.5,396.2 330.4,396.0 331.2,396.0 332.0,395.6 332.9,397.2 333.7,397.1 334.5,397.0 335.3,396.5 336.2,396.6 337.0,396.5 337.8,395.8 338.6,396.2 339.5,397.0 340.3,397.3 341.1,397.5 342.0,397.5 342.8,397.8 343.6,398.0 344.4,397.9 345.3,397.9 346.1,396.6 346.9,398.0 347.8,398.1 348.6,398.2 349.4,398.3 350.2,398.8 351.1,399.0 351.9,397.8 352.7,397.2 353.6,395.8 354.4,396.5 355.2,396.7 356.0,397.5 356.9,397.9 357.7,398.7 358.5,399.7 359.4,399.4 360.2,398.2 361.0,398.2 361.8,398.3 362.7,398.1 363.5,398.2 364.3,397.9 365.2,398.1 366.0,398.4 366.8,398.8 367.6,399.2 368.5,399.1 369.3,398.2 370.1,398.3 371.0,398.4 371.8,398.4 372.6,399.4 373.4,399.6 374.3,400.2 375.1,400.6 375.9,400.2 376.8,400.1 377.6,399.1 378.4,398.5 379.2,399.2 380.1,398.5 380.9,398.7 381.7,399.0 382.6,399.6 383.4,398.9 384.2,399.3 385.0,399.3 385.9,398.8 386.7,398.0 387.5,397.5 388.3,397.2 389.2,396.0 390.0,396.5 390.8,397.4 391.7,397.8 392.5,397.9 393.3,398.5 394.1,398.2 395.0,397.2 395.8,397.8 396.6,397.8 397.5,398.0 398.3,397.7 399.1,398.3 399.9,398.4 400.8,397.2 401.6,396.7 402.4,397.2 403.3,397.7 404.1,397.9 404.9,398.5 405.7,399.1 406.6,400.1 407.4,399.7 408.2,399.4 409.1,398.7 409.9,398.0 410.7,398.3 411.5,398.7 412.4,399.3 413.2,399.7 414.0,399.4 414.9,399.3 415.7,399.1 416.5,399.1 417.3,398.8 418.2,398.4 419.0,398.2 419.8,398.7 420.7,398.7 421.5,398.5 422.3,398.2 423.1,398.1 424.0,398.7 424.8,398.6 425.6,398.5 426.5,398.5 427.3,399.2 428.1,399.7 428.9,398.8 429.8,398.5 430.6,398.7 431.4,399.4 432.3,399.4 433.1,399.4 433.9,400.4 434.7,400.8 435.6,401.2 436.4,400.5 437.2,399.7 438.0,399.8 438.9,398.9 439.7,398.5 440.5,397.7 441.4,398.1 442.2,398.7 443.0,399.0 443.8,399.0 444.7,399.3 445.5,399.7 446.3,399.1 447.2,398.8 448.0,398.1 448.8,398.1 449.6,398.4 450.5,398.4 451.3,398.8 452.1,399.4 453.0,399.5 453.8,399.7 454.6,398.7 455.4,398.8 456.3,398.9 457.1,398.4 457.9,398.7 458.8,398.7 459.6,399.7 460.4,399.9 461.2,399.8 462.1,400.1 462.9,399.9 463.7,399.6 464.6,398.8 465.4,398.0 466.2,398.3 467.0,398.5 467.9,397.3 468.7,396.6 469.5,397.7 470.4,397.3 471.2,397.3 472.0,396.4 472.8,397.7 473.7,398.3 474.5,397.8 475.3,397.8 476.2,397.3 477.0,397.7 477.8,398.1 478.6,398.3 479.5,398.6 480.3,398.4 481.1,398.9 482.0,399.8 482.8,398.7 483.6,399.3 484.4,398.7 485.3,399.5 486.1,399.2 486.9,398.9 487.7,398.6 488.6,398.3 489.4,398.3 490.2,398.1 491.1,397.7 491.9,396.9 492.7,397.2 493.5,397.7 494.4,397.5 495.2,397.6 496.0,398.8 496.9,398.7 497.7,399.2 498.5,399.5 499.3,399.4 500.2,399.4 501.0,399.6 501.8,399.9 502.7,399.4 503.5,399.7 504.3,399.6 505.1,399.4 506.0,398.0 506.8,398.1 507.6,398.4 508.5,397.2 509.3,397.2 510.1,397.3 510.9,398.4 511.8,398.4 512.6,397.9 513.4,400.1 514.3,400.7 515.1,400.8 515.9,401.3 516.7,400.9 517.6,401.5 518.4,401.4 519.2,400.8 520.1,401.2 520.9,400.2 521.7,400.3 522.5,400.7 523.4,400.5 524.2,400.2 525.0,400.0 525.9,399.9 526.7,399.0 527.5,398.7 528.3,398.6 529.2,398.7 530.0,399.0 530.8,398.4 531.7,399.7 532.5,399.0 533.3,398.5 534.1,399.1 535.0,398.7 535.8,399.0 536.6,398.5 537.4,398.7 538.3,398.0 539.1,398.4 539.9,398.6 540.8,398.4 541.6,398.5 542.4,399.2 543.2,399.3 544.1,398.1 544.9,398.1 545.7,397.8 546.6,398.0 547.4,397.9 548.2,398.0 549.0,398.0 549.9,397.9 550.7,397.9 551.5,397.5 552.4,397.2 553.2,396.6 554.0,396.7 554.8,396.9 555.7,397.0 556.5,397.7 557.3,398.1 558.2,399.5 559.0,398.8 559.8,397.8 560.6,398.2 561.5,398.0 562.3,397.4 563.1,395.9 564.0,396.1 564.8,396.6 565.6,396.3 566.4,397.2 567.3,397.3 568.1,397.7 568.9,398.3 569.8,398.3 570.6,398.9 571.4,397.6 572.2,397.6 573.1,397.4 573.9,396.9 574.7,396.5 575.6,396.5 576.4,397.1 577.2,396.3 578.0,396.3 578.9,396.6 579.7,396.6 580.5,396.3 581.4,396.7 582.2,397.0 583.0,397.8 583.8,397.2 584.7,397.2 585.5,396.9 586.3,396.6 587.1,397.3 588.0,397.0 588.8,397.4 589.6,397.7 590.5,398.4 591.3,398.5 592.1,398.6 592.9,399.0 593.8,399.0 594.6,399.1 595.4,399.4 596.3,399.5 597.1,399.1 597.9,398.3 598.7,398.4 599.6,399.4 600.4,399.3 601.2,399.6 602.1,399.7 602.9,400.2 603.7,399.7 604.5,398.8 605.4,398.7 606.2,398.8 607.0,400.2 607.9,400.6 608.7,400.4 609.5,400.3 610.3,400.3 611.2,400.1 612.0,399.7 612.8,399.8 613.7,399.0 614.5,399.1 615.3,399.0 616.1,399.6 617.0,399.2 617.8,399.4 618.6,400.0 619.5,399.2 620.3,398.3 621.1,398.0 621.9,398.3 622.8,398.3 623.6,397.8 624.4,397.8 625.3,399.2 626.1,398.3 626.9,397.8 627.7,397.6 628.6,397.2 629.4,397.2 630.2,396.4 631.1,396.8 631.9,397.3 632.7,396.4 633.5,397.3 634.4,396.2 635.2,395.9 636.0,395.3 636.8,395.7 637.7,396.2 638.5,396.0 639.3,397.0 640.2,398.0 641.0,398.3 641.8,397.7 642.6,397.8 643.5,397.3 644.3,397.2 645.1,397.2 646.0,397.1 646.8,397.0 647.6,396.2 648.4,397.6 649.3,396.8 650.1,396.2 650.9,396.3 651.8,397.3 652.6,398.0 653.4,397.6 654.2,397.9 655.1,397.7 655.9,396.7 656.7,395.9 657.6,396.1 658.4,396.4 659.2,396.7 660.0,397.4 660.9,397.9 661.7,398.6 662.5,397.9 663.4,397.3 664.2,397.4 665.0,397.2 665.8,398.1 666.7,398.3 667.5,398.9 668.3,399.1 669.2,399.3 670.0,398.0 670.8,397.4 671.6,396.4 672.5,396.4 673.3,396.8 674.1,396.6 675.0,397.6 675.8,397.3 676.6,396.7 677.4,396.4 678.3,396.1 679.1,396.8 679.9,395.9 680.8,396.8 681.6,397.0 682.4,397.3 683.2,397.6 684.1,397.5 684.9,398.6 685.7,398.1 686.5,397.5 687.4,398.3 688.2,397.2 689.0,396.6 689.9,395.6 690.7,395.3 691.5,396.1 692.3,395.9 693.2,396.2 694.0,396.6 694.8,396.5 695.7,396.6 696.5,396.3 697.3,395.7 698.1,395.7 699.0,395.9 699.8,396.5 700.6,396.6 701.5,396.3 702.3,396.4 703.1,396.0 703.9,394.5 704.8,394.3 705.6,394.7 706.4,395.6 707.3,395.7 708.1,395.7 708.9,397.2 709.7,397.3 710.6,397.2 711.4,395.5 712.2,395.2 713.1,395.1 713.9,395.2 714.7,395.2 715.5,394.9 716.4,395.7 717.2,395.8 718.0,395.6 718.9,395.0 719.7,395.5 720.5,396.0 721.3,396.4 722.2,396.0 723.0,396.3 723.8,397.3 724.7,397.0 725.5,396.8 726.3,397.6 727.1,397.4 728.0,397.6 728.8,396.4 729.6,396.2 730.5,396.6 731.3,396.6 736.1,420.5 745.4,420.5 748.0,415.4 749.3,413.7" fill="none" stroke="#000" stroke-width="2.4" stroke-linejoin="round" />
</g>
<text x="252.1" y="221.3" font-size="9.3" fill="#000" font-family="Liberation Serif" textLength="3.95" lengthAdjust="spacingAndGlyphs" text-anchor="middle" stroke="#000" stroke-width="0.12" >0</text>
<text x="252.1" y="329.3" font-size="9.3" fill="#000" font-family="Liberation Serif" textLength="3.95" lengthAdjust="spacingAndGlyphs" text-anchor="middle" stroke="#000" stroke-width="0.12" >0</text>
<text x="252.1" y="437.6" font-size="9.3" fill="#000" font-family="Liberation Serif" textLength="3.95" lengthAdjust="spacingAndGlyphs" text-anchor="middle" stroke="#000" stroke-width="0.12" >0</text>
<text x="318.4" y="221.3" font-size="9.3" fill="#000" font-family="Liberation Serif" textLength="7.90" lengthAdjust="spacingAndGlyphs" text-anchor="middle" stroke="#000" stroke-width="0.12" >20</text>
<text x="318.4" y="329.3" font-size="9.3" fill="#000" font-family="Liberation Serif" textLength="7.90" lengthAdjust="spacingAndGlyphs" text-anchor="middle" stroke="#000" stroke-width="0.12" >20</text>
<text x="318.4" y="437.6" font-size="9.3" fill="#000" font-family="Liberation Serif" textLength="7.90" lengthAdjust="spacingAndGlyphs" text-anchor="middle" stroke="#000" stroke-width="0.12" >20</text>
<text x="384.6" y="221.3" font-size="9.3" fill="#000" font-family="Liberation Serif" textLength="7.90" lengthAdjust="spacingAndGlyphs" text-anchor="middle" stroke="#000" stroke-width="0.12" >40</text>
<text x="384.6" y="329.3" font-size="9.3" fill="#000" font-family="Liberation Serif" textLength="7.90" lengthAdjust="spacingAndGlyphs" text-anchor="middle" stroke="#000" stroke-width="0.12" >40</text>
<text x="384.6" y="437.6" font-size="9.3" fill="#000" font-family="Liberation Serif" textLength="7.90" lengthAdjust="spacingAndGlyphs" text-anchor="middle" stroke="#000" stroke-width="0.12" >40</text>
<text x="450.9" y="221.3" font-size="9.3" fill="#000" font-family="Liberation Serif" textLength="7.90" lengthAdjust="spacingAndGlyphs" text-anchor="middle" stroke="#000" stroke-width="0.12" >60</text>
<text x="450.9" y="329.3" font-size="9.3" fill="#000" font-family="Liberation Serif" textLength="7.90" lengthAdjust="spacingAndGlyphs" text-anchor="middle" stroke="#000" stroke-width="0.12" >60</text>
<text x="450.9" y="437.6" font-size="9.3" fill="#000" font-family="Liberation Serif" textLength="7.90" lengthAdjust="spacingAndGlyphs" text-anchor="middle" stroke="#000" stroke-width="0.12" >60</text>
<text x="517.2" y="221.3" font-size="9.3" fill="#000" font-family="Liberation Serif" textLength="7.90" lengthAdjust="spacingAndGlyphs" text-anchor="middle" stroke="#000" stroke-width="0.12" >80</text>
<text x="517.2" y="329.3" font-size="9.3" fill="#000" font-family="Liberation Serif" textLength="7.90" lengthAdjust="spacingAndGlyphs" text-anchor="middle" stroke="#000" stroke-width="0.12" >80</text>
<text x="517.2" y="437.6" font-size="9.3" fill="#000" font-family="Liberation Serif" textLength="7.90" lengthAdjust="spacingAndGlyphs" text-anchor="middle" stroke="#000" stroke-width="0.12" >80</text>
<text x="583.4" y="221.3" font-size="9.3" fill="#000" font-family="Liberation Serif" textLength="11.85" lengthAdjust="spacingAndGlyphs" text-anchor="middle" stroke="#000" stroke-width="0.12" >100</text>
<text x="583.4" y="329.3" font-size="9.3" fill="#000" font-family="Liberation Serif" textLength="11.85" lengthAdjust="spacingAndGlyphs" text-anchor="middle" stroke="#000" stroke-width="0.12" >100</text>
<text x="583.4" y="437.6" font-size="9.3" fill="#000" font-family="Liberation Serif" textLength="11.85" lengthAdjust="spacingAndGlyphs" text-anchor="middle" stroke="#000" stroke-width="0.12" >100</text>
<text x="649.7" y="221.3" font-size="9.3" fill="#000" font-family="Liberation Serif" textLength="11.85" lengthAdjust="spacingAndGlyphs" text-anchor="middle" stroke="#000" stroke-width="0.12" >120</text>
<text x="649.7" y="329.3" font-size="9.3" fill="#000" font-family="Liberation Serif" textLength="11.85" lengthAdjust="spacingAndGlyphs" text-anchor="middle" stroke="#000" stroke-width="0.12" >120</text>
<text x="649.7" y="437.6" font-size="9.3" fill="#000" font-family="Liberation Serif" textLength="11.85" lengthAdjust="spacingAndGlyphs" text-anchor="middle" stroke="#000" stroke-width="0.12" >120</text>
<text x="716.0" y="221.3" font-size="9.3" fill="#000" font-family="Liberation Serif" textLength="11.85" lengthAdjust="spacingAndGlyphs" text-anchor="middle" stroke="#000" stroke-width="0.12" >140</text>
<text x="716.0" y="329.3" font-size="9.3" fill="#000" font-family="Liberation Serif" textLength="11.85" lengthAdjust="spacingAndGlyphs" text-anchor="middle" stroke="#000" stroke-width="0.12" >140</text>
<text x="716.0" y="437.6" font-size="9.3" fill="#000" font-family="Liberation Serif" textLength="11.85" lengthAdjust="spacingAndGlyphs" text-anchor="middle" stroke="#000" stroke-width="0.12" >140</text>
<text x="248.8" y="143.6" font-size="9.3" fill="#000" font-family="Liberation Serif" textLength="3.95" lengthAdjust="spacingAndGlyphs" text-anchor="end" stroke="#000" stroke-width="0.12" >3</text>
<text x="248.8" y="183.0" font-size="9.3" fill="#000" font-family="Liberation Serif" textLength="3.95" lengthAdjust="spacingAndGlyphs" text-anchor="end" stroke="#000" stroke-width="0.12" >2</text>
<text x="248.8" y="249.9" font-size="9.3" fill="#000" font-family="Liberation Serif" textLength="3.95" lengthAdjust="spacingAndGlyphs" text-anchor="end" stroke="#000" stroke-width="0.12" >3</text>
<text x="248.8" y="291.0" font-size="9.3" fill="#000" font-family="Liberation Serif" textLength="3.95" lengthAdjust="spacingAndGlyphs" text-anchor="end" stroke="#000" stroke-width="0.12" >2</text>
<text x="248.0" y="356.6" font-size="9.3" fill="#000" font-family="Liberation Serif" textLength="7.90" lengthAdjust="spacingAndGlyphs" text-anchor="end" stroke="#000" stroke-width="0.12" >54</text>
<text x="248.0" y="390.2" font-size="9.3" fill="#000" font-family="Liberation Serif" textLength="7.90" lengthAdjust="spacingAndGlyphs" text-anchor="end" stroke="#000" stroke-width="0.12" >52</text>
<text x="248.0" y="424.5" font-size="9.3" fill="#000" font-family="Liberation Serif" textLength="7.90" lengthAdjust="spacingAndGlyphs" text-anchor="end" stroke="#000" stroke-width="0.12" >50</text>
<text transform="translate(237.2 165.5) rotate(-90)" font-family="Liberation Serif" font-size="10.5" text-anchor="middle" fill="#000" textLength="31.5" lengthAdjust="spacingAndGlyphs">Mbits/s</text>
<text transform="translate(237.2 273.4) rotate(-90)" font-family="Liberation Serif" font-size="10.5" text-anchor="middle" fill="#000" textLength="31.5" lengthAdjust="spacingAndGlyphs">Mbits/s</text>
<text transform="translate(230.8 381.3) rotate(-90)" font-family="Liberation Serif" font-size="10.5" text-anchor="middle" fill="#000" textLength="52.6" lengthAdjust="spacingAndGlyphs">Latency (ms)</text>
<text x="501" y="451.8" font-size="10" fill="#000" font-family="Liberation Serif" textLength="33.3" lengthAdjust="spacingAndGlyphs" text-anchor="middle" stroke="#000" stroke-width="0.12" >Time (s)</text>
<text x="524.3" y="468.6" font-size="8" fill="#000" font-family="Liberation Serif" textLength="346" lengthAdjust="spacingAndGlyphs" text-anchor="middle" stroke="#000" stroke-width="0.12" >Local/remote: tohojo-testbed-01/testserv-05 - Time: 2014-10-03T06:16:50.149347 - Length/step: 140s/0.20s</text>
<text x="763.2" y="130.5" font-size="9.6" fill="#000" font-family="Liberation Serif" textLength="57.7" lengthAdjust="spacingAndGlyphs" stroke="#000" stroke-width="0.12" >TCP download</text>
<line x1="773.6" y1="141.4" x2="792.1" y2="141.4" stroke="#1b9e77" stroke-width="1.3"/>
<text x="797.7" y="144.3" font-size="8" fill="#000" font-family="Liberation Serif" textLength="8.3" lengthAdjust="spacingAndGlyphs" stroke="#000" stroke-width="0.12" >BE</text>
<line x1="773.6" y1="154.8" x2="792.1" y2="154.8" stroke="#d95f02" stroke-width="1.3"/>
<text x="797.7" y="157.7" font-size="8" fill="#000" font-family="Liberation Serif" textLength="11.3" lengthAdjust="spacingAndGlyphs" stroke="#000" stroke-width="0.12" >BE2</text>
<line x1="773.6" y1="168.1" x2="792.1" y2="168.1" stroke="#7570b3" stroke-width="1.3"/>
<text x="797.7" y="171.0" font-size="8" fill="#000" font-family="Liberation Serif" textLength="11.3" lengthAdjust="spacingAndGlyphs" stroke="#000" stroke-width="0.12" >BE3</text>
<line x1="773.6" y1="181.4" x2="792.1" y2="181.4" stroke="#e7298a" stroke-width="1.3"/>
<text x="797.7" y="184.3" font-size="8" fill="#000" font-family="Liberation Serif" textLength="11.3" lengthAdjust="spacingAndGlyphs" stroke="#000" stroke-width="0.12" >BE4</text>
<line x1="773.6" y1="194.8" x2="792.1" y2="194.8" stroke="#000" stroke-width="2.6"/>
<text x="797.7" y="197.7" font-size="8" fill="#000" font-family="Liberation Serif" textLength="11.5" lengthAdjust="spacingAndGlyphs" stroke="#000" stroke-width="0.12" >Avg</text>
<text x="763.2" y="238.9" font-size="9.6" fill="#000" font-family="Liberation Serif" textLength="45.7" lengthAdjust="spacingAndGlyphs" stroke="#000" stroke-width="0.12" >TCP upload</text>
<line x1="767.9" y1="249.5" x2="785.5" y2="249.5" stroke="#1b9e77" stroke-width="1.3"/>
<text x="791.7" y="252.4" font-size="8" fill="#000" font-family="Liberation Serif" textLength="8.3" lengthAdjust="spacingAndGlyphs" stroke="#000" stroke-width="0.12" >BE</text>
<line x1="767.9" y1="262.9" x2="785.5" y2="262.9" stroke="#d95f02" stroke-width="1.3"/>
<text x="791.7" y="265.8" font-size="8" fill="#000" font-family="Liberation Serif" textLength="11.3" lengthAdjust="spacingAndGlyphs" stroke="#000" stroke-width="0.12" >BE2</text>
<line x1="767.9" y1="276.2" x2="785.5" y2="276.2" stroke="#7570b3" stroke-width="1.3"/>
<text x="791.7" y="279.1" font-size="8" fill="#000" font-family="Liberation Serif" textLength="11.3" lengthAdjust="spacingAndGlyphs" stroke="#000" stroke-width="0.12" >BE3</text>
<line x1="767.9" y1="289.6" x2="785.5" y2="289.6" stroke="#e7298a" stroke-width="1.3"/>
<text x="791.7" y="292.4" font-size="8" fill="#000" font-family="Liberation Serif" textLength="11.3" lengthAdjust="spacingAndGlyphs" stroke="#000" stroke-width="0.12" >BE4</text>
<line x1="767.9" y1="302.9" x2="785.5" y2="302.9" stroke="#000" stroke-width="2.6"/>
<text x="791.7" y="305.8" font-size="8" fill="#000" font-family="Liberation Serif" textLength="11.5" lengthAdjust="spacingAndGlyphs" stroke="#000" stroke-width="0.12" >Avg</text>
<text x="770.1" y="347.6" font-size="9.6" fill="#000" font-family="Liberation Serif" textLength="38.8" lengthAdjust="spacingAndGlyphs" stroke="#000" stroke-width="0.12" >Ping (ms)</text>
<line x1="762.8" y1="358.5" x2="780.5" y2="358.5" stroke="#1b9e77" stroke-width="1.3"/>
<text x="786.8" y="361.4" font-size="8" fill="#000" font-family="Liberation Serif" textLength="28.5" lengthAdjust="spacingAndGlyphs" stroke="#000" stroke-width="0.12" >UDP BE1</text>
<line x1="762.8" y1="371.9" x2="780.5" y2="371.9" stroke="#d95f02" stroke-width="1.3"/>
<text x="786.8" y="374.8" font-size="8" fill="#000" font-family="Liberation Serif" textLength="28.5" lengthAdjust="spacingAndGlyphs" stroke="#000" stroke-width="0.12" >UDP BE2</text>
<line x1="762.8" y1="385.2" x2="780.5" y2="385.2" stroke="#7570b3" stroke-width="1.3"/>
<text x="786.8" y="388.1" font-size="8" fill="#000" font-family="Liberation Serif" textLength="28.5" lengthAdjust="spacingAndGlyphs" stroke="#000" stroke-width="0.12" >UDP BE3</text>
<line x1="762.8" y1="398.6" x2="780.5" y2="398.6" stroke="#e7298a" stroke-width="1.3"/>
<text x="786.8" y="401.4" font-size="8" fill="#000" font-family="Liberation Serif" textLength="17.5" lengthAdjust="spacingAndGlyphs" stroke="#000" stroke-width="0.12" >ICMP</text>
<line x1="762.8" y1="411.9" x2="780.5" y2="411.9" stroke="#000" stroke-width="2.6"/>
<text x="786.8" y="414.8" font-size="8" fill="#000" font-family="Liberation Serif" textLength="13.0" lengthAdjust="spacingAndGlyphs" stroke="#000" stroke-width="0.12" >Avg</text>
<line x1="269.6" y1="476" x2="269.6" y2="507" stroke="#bdbfc0" stroke-width="1"/>
<line x1="422.6" y1="476" x2="422.6" y2="507" stroke="#bdbfc0" stroke-width="1"/>
<g fill="#000">
<!-- home -->
<path d="M175.6 486.7 L168.3 493.2 L169.3 494.2 L175.6 488.6 L181.9 494.2 L182.9 493.2 L179.9 490.5 V487.3 H178.3 V489 Z"/>
<path d="M170.6 494 L175.6 489.6 L180.6 494 V499 H177.3 V495.8 H173.9 V499 H170.6 Z"/>
</g>
<g stroke="#000" stroke-width="2.4" stroke-linecap="round" stroke-linejoin="round" fill="none">
<!-- back -->
<path d="M216.6 492 H206 M210.6 486.6 L205.2 492 L210.6 497.4" stroke-width="2.7"/>
<!-- forward -->
<path d="M238.8 492 H249.4 M244.8 486.6 L250.2 492 L244.8 497.4" stroke-width="2.7"/>
</g>
<g fill="#000">
<!-- move -->
<path d="M293.8 483.8 L297 487.2 H294.8 V490.8 H298.4 V488.6 L301.9 491.9 L298.4 495.2 V493 H294.8 V496.6 H297 L293.8 500 L290.6 496.6 H292.8 V493 H289.2 V495.2 L285.8 491.9 L289.2 488.6 V490.8 H292.8 V487.2 H290.6 Z"/>
</g>
<g stroke="#000" fill="none">
<!-- zoom -->
<circle cx="327.1" cy="490.6" r="5.3" stroke-width="2.1"/>
<path d="M331 494.6 L335.3 498.8" stroke-width="2.4" stroke-linecap="round"/>
<!-- sliders -->
<path d="M356 487.9 H370 M356 492.5 H370 M356 497.2 H370" stroke-width="1.5"/>
</g>
<g fill="#000">
<circle cx="360" cy="487.9" r="1.9"/><circle cx="365.8" cy="492.5" r="1.9"/><circle cx="361.2" cy="497.2" r="1.9"/>
</g>
<g stroke="#000" fill="none">
<!-- chart -->
<path d="M389.6 485 V498.5 H406.3" stroke-width="1.1"/>
<path d="M391.5 495.5 L396 491.2 L399 493.6 L404.5 487.8" stroke-width="2" stroke-linecap="round" stroke-linejoin="round"/>
</g>
<path d="M401.8 486.3 L406.3 485.6 L405.6 490.1 Z" fill="#000"/>
<!-- save -->
<path fill-rule="evenodd" fill="#000" d="M439.7 486 a1 1 0 0 1 1 -1 H449.6 L453.9 489.3 V497.8 a1 1 0 0 1 -1 1 H440.7 a1 1 0 0 1 -1 -1 Z M441.4 486.7 V497.1 H452.2 V490 L449 486.7 Z"/>
<rect x="442" y="486.2" width="7.1" height="4.4" rx="0.6" fill="#000"/>
<ellipse cx="446.7" cy="487.9" rx="1.0" ry="1.3" fill="#f3f4f4"/>
<path fill-rule="evenodd" fill="#000" d="M442 493 H451.1 V497.5 H442 Z M443.4 494.4 V496.9 H449.7 V494.4 Z"/>

<rect x="909.5" y="37.5" width="190.5" height="485" rx="2" fill="#f3f4f4" stroke="#c9cbcc" stroke-width="1"/>
<text x="912.5" y="50.6" font-size="10" fill="#31363b" textLength="44.4" lengthAdjust="spacingAndGlyphs" stroke="#31363b" stroke-width="0.2" >Select plot</text>
<path d="M1073.4 43.1 L1076.5 46.2 L1073.4 49.300000000000004 L1070.3000000000002 46.2 Z" fill="none" stroke="#85888b" stroke-width="1.2"/>
<circle cx="1090" cy="46.1" r="5.8" fill="#8b8e91"/>
<path d="M1087.39 43.49 L1092.61 48.71 M1092.61 43.49 L1087.39 48.71" stroke="#f3f4f4" stroke-width="1.15"/>
<rect x="910.5" y="58.5" width="188" height="463.5" fill="#fcfcfc" stroke="#c9cbcc" stroke-width="1"/>
<rect x="1084.5" y="59" width="13.5" height="462.5" fill="#f4f5f5"/>
<rect x="911" y="507" width="173.5" height="14.5" fill="#f4f5f5"/>
<clipPath id="lc"><rect x="911" y="59" width="173.3" height="448"/></clipPath>
<g clip-path="url(#lc)">
<rect x="911.4" y="301.5" width="172.8" height="16.6" fill="#c2e0f5"/>
<text x="913.75" y="71.30" font-size="10" fill="#31363b" stroke="#31363b" stroke-width="0.2" >download (Download bandwidth plot)</text>
<text x="913.75" y="88.63" font-size="10" fill="#31363b" stroke="#31363b" stroke-width="0.2" >download_scaled (Download bandwidth plot w/axes scaled to remove outliers)</text>
<text x="913.75" y="105.96" font-size="10" fill="#31363b" stroke="#31363b" stroke-width="0.2" >upload (Upload bandwidth plot)</text>
<text x="913.75" y="123.29" font-size="10" fill="#31363b" stroke="#31363b" stroke-width="0.2" >upload_scaled (Upload bandwidth w/axes scaled to remove outliers)</text>
<text x="913.75" y="140.62" font-size="10" fill="#31363b" stroke="#31363b" stroke-width="0.2" >ping (Ping plot)</text>
<text x="913.75" y="157.95" font-size="10" fill="#31363b" stroke="#31363b" stroke-width="0.2" >ping_scaled (Ping w/axes scaled to remove outliers)</text>
<text x="913.75" y="175.28" font-size="10" fill="#31363b" stroke="#31363b" stroke-width="0.2" >ping_cdf (Ping CDF plot)</text>
<text x="913.75" y="192.61" font-size="10" fill="#31363b" stroke="#31363b" stroke-width="0.2" >icmp_cdf (ICMP CDF plot)</text>
<text x="913.75" y="209.94" font-size="10" fill="#31363b" stroke="#31363b" stroke-width="0.2" >icmp_combine (Combined ICMP ping plot)</text>
<text x="913.75" y="227.27" font-size="10" fill="#31363b" stroke="#31363b" stroke-width="0.2" >totals_bandwidth (Total bandwidth)</text>
<text x="913.75" y="244.60" font-size="10" fill="#31363b" stroke="#31363b" stroke-width="0.2" >totals (Total bandwidth and average ping plot)</text>
<text x="913.75" y="261.93" font-size="10" fill="#31363b" stroke="#31363b" stroke-width="0.2" >totals_scaled (Total bandwidth and average ping plot (scaled))</text>
<text x="913.75" y="279.26" font-size="10" fill="#31363b" stroke="#31363b" stroke-width="0.2" >totals_combine (Combined total bandwidth)</text>
<text x="913.75" y="296.59" font-size="10" fill="#31363b" stroke="#31363b" stroke-width="0.2" >all_scaled (Download, upload, ping (scaled versions))</text>
<text x="913.75" y="313.92" font-size="10" fill="#31363b" stroke="#31363b" stroke-width="0.2" >all (Download, upload, ping (unscaled versions))</text>
<text x="913.75" y="331.25" font-size="10" fill="#31363b" stroke="#31363b" stroke-width="0.2" >box_download (Download bandwidth box plot)</text>
<text x="913.75" y="348.58" font-size="10" fill="#31363b" stroke="#31363b" stroke-width="0.2" >box_upload (Upload bandwidth box plot)</text>
<text x="913.75" y="365.91" font-size="10" fill="#31363b" stroke="#31363b" stroke-width="0.2" >box_ping (Ping box plot)</text>
<text x="913.75" y="383.24" font-size="10" fill="#31363b" stroke="#31363b" stroke-width="0.2" >box_totals (Box plot of totals)</text>
<text x="913.75" y="400.57" font-size="10" fill="#31363b" stroke="#31363b" stroke-width="0.2" >bar_totals (Box plot of totals)</text>
<text x="913.75" y="417.90" font-size="10" fill="#31363b" stroke="#31363b" stroke-width="0.2" >box_combine (Box plot of averages of several data files)</text>
<text x="913.75" y="435.23" font-size="10" fill="#31363b" stroke="#31363b" stroke-width="0.2" >bar_combine (Bar plot of averages of several data files)</text>
<text x="913.75" y="452.56" font-size="10" fill="#31363b" stroke="#31363b" stroke-width="0.2" >qq_icmp (Q-Q plot of ICMP pings)</text>
<text x="913.75" y="469.89" font-size="10" fill="#31363b" stroke="#31363b" stroke-width="0.2" >qq_download (Q-Q plot of total download bandwidth)</text>
<text x="913.75" y="487.22" font-size="10" fill="#31363b" stroke="#31363b" stroke-width="0.2" >qq_upload (Q-Q plot of total upload bandwidth)</text>
<text x="913.75" y="504.55" font-size="10" fill="#31363b" stroke="#31363b" stroke-width="0.2" >ellipsis (Ellipsis plot)</text>
</g>
<rect x="1089.2" y="64.3" width="4.6" height="321.7" rx="2.3" fill="#8a8d90"/>
<rect x="916.1" y="512.4" width="62.9" height="4.4" rx="2.2" fill="#8a8d90"/>
<rect x="147" y="527" width="953" height="124" rx="2" fill="#f3f4f4" stroke="#c9cbcc" stroke-width="1"/>
<text x="150" y="539.75" font-size="10" fill="#31363b" textLength="42.75" lengthAdjust="spacingAndGlyphs" stroke="#31363b" stroke-width="0.2" >Open files</text>
<path d="M1073.1 532.5 L1076.1999999999998 535.6 L1073.1 538.7 L1070.0 535.6 Z" fill="none" stroke="#85888b" stroke-width="1.2"/>
<circle cx="1089.75" cy="535.6" r="5.9" fill="#8b8e91"/>
<path d="M1087.095 532.945 L1092.405 538.255 M1092.405 532.945 L1087.095 538.255" stroke="#f3f4f4" stroke-width="1.15"/>
<rect x="148.5" y="549" width="950.5" height="99.5" fill="#fcfcfc" stroke="#3daee9" stroke-width="1"/>
<rect x="149" y="549.5" width="949.5" height="20" fill="#eff0f1"/>
<line x1="149" y1="569.5" x2="1098.5" y2="569.5" stroke="#d0d2d3" stroke-width="1"/>
<rect x="149" y="570" width="13.5" height="78" fill="#eff0f1"/>
<line x1="162.5" y1="570" x2="162.5" y2="648" stroke="#d0d2d3" stroke-width="1"/>
<rect x="163" y="591.5" width="764.3" height="20.8" fill="#eff0f1"/>
<line x1="149" y1="591.25" x2="927.3" y2="591.25" stroke="#d0d2d3" stroke-width="1"/>
<line x1="149" y1="612.4" x2="927.3" y2="612.4" stroke="#d0d2d3" stroke-width="1"/>
<line x1="196.25" y1="549.5" x2="196.25" y2="612.5" stroke="#d0d2d3" stroke-width="1"/>
<line x1="547.25" y1="549.5" x2="547.25" y2="612.5" stroke="#d0d2d3" stroke-width="1"/>
<line x1="855.4" y1="549.5" x2="855.4" y2="612.5" stroke="#d0d2d3" stroke-width="1"/>
<line x1="927.3" y1="549.5" x2="927.3" y2="612.5" stroke="#d0d2d3" stroke-width="1"/>
<text x="166.9" y="562.5" font-size="10" fill="#31363b" textLength="13.35" lengthAdjust="spacingAndGlyphs" stroke="#31363b" stroke-width="0.2" >Act</text>
<path d="M186 561 L189 557.8 L192 561" fill="none" stroke="#31363b" stroke-width="1"/>
<text x="201.5" y="562.7" font-size="10" fill="#31363b" textLength="38.5" lengthAdjust="spacingAndGlyphs" stroke="#31363b" stroke-width="0.2" >Filename</text>
<text x="552.25" y="562.9" font-size="10" fill="#31363b" textLength="17.1" lengthAdjust="spacingAndGlyphs" stroke="#31363b" stroke-width="0.2" >Title</text>
<text x="860.6" y="562.9" font-size="10" fill="#31363b" textLength="51.9" lengthAdjust="spacingAndGlyphs" stroke="#31363b" stroke-width="0.2" >Egress qdisc</text>
<text x="153.75" y="583.75" font-size="10" fill="#31363b" stroke="#31363b" stroke-width="0.2" >1</text>
<text x="152.5" y="606.0" font-size="10" fill="#31363b" stroke="#31363b" stroke-width="0.2" >2</text>
<rect x="166.75" y="574.9" width="10.7" height="10.7" rx="1.8" fill="#fcfcfc" stroke="#b6b8ba" stroke-width="1"/>
<rect x="169" y="577.2" width="6.2" height="6.2" fill="#b3b5b7"/>
<rect x="166.75" y="596.6" width="10.7" height="10.7" rx="1.8" fill="#fcfcfc" stroke="#5c6166" stroke-width="1"/>
<text x="199.75" y="583.6" font-size="10" fill="#a0a2a4" textLength="311.8" lengthAdjust="spacingAndGlyphs" font-weight="bold" stroke="#a0a2a4" stroke-width="0.2" >batch-rrul-2014-10-02T153111-50ms-10Mbit-fq_codel-cubic-10.json.gz</text>
<text x="549.75" y="583.6" font-size="10" fill="#a0a2a4" textLength="269.7" lengthAdjust="spacingAndGlyphs" font-weight="bold" stroke="#a0a2a4" stroke-width="0.2" >qdisc:fq_codel rep:10 rtt:50ms rate:10Mbit/10Mbit cc:cubic</text>
<text x="858.1" y="583.6" font-size="10" fill="#a0a2a4" textLength="37.5" lengthAdjust="spacingAndGlyphs" font-weight="bold" stroke="#a0a2a4" stroke-width="0.2" >fq_codel</text>
<text x="199.75" y="605.4" font-size="10" fill="#31363b" textLength="324.4" lengthAdjust="spacingAndGlyphs" stroke="#31363b" stroke-width="0.2" >batch-rrul-2014-10-02T153111-50ms-10Mbit-pfifo_fast_1000-cubic-10.json.gz</text>
<text x="549.75" y="605.4" font-size="10" fill="#31363b" textLength="278" lengthAdjust="spacingAndGlyphs" stroke="#31363b" stroke-width="0.2" >qdisc:pfifo_fast_1000 rep:10 rtt:50ms rate:10Mbit/10Mbit cc:cubic</text>
<text x="858.1" y="605.4" font-size="10" fill="#31363b" textLength="39.4" lengthAdjust="spacingAndGlyphs" stroke="#31363b" stroke-width="0.2" >pfifo_fast</text>
<rect x="146" y="651" width="59.5" height="19.4" fill="#d3d4d5"/>
<rect x="262.5" y="651" width="58" height="19.4" rx="2" fill="#d3d4d5"/>
<rect x="205.5" y="651" width="57" height="19.4" fill="#f5f6f6" stroke="#d0d2d3" stroke-width="0.8"/>
<text x="151.5" y="665.0" font-size="10" fill="#31363b" textLength="47.5" lengthAdjust="spacingAndGlyphs" stroke="#31363b" stroke-width="0.2" >Log entries</text>
<text x="212.25" y="665.0" font-size="10" fill="#31363b" textLength="43" lengthAdjust="spacingAndGlyphs" stroke="#31363b" stroke-width="0.2" >Open files</text>
<text x="270.8" y="665.0" font-size="10" fill="#31363b" textLength="41.7" lengthAdjust="spacingAndGlyphs" stroke="#31363b" stroke-width="0.2" >Metadata</text>
</svg>
</body></html>
